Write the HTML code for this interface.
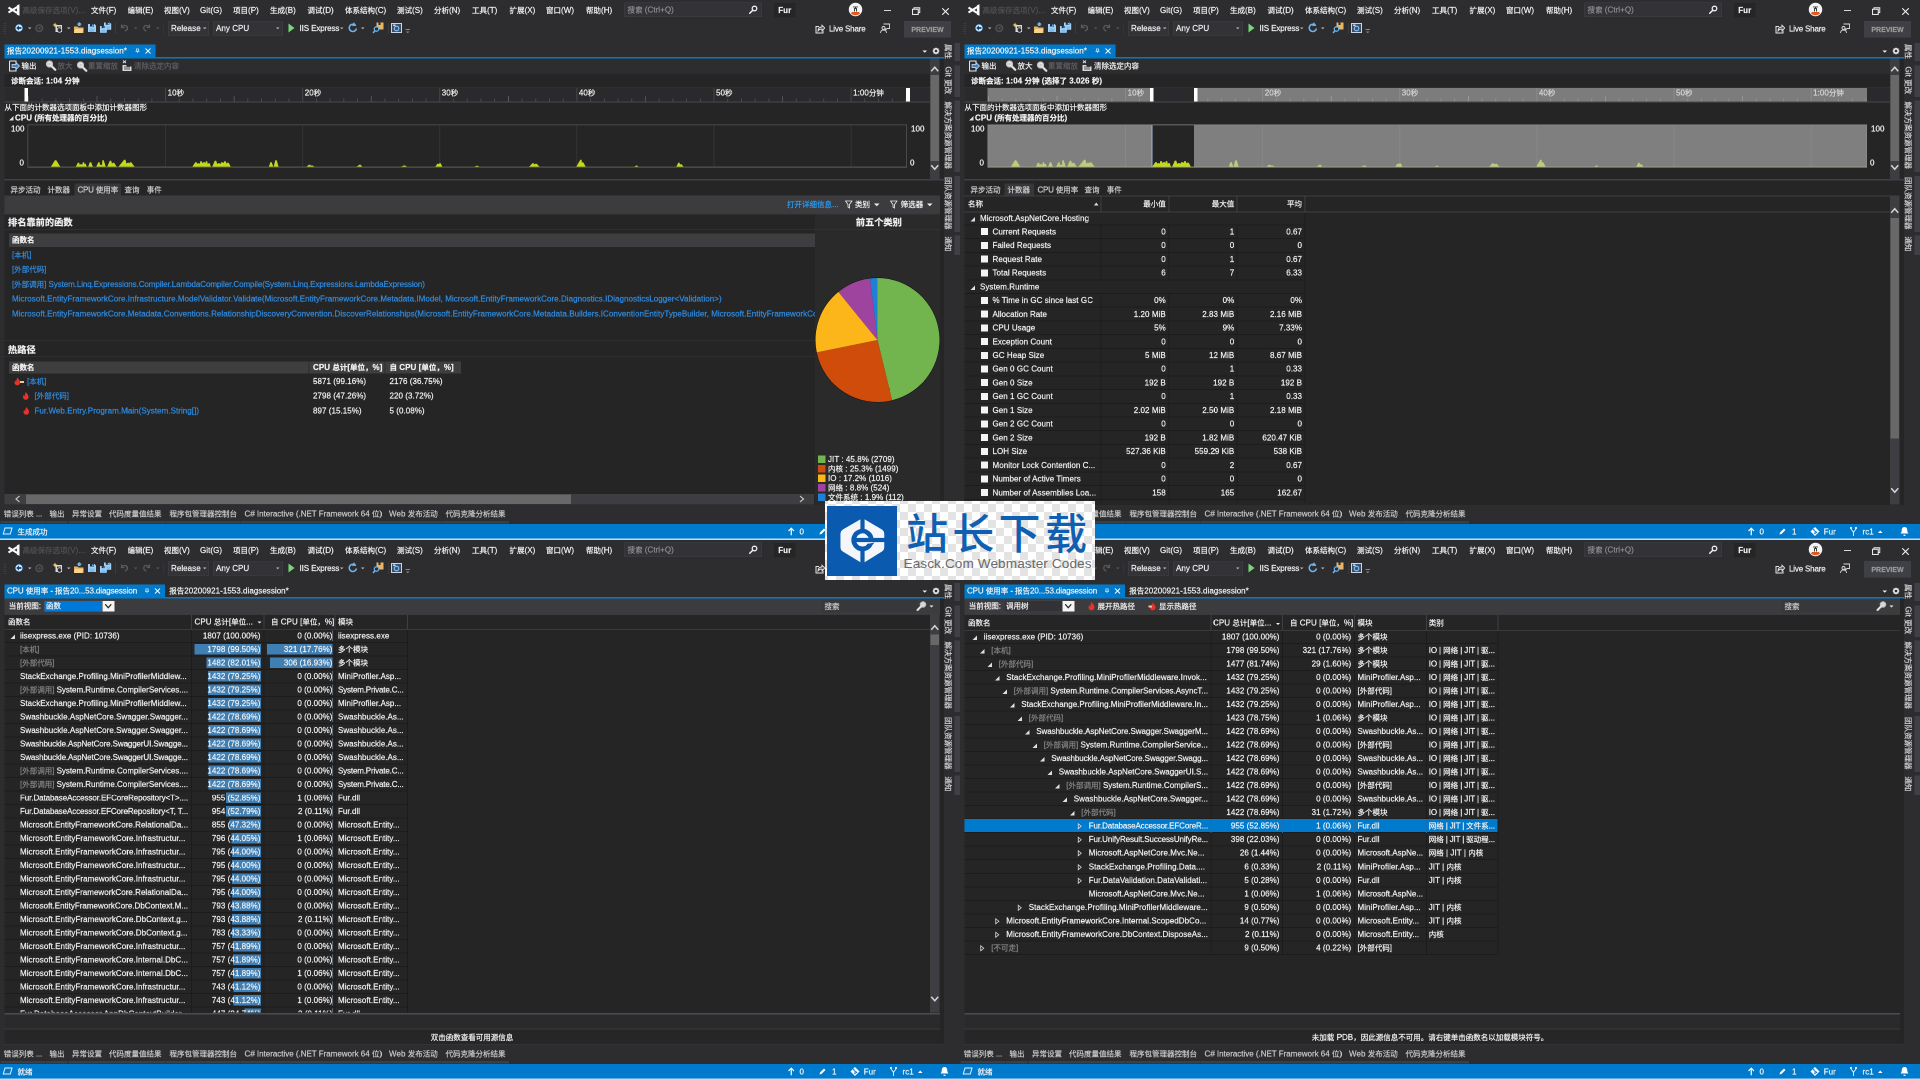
<!DOCTYPE html>
<html lang="zh-CN"><head><meta charset="utf-8"><title>Visual Studio</title>
<style>
html,body{margin:0;padding:0}
body{width:1920px;height:1080px;overflow:hidden;background:#2d2d30;position:relative}
.win{position:absolute;width:1920px;height:1080px;transform:scale(.5);transform-origin:0 0;overflow:hidden;background:#2d2d30;font:16px/22px "Liberation Sans","Noto Sans CJK SC",sans-serif;color:#f1f1f1;letter-spacing:.1px;will-change:transform}
.win span,.win b,.win svg,.win div{position:absolute;display:block}
.win span{white-space:pre;height:22px;-webkit-text-stroke:.4px}
.win i{font-style:normal;letter-spacing:0;font-size:.9375em}
.win u{text-decoration:none;color:#848484}
.dim{color:#505052}
.bd{font-weight:bold}
.h2{font-weight:bold;font-size:19.700px}
.lk{color:#2e8ce2}
.tt{color:#c8c8c8}
.vt{transform:rotate(90deg);transform-origin:0 0;color:#d2d2d2}
.wm{position:absolute;left:825px;top:501px;width:270px;height:79px;overflow:hidden;background-color:#fff;
background-image:linear-gradient(45deg,#e3e3e3 25%,transparent 25%,transparent 75%,#e3e3e3 75%),linear-gradient(45deg,#e3e3e3 25%,transparent 25%,transparent 75%,#e3e3e3 75%);
background-size:16px 16px;background-position:11px 3px,19px 11px}
</style></head>
<body>
<div class="win" style="left:0px;top:0px">
<svg style="left:14px;top:8px" width="26" height="24" viewBox="0 0 24 24"><path d="M18.8 2.5L24 0.5V23.5L18.8 21.5Z" fill="#fafafa"/><path d="M19.5 6L2 17M19.5 18L2 7" stroke="#fafafa" stroke-width="4.2" fill="none"/></svg>
<span class="dim" style="left:45px;top:10px;"><i>高级保存选项</i>(V)...</span>
<span class="mn" style="left:182px;top:10px;"><i>文件</i>(F)</span>
<span class="mn" style="left:255px;top:10px;"><i>编辑</i>(E)</span>
<span class="mn" style="left:328px;top:10px;"><i>视图</i>(V)</span>
<span class="mn" style="left:400px;top:10px;">Git(G)</span>
<span class="mn" style="left:466px;top:10px;"><i>项目</i>(P)</span>
<span class="mn" style="left:540px;top:10px;"><i>生成</i>(B)</span>
<span class="mn" style="left:615px;top:10px;"><i>调试</i>(D)</span>
<span class="mn" style="left:690px;top:10px;"><i>体系结构</i>(C)</span>
<span class="mn" style="left:794px;top:10px;"><i>测试</i>(S)</span>
<span class="mn" style="left:868px;top:10px;"><i>分析</i>(N)</span>
<span class="mn" style="left:944px;top:10px;"><i>工具</i>(T)</span>
<span class="mn" style="left:1019px;top:10px;"><i>扩展</i>(X)</span>
<span class="mn" style="left:1092px;top:10px;"><i>窗口</i>(W)</span>
<span class="mn" style="left:1172px;top:10px;"><i>帮助</i>(H)</span>
<b style="left:1248px;top:5px;width:276px;height:29px;background:#333337;border:1px solid #3f3f46;box-sizing:border-box"></b>
<span style="left:1255px;top:9px;color:#8c8c8c"><i>搜索</i> (Ctrl+Q)</span>
<svg style="left:1497px;top:10px" width="19" height="19" viewBox="0 0 19 19"><circle cx="12" cy="7" r="4.6" fill="none" stroke="#f1f1f1" stroke-width="2.6"/><path d="M8.5 10.5L2.5 16.5" stroke="#f1f1f1" stroke-width="3" stroke-linecap="round"/></svg>
<b style="left:1548px;top:6px;width:43px;height:29px;background:#252526;"></b>
<span class="bd" style="left:1569.5px;top:10px;transform:translateX(-50%);">Fur</span>
<svg style="left:1697px;top:5px" width="28" height="28" viewBox="0 0 28 28"><circle cx="14" cy="14" r="13.5" fill="#f4f4f4"/><path d="M5 22a13.5 13.5 0 0 0 18 0l-2-3h-14z" fill="#e2571e"/><path d="M9 8h10v3h-2v7h-2v-5h-2v5h-2v-7H9z" fill="#3a3a3a"/><circle cx="11" cy="10" r="1.3" fill="#fff"/><circle cx="17" cy="10" r="1.3" fill="#fff"/></svg>
<b style="left:1768px;top:20px;width:14px;height:2px;background:#d8d8d8;"></b>
<svg style="left:1824px;top:14px" width="17" height="16" viewBox="0 0 17 16"><path d="M4 4V1.5H15.5V11H13" fill="none" stroke="#e8e8e8" stroke-width="2"/><rect x="1" y="4.5" width="11.5" height="10.5" fill="none" stroke="#e8e8e8" stroke-width="2.2"/></svg>
<svg style="left:1883px;top:15px" width="16" height="16" viewBox="0 0 16 16"><path d="M1.5 1.5L14.5 14.5M14.5 1.5L1.5 14.5" stroke="#f1f1f1" stroke-width="2.2"/></svg>
<svg style="left:7px;top:45px" width="6" height="24" viewBox="0 0 6 24"><path d="M1 1v22M4 1v22" stroke="#46464a" stroke-width="1.6" stroke-dasharray="2 2"/></svg>
<svg style="left:29px;top:47px" width="18" height="18" viewBox="0 0 18 18"><circle cx="9" cy="9" r="8" fill="#cfe8ff" stroke="#0f3557" stroke-width="1.6"/><path d="M3.5 9l5.5-5v3.2h4.8v3.6H9V14z" fill="#0d3f70"/></svg>
<svg style="left:55.5px;top:55.25px" width="7" height="3.5" viewBox="0 0 7 3.5"><path d="M0 0H7L3.5 3.5Z" fill="#bdbdbd"/></svg>
<svg style="left:70px;top:48px" width="17" height="17" viewBox="0 0 17 17"><circle cx="8.5" cy="8.5" r="6.5" fill="none" stroke="#505053" stroke-width="3"/><path d="M12.5 8.5l-4-3.5v2.5H5v2h3.5V12z" fill="#505053"/></svg>
<svg style="left:105px;top:45px" width="22" height="22" viewBox="0 0 22 22"><rect x="6" y="5" width="13" height="14" fill="#d9d9d9"/><rect x="9" y="8" width="8" height="9" fill="#3a3a3d"/><path d="M5 0l1.6 3.4L10 5 6.6 6.6 5 10 3.4 6.6 0 5l3.4-1.6z" fill="#f3c667"/><circle cx="14" cy="15" r="4.5" fill="#2d2d30" stroke="#e8e8e8" stroke-width="1.6"/></svg>
<svg style="left:133.5px;top:55.25px" width="7" height="3.5" viewBox="0 0 7 3.5"><path d="M0 0H7L3.5 3.5Z" fill="#bdbdbd"/></svg>
<svg style="left:147px;top:44px" width="21" height="24" viewBox="0 0 21 24"><path d="M1 9h7l2 2h10v11H1z" fill="#e7b563"/><path d="M3 14h17l-3 8H1z" fill="#f5d48e"/><path d="M9 8V5H6l5.5-5 5.5 5H14v3z" fill="#6cb5f0"/></svg>
<svg style="left:176px;top:48px" width="16" height="16" viewBox="0 0 16 16"><path fill="#9fd0f7" d="M0 0H13L16 3V16H0Z"/><rect x="4" y="0" width="8" height="5" fill="#1f3347"/><rect x="8.5" y="1" width="2.5" height="3" fill="#9fd0f7"/><rect x="3" y="9" width="10" height="7" fill="#7fbdf0"/></svg>
<svg style="left:200px;top:45px" width="23" height="21" viewBox="0 0 23 21"><g transform="translate(8,0) scale(.9)"><path fill="#9fd0f7" d="M0 0H13L16 3V16H0Z"/><rect x="4" y="0" width="8" height="5" fill="#1f3347"/><rect x="8.5" y="1" width="2.5" height="3" fill="#9fd0f7"/><rect x="3" y="9" width="10" height="7" fill="#7fbdf0"/></g><g transform="translate(0,7) scale(.85)"><path fill="#9fd0f7" d="M0 0H13L16 3V16H0Z"/><rect x="4" y="0" width="8" height="5" fill="#1f3347"/><rect x="8.5" y="1" width="2.5" height="3" fill="#9fd0f7"/><rect x="3" y="9" width="10" height="7" fill="#7fbdf0"/></g></svg>
<b style="left:231px;top:45px;width:1px;height:23px;background:#46464a;"></b>
<svg style="left:240px;top:46px" width="18" height="18" viewBox="0 0 18 18"><path d="M3 3v6h6" fill="none" stroke="#5a5a5e" stroke-width="2.4"/><path d="M3.5 8.5C6 3.5 14 3.5 14.5 10c0 3-2 5-5 6" fill="none" stroke="#5a5a5e" stroke-width="2.4"/></svg>
<svg style="left:267.5px;top:55.25px" width="7" height="3.5" viewBox="0 0 7 3.5"><path d="M0 0H7L3.5 3.5Z" fill="#5a5a5e"/></svg>
<svg style="left:284px;top:46px" width="18" height="18" viewBox="0 0 18 18"><path d="M15 3v6H9" fill="none" stroke="#5a5a5e" stroke-width="2.4"/><path d="M14.5 8.5C12 3.5 4 3.5 3.5 10c0 3 2 5 5 6" fill="none" stroke="#5a5a5e" stroke-width="2.4"/></svg>
<svg style="left:311.5px;top:55.25px" width="7" height="3.5" viewBox="0 0 7 3.5"><path d="M0 0H7L3.5 3.5Z" fill="#5a5a5e"/></svg>
<b style="left:326px;top:45px;width:1px;height:23px;background:#3a3a3e;"></b>
<b style="left:336px;top:43px;width:82px;height:28px;background:#333337;border:1px solid #434346;box-sizing:border-box"></b>
<span style="left:342px;top:45.5px;">Release</span>
<svg style="left:405.5px;top:55.25px" width="7" height="3.5" viewBox="0 0 7 3.5"><path d="M0 0H7L3.5 3.5Z" fill="#bdbdbd"/></svg>
<b style="left:426px;top:43px;width:140px;height:28px;background:#333337;border:1px solid #434346;box-sizing:border-box"></b>
<span style="left:432px;top:45.5px;">Any CPU</span>
<svg style="left:551.5px;top:55.25px" width="7" height="3.5" viewBox="0 0 7 3.5"><path d="M0 0H7L3.5 3.5Z" fill="#bdbdbd"/></svg>
<svg style="left:576px;top:46px" width="14" height="20" viewBox="0 0 14 20"><path d="M1 1l12 9-12 9z" fill="#7ad67a"/></svg>
<span style="left:599px;top:45.5px;letter-spacing:-.2px">IIS Express</span>
<svg style="left:679.5px;top:55.25px" width="7" height="3.5" viewBox="0 0 7 3.5"><path d="M0 0H7L3.5 3.5Z" fill="#bdbdbd"/></svg>
<svg style="left:695px;top:45px" width="21" height="22" viewBox="0 0 21 22"><path d="M16.5 6.5A7.2 7.2 0 1 0 17.8 12" fill="none" stroke="#6cb5f0" stroke-width="3"/><path d="M11 0l7 4.5-7 4.5z" fill="#6cb5f0" transform="rotate(25 14 4)"/></svg>
<svg style="left:721.5px;top:55.25px" width="7" height="3.5" viewBox="0 0 7 3.5"><path d="M0 0H7L3.5 3.5Z" fill="#bdbdbd"/></svg>
<svg style="left:745px;top:44px" width="24" height="24" viewBox="0 0 24 24"><path d="M8 1h14v14H8z" fill="#e7b563"/><path d="M12 1v5h4V1" fill="#2d2d30"/><circle cx="8" cy="14" r="4.5" fill="#2d2d30" stroke="#6cb5f0" stroke-width="2.4"/><path d="M5 17.5L1 22" stroke="#6cb5f0" stroke-width="3"/></svg>
<b style="left:776px;top:45px;width:1px;height:23px;background:#46464a;"></b>
<svg style="left:782px;top:46px" width="22" height="20" viewBox="0 0 22 20"><rect x="1" y="1" width="20" height="18" fill="#3d4f66" stroke="#c8d6e8" stroke-width="2"/><circle cx="11" cy="11" r="4.5" fill="none" stroke="#7fbcf5" stroke-width="2.4"/><rect x="4" y="3" width="5" height="3" fill="#c8d6e8"/></svg>
<b style="left:811px;top:58px;width:9px;height:1.5px;background:#8a8a8a;"></b>
<svg style="left:812px;top:63.25px" width="7" height="3.5" viewBox="0 0 7 3.5"><path d="M0 0H7L3.5 3.5Z" fill="#8a8a8a"/></svg>
<svg style="left:1630px;top:48px" width="20" height="20" viewBox="0 0 20 20"><path d="M8 5H2v13h14v-5" fill="none" stroke="#e4e4e4" stroke-width="2"/><path d="M6 14c0-5 3-8 8-8V2.5l5.5 5.5-5.5 5.5V10c-4 0-6 1-8 4z" fill="none" stroke="#e4e4e4" stroke-width="1.8"/></svg>
<span style="left:1658px;top:47px;letter-spacing:-0.35px;">Live Share</span>
<svg style="left:1760px;top:46px" width="20" height="22" viewBox="0 0 20 22"><path d="M7 2h12v9h-5l-3 3v-3" fill="none" stroke="#d8d8d8" stroke-width="1.8"/><circle cx="7" cy="10" r="3" fill="none" stroke="#d8d8d8" stroke-width="1.8"/><path d="M1 20c0-4 3-6 6-6s6 2 6 6" fill="none" stroke="#d8d8d8" stroke-width="1.8"/></svg>
<b style="left:1808px;top:42px;width:94px;height:33px;background:#3f3f46;"></b>
<span style="left:1855px;top:47.5px;transform:translateX(-50%);color:#9b9b9b;font-weight:bold;font-size:14px;letter-spacing:0">PREVIEW</span>
<b style="left:9px;top:89px;width:302px;height:26px;background:#007acc;"></b>
<span style="left:14px;top:91px;"><i>报告</i>20200921-1553.diagsession*</span>
<svg style="left:270px;top:97px" width="10" height="10" viewBox="0 0 11 11"><path d="M3 1h5v5H3zM1 6h9M5.5 6v4" fill="none" stroke="#e6f2fb" stroke-width="1.5"/></svg>
<svg style="left:290px;top:96px" width="12" height="12" viewBox="0 0 12 12"><path d="M1 1l10 10M11 1L1 11" stroke="#fff" stroke-width="1.8"/></svg>
<b style="left:9px;top:114px;width:1879px;height:3px;background:#007acc;"></b>
<svg style="left:1844.5px;top:100.75px" width="9" height="4.5" viewBox="0 0 9 4.5"><path d="M0 0H9L4.5 4.5Z" fill="#f1f1f1"/></svg>
<svg style="left:1865px;top:95px" width="14" height="14" viewBox="0 0 14 14"><circle cx="7" cy="7" r="4.3" fill="none" stroke="#f1f1f1" stroke-width="3.2"/><path d="M7 0v14M0 7h14M2 2l10 10M12 2L2 12" stroke="#f1f1f1" stroke-width="1.6" stroke-dasharray="2.2 9.6"/></svg>
<b style="left:1888px;top:80px;width:32px;height:968px;background:#2d2d30;"></b>
<b style="left:1909px;top:86px;width:11px;height:36px;background:#3f3f46;"></b>
<span class="vt" style="left:1907px;top:88px"><i>属性</i></span>
<b style="left:1909px;top:131px;width:11px;height:63px;background:#3f3f46;"></b>
<span class="vt" style="left:1907px;top:133px">Git <i>更改</i></span>
<b style="left:1909px;top:201px;width:11px;height:143px;background:#3f3f46;"></b>
<span class="vt" style="left:1907px;top:203px"><i>解决方案资源管理器</i></span>
<b style="left:1909px;top:352px;width:11px;height:112px;background:#3f3f46;"></b>
<span class="vt" style="left:1907px;top:354px"><i>团队资源管理器</i></span>
<b style="left:1909px;top:471px;width:11px;height:38px;background:#3f3f46;"></b>
<span class="vt" style="left:1907px;top:473px"><i>通知</i></span>
<span class="tt" style="left:7.5px;top:1016.5px;letter-spacing:-0.32px;"><i>错误列表</i> ...</span>
<b style="left:0.5px;top:1042px;width:90.5px;height:5px;background:#3b3f46;"></b>
<span class="tt" style="left:99px;top:1016.5px;letter-spacing:-0.45px;"><i>输出</i></span>
<b style="left:92px;top:1042px;width:43px;height:5px;background:#3b3f46;"></b>
<span class="tt" style="left:144px;top:1016.5px;"><i>异常设置</i></span>
<b style="left:137px;top:1042px;width:74px;height:5px;background:#3b3f46;"></b>
<span class="tt" style="left:218px;top:1016.5px;"><i>代码度量值结果</i></span>
<b style="left:211px;top:1042px;width:120px;height:5px;background:#3b3f46;"></b>
<span class="tt" style="left:339px;top:1016.5px;"><i>程序包管理器控制台</i></span>
<b style="left:332px;top:1042px;width:149px;height:5px;background:#3b3f46;"></b>
<span class="tt" style="left:489px;top:1016.5px;letter-spacing:-0.03px;">C# Interactive (.NET Framework 64 <i>位</i>)</span>
<b style="left:482px;top:1042px;width:289px;height:5px;background:#3b3f46;"></b>
<span class="tt" style="left:778px;top:1016.5px;">Web <i>发布活动</i></span>
<b style="left:771px;top:1042px;width:112px;height:5px;background:#3b3f46;"></b>
<span class="tt" style="left:891px;top:1016.5px;letter-spacing:-0.45px;"><i>代码克隆分析结果</i></span>
<b style="left:884px;top:1042px;width:133px;height:5px;background:#3b3f46;"></b>
<b style="left:0px;top:1048px;width:1920px;height:29px;background:#007acc;"></b>
<b style="left:0px;top:1077px;width:1920px;height:3px;background:#b9def7;"></b>
<b style="left:9px;top:117px;width:1879px;height:893px;background:#252526;"></b>
<b style="left:9px;top:117px;width:1851px;height:31px;background:#2d2d30;"></b>
<svg style="left:18px;top:121px" width="22" height="22" viewBox="0 0 22 22"><path d="M1 1h13v6M14 15v6H1V1" fill="none" stroke="#e4e4e4" stroke-width="2.2"/><path d="M6 8h8V4l7 7-7 7v-4H6z" fill="#3b83c4" stroke="#d5e6f5" stroke-width="1.4"/></svg>
<span style="left:43px;top:120.5px;"><i>输出</i></span>
<svg style="left:91px;top:120px" width="22" height="22" viewBox="0 0 22 22"><circle cx="8" cy="8" r="6" fill="#e8e8e8" stroke="#bdbdbd" stroke-width="2.5"/><path d="M6 8h4" stroke="#8a8a8a" stroke-width="1.6"/><path d="M12.5 12.5l7 7" stroke="#e0e0e0" stroke-width="4.5" stroke-linecap="round"/></svg>
<span style="left:115px;top:120.5px;color:#5f5f62"><i>放大</i></span>
<svg style="left:153px;top:122px" width="22" height="22" viewBox="0 0 22 22"><circle cx="8" cy="8" r="6" fill="#e8e8e8" stroke="#bdbdbd" stroke-width="2.5"/><path d="M6 8h4" stroke="#8a8a8a" stroke-width="1.6"/><path d="M12.5 12.5l7 7" stroke="#e0e0e0" stroke-width="4.5" stroke-linecap="round"/></svg>
<span style="left:176px;top:120.5px;color:#5f5f62"><i>重置缩放</i></span>
<svg style="left:243px;top:120px" width="21" height="22" viewBox="0 0 21 22"><path d="M3 1l6 5M9 1L3 6" stroke="#e0e0e0" stroke-width="2"/><path d="M2 10h7l2 3h9v9H2z" fill="#d9d9d9"/><path d="M5 14h12M5 18h12" stroke="#252526" stroke-width="1.5"/></svg>
<span style="left:268px;top:120.5px;color:#5f5f62"><i>清除选定内容</i></span>
<span class="bd" style="left:22px;top:151px;"><i>诊断会话</i>: 1:04 <i>分钟</i></span>
<b style="left:9px;top:175px;width:1851px;height:29px;background:#2a2a2c;"></b>
<svg style="left:9px;top:175px" width="1851" height="29" viewBox="0 0 1851 29"><path d="M48 17v12" stroke="#5a5a5d" stroke-width="1.6"/><path d="M75.4 22v7" stroke="#505053" stroke-width="1.6"/><path d="M102.8 22v7" stroke="#505053" stroke-width="1.6"/><path d="M130.3 22v7" stroke="#505053" stroke-width="1.6"/><path d="M157.7 22v7" stroke="#505053" stroke-width="1.6"/><path d="M185.1 17v12" stroke="#5a5a5d" stroke-width="1.6"/><path d="M212.5 22v7" stroke="#505053" stroke-width="1.6"/><path d="M239.9 22v7" stroke="#505053" stroke-width="1.6"/><path d="M267.4 22v7" stroke="#505053" stroke-width="1.6"/><path d="M294.8 22v7" stroke="#505053" stroke-width="1.6"/><path d="M322.2 0v29" stroke="#4c4c4f" stroke-width="1.6"/><path d="M349.6 22v7" stroke="#505053" stroke-width="1.6"/><path d="M377 22v7" stroke="#505053" stroke-width="1.6"/><path d="M404.5 22v7" stroke="#505053" stroke-width="1.6"/><path d="M431.9 22v7" stroke="#505053" stroke-width="1.6"/><path d="M459.3 17v12" stroke="#5a5a5d" stroke-width="1.6"/><path d="M486.7 22v7" stroke="#505053" stroke-width="1.6"/><path d="M514.1 22v7" stroke="#505053" stroke-width="1.6"/><path d="M541.6 22v7" stroke="#505053" stroke-width="1.6"/><path d="M569 22v7" stroke="#505053" stroke-width="1.6"/><path d="M596.4 0v29" stroke="#4c4c4f" stroke-width="1.6"/><path d="M623.8 22v7" stroke="#505053" stroke-width="1.6"/><path d="M651.2 22v7" stroke="#505053" stroke-width="1.6"/><path d="M678.7 22v7" stroke="#505053" stroke-width="1.6"/><path d="M706.1 22v7" stroke="#505053" stroke-width="1.6"/><path d="M733.5 17v12" stroke="#5a5a5d" stroke-width="1.6"/><path d="M760.9 22v7" stroke="#505053" stroke-width="1.6"/><path d="M788.3 22v7" stroke="#505053" stroke-width="1.6"/><path d="M815.8 22v7" stroke="#505053" stroke-width="1.6"/><path d="M843.2 22v7" stroke="#505053" stroke-width="1.6"/><path d="M870.6 0v29" stroke="#4c4c4f" stroke-width="1.6"/><path d="M898 22v7" stroke="#505053" stroke-width="1.6"/><path d="M925.4 22v7" stroke="#505053" stroke-width="1.6"/><path d="M952.9 22v7" stroke="#505053" stroke-width="1.6"/><path d="M980.3 22v7" stroke="#505053" stroke-width="1.6"/><path d="M1007.7 17v12" stroke="#5a5a5d" stroke-width="1.6"/><path d="M1035.1 22v7" stroke="#505053" stroke-width="1.6"/><path d="M1062.5 22v7" stroke="#505053" stroke-width="1.6"/><path d="M1090 22v7" stroke="#505053" stroke-width="1.6"/><path d="M1117.4 22v7" stroke="#505053" stroke-width="1.6"/><path d="M1144.8 0v29" stroke="#4c4c4f" stroke-width="1.6"/><path d="M1172.2 22v7" stroke="#505053" stroke-width="1.6"/><path d="M1199.6 22v7" stroke="#505053" stroke-width="1.6"/><path d="M1227.1 22v7" stroke="#505053" stroke-width="1.6"/><path d="M1254.5 22v7" stroke="#505053" stroke-width="1.6"/><path d="M1281.9 17v12" stroke="#5a5a5d" stroke-width="1.6"/><path d="M1309.3 22v7" stroke="#505053" stroke-width="1.6"/><path d="M1336.7 22v7" stroke="#505053" stroke-width="1.6"/><path d="M1364.2 22v7" stroke="#505053" stroke-width="1.6"/><path d="M1391.6 22v7" stroke="#505053" stroke-width="1.6"/><path d="M1419 0v29" stroke="#4c4c4f" stroke-width="1.6"/><path d="M1446.4 22v7" stroke="#505053" stroke-width="1.6"/><path d="M1473.8 22v7" stroke="#505053" stroke-width="1.6"/><path d="M1501.3 22v7" stroke="#505053" stroke-width="1.6"/><path d="M1528.7 22v7" stroke="#505053" stroke-width="1.6"/><path d="M1556.1 17v12" stroke="#5a5a5d" stroke-width="1.6"/><path d="M1583.5 22v7" stroke="#505053" stroke-width="1.6"/><path d="M1610.9 22v7" stroke="#505053" stroke-width="1.6"/><path d="M1638.4 22v7" stroke="#505053" stroke-width="1.6"/><path d="M1665.8 22v7" stroke="#505053" stroke-width="1.6"/><path d="M1693.2 0v29" stroke="#4c4c4f" stroke-width="1.6"/><path d="M1720.6 22v7" stroke="#505053" stroke-width="1.6"/><path d="M1748 22v7" stroke="#505053" stroke-width="1.6"/><path d="M1775.5 22v7" stroke="#505053" stroke-width="1.6"/><path d="M1802.9 22v7" stroke="#505053" stroke-width="1.6"/></svg>
<b style="left:9px;top:203px;width:1851px;height:2px;background:#4a4a4d;"></b>
<b style="left:9px;top:175px;width:1851px;height:1px;background:#38383a;"></b>
<span style="left:335.2px;top:174.5px;">10<i>秒</i></span>
<span style="left:609.4px;top:174.5px;">20<i>秒</i></span>
<span style="left:883.6px;top:174.5px;">30<i>秒</i></span>
<span style="left:1157.8px;top:174.5px;">40<i>秒</i></span>
<span style="left:1432px;top:174.5px;">50<i>秒</i></span>
<span style="left:1706.2px;top:174.5px;">1:00<i>分钟</i></span>
<b style="left:49px;top:176px;width:7px;height:27px;background:#fff;"></b>
<b style="left:1812px;top:176px;width:8px;height:27px;background:#fff;"></b>
<span style="left:9px;top:204px;"><i>从下面的计数器选项面板中添加计数器图形</i></span>
<svg style="left:18px;top:232px" width="9" height="9" viewBox="0 0 9 9"><path d="M9 0v9H0z" fill="#e0e0e0"/></svg>
<span class="bd" style="left:30px;top:225px;">CPU (<i>所有处理器的百分比</i>)</span>
<svg style="left:55px;top:249px" width="1759" height="86" viewBox="0 0 1759 86"><path d="M276.2 0v86" stroke="#3a3a3c" stroke-width="1.5"/><path d="M550.4 0v86" stroke="#3a3a3c" stroke-width="1.5"/><path d="M824.6 0v86" stroke="#3a3a3c" stroke-width="1.5"/><path d="M1098.8 0v86" stroke="#3a3a3c" stroke-width="1.5"/><path d="M1373 0v86" stroke="#3a3a3c" stroke-width="1.5"/><path d="M1647.2 0v86" stroke="#3a3a3c" stroke-width="1.5"/><path d="M0 85.5L46.2 85.5L54.8 71.5L57.6 71.5L66.2 85.5L96.2 85.5L100.6 76.5L103.4 76.5L104.5 80.7L105.6 79.5L108.4 79.5L109.5 80.7L110.6 75.5L113.4 75.5L113.5 79.9L113.6 78.5L116.4 78.5L119 85.5L121 85.5L124.6 75.5L127.4 75.5L131 85.5L137 85.5L141.6 75.5L144.4 75.5L145 81.5L145.6 80.5L148.4 80.5L149 81.5L149.6 71.5L152.4 71.5L157 85.5L159 85.5L164.6 72.5L167.4 72.5L169 78.3L170.6 76.5L173.4 76.5L179 85.5L181 85.5L193.2 70.5L196 70.5L197.8 78.3L199.6 76.5L202.4 76.5L203.5 78.3L204.6 75.5L207.4 75.5L215 85.5L329 85.5L335.6 75.5L338.4 75.5L339.5 79.1L340.6 77.5L343.4 77.5L344.5 79.1L345.6 73.5L348.4 73.5L350 77.5L351.6 75.5L354.4 75.5L355.5 77.5L356.6 73.5L359.4 73.5L360.5 79.1L361.6 77.5L364.4 77.5L367 85.5L369 85.5L374.6 72.5L377.4 72.5L379.5 79.1L381.6 77.5L384.4 77.5L386 79.1L387.6 75.5L390.4 75.5L392 77.5L393.6 73.5L396.4 73.5L398 78.3L399.6 76.5L402.4 76.5L407 85.5L482.5 85.5L485.6 75.5L488.4 75.5L492 85.5L492 85.5L495.6 71.5L498.4 71.5L502.5 85.5L557 85.5L562.6 80.5L565.4 80.5L566.5 82.6L567.6 81.9L570.4 81.9L575 85.5L657 85.5L663.6 80.5L666.4 80.5L670 85.5L745 85.5L752.6 81.9L755.4 81.9L760 85.5L815 85.5L819.6 78.5L822.4 78.5L823 79.9L823.6 77.5L826.4 77.5L830 85.5L892.5 85.5L897.6 82.5L900.4 82.5L905 85.5L1002.5 85.5L1009.6 77.5L1012.4 77.5L1014 79.9L1015.6 78.5L1018.4 78.5L1025 85.5L1097 85.5L1105.6 70.5L1108.4 70.5L1108.5 77.5L1108.6 75.5L1111.4 75.5L1117 85.5L1212.5 85.5L1216.6 81.9L1219.4 81.9L1222.5 85.5L1297 85.5L1301.6 76.5L1304.4 76.5L1305 80.7L1305.6 79.5L1308.4 79.5L1312.5 85.5L1759 85.5Z" fill="#c3d91a"/><rect x=".75" y=".75" width="1757.5" height="84.5" fill="none" stroke="#555558" stroke-width="1.5"/><path d="M0 85.5h1759" stroke="#6c6f55" stroke-width="2"/></svg>
<span style="left:22px;top:247px;">100</span>
<span style="left:39px;top:315px;">0</span>
<span style="left:1822px;top:247px;">100</span>
<span style="left:1820px;top:315px;">0</span>
<b style="left:1860px;top:117px;width:19px;height:241px;background:#3e3e42;"></b>
<b style="left:1861px;top:150px;width:17px;height:172px;background:#686868;"></b>
<svg style="left:1861px;top:132px" width="17" height="12" viewBox="0 0 17 12"><path d="M1.5 10.5l7-8 7 8" fill="none" stroke="#d6d6d6" stroke-width="3"/></svg>
<svg style="left:1861px;top:329px" width="17" height="12" viewBox="0 0 17 12"><path d="M1.5 1.5l7 8 7-8" fill="none" stroke="#d6d6d6" stroke-width="3"/></svg>
<b style="left:9px;top:358px;width:1879px;height:3px;background:#3f3f46;"></b>
<span style="left:21px;top:369px;color:#cdcdcd;"><i>异步活动</i></span>
<span style="left:95px;top:369px;color:#cdcdcd;"><i>计数器</i></span>
<b style="left:149px;top:367px;width:92.5px;height:24.5px;background:#37373a;"></b>
<span style="left:155px;top:369px;color:#cdcdcd;letter-spacing:-0.45px;">CPU <i>使用率</i></span>
<span style="left:249px;top:369px;color:#cdcdcd;"><i>查询</i></span>
<span style="left:293.5px;top:369px;color:#cdcdcd;"><i>事件</i></span>
<b style="left:9px;top:391px;width:1871px;height:35.5px;background:#3c3c3e;"></b>
<span style="left:1574px;top:398px;color:#2a9df4"><i>打开详细信息</i>...</span>
<svg style="left:1690px;top:401px" width="15" height="17" viewBox="0 0 15 17"><path d="M1 1h13l-5 7v7l-3-2V8z" fill="none" stroke="#e8e8e8" stroke-width="1.7"/></svg>
<span style="left:1710px;top:398px;"><i>类别</i></span>
<svg style="left:1747.5px;top:407.25px" width="11" height="5.5" viewBox="0 0 11 5.5"><path d="M0 0H11L5.5 5.5Z" fill="#f1f1f1"/></svg>
<svg style="left:1780px;top:401px" width="15" height="17" viewBox="0 0 15 17"><path d="M1 1h13l-5 7v7l-3-2V8z" fill="none" stroke="#e8e8e8" stroke-width="1.7"/></svg>
<span style="left:1801.5px;top:398px;"><i>筛选器</i></span>
<svg style="left:1853.5px;top:407.25px" width="11" height="5.5" viewBox="0 0 11 5.5"><path d="M0 0H11L5.5 5.5Z" fill="#f1f1f1"/></svg>
<b style="left:1630px;top:427px;width:250px;height:583px;background:#2a2a2b;"></b>
<b style="left:9px;top:427px;width:1871px;height:1.5px;background:#38383a;"></b>
<b style="left:9px;top:458.5px;width:1871px;height:1.5px;background:#38383a;"></b>
<span class="h2" style="left:16px;top:433px;"><i>排名靠前的函数</i></span>
<span class="h2" style="left:1711.5px;top:433px;"><i>前五个类别</i></span>
<b style="left:18px;top:467px;width:1612px;height:27px;background:#3e3e41;"></b>
<span class="bd" style="left:24px;top:469px;"><i>函数名</i></span>
<div style="left:18px;top:495px;width:1612px;height:150px;overflow:hidden">
<span class="lk" style="left:6px;top:4px;">[<i>本机</i>]</span>
<span class="lk" style="left:6px;top:33px;">[<i>外部代码</i>]</span>
<span class="lk" style="left:6px;top:63px;letter-spacing:-0.15px;">[<i>外部调用</i>] System.Linq.Expressions.Compiler.LambdaCompiler.Compile(System.Linq.Expressions.LambdaExpression)</span>
<span class="lk" style="left:6px;top:92px;">Microsoft.EntityFrameworkCore.Infrastructure.ModelValidator.Validate(Microsoft.EntityFrameworkCore.Metadata.IModel, Microsoft.EntityFrameworkCore.Diagnostics.IDiagnosticsLogger&lt;Validation&gt;)</span>
<span class="lk" style="left:6px;top:122px;">Microsoft.EntityFrameworkCore.Metadata.Conventions.RelationshipDiscoveryConvention.DiscoverRelationships(Microsoft.EntityFrameworkCore.Metadata.Builders.IConventionEntityTypeBuilder, Microsoft.EntityFrameworkCore</span>
</div>
<b style="left:9px;top:679.5px;width:1621px;height:1.5px;background:#38383a;"></b>
<b style="left:9px;top:711.5px;width:1621px;height:1.5px;background:#38383a;"></b>
<span class="h2" style="left:16px;top:688px;"><i>热路径</i></span>
<b style="left:18px;top:722.5px;width:904px;height:24.5px;background:#3e3e41;"></b>
<b style="left:617px;top:722.5px;width:2px;height:24.5px;background:#2d2d30;"></b>
<b style="left:769px;top:722.5px;width:2px;height:24.5px;background:#2d2d30;"></b>
<span class="bd" style="left:24px;top:723.5px;"><i>函数名</i></span>
<span class="bd" style="left:626px;top:723.5px;">CPU <i>总计</i>[<i>单位，</i>%]</span>
<span class="bd" style="left:779px;top:723.5px;"><i>自</i> CPU [<i>单位，</i>%]</span>
<svg style="left:29px;top:755px" width="12" height="16" viewBox="0 0 12 16"><path d="M6 0c1 3 5 5 5 10a5.5 5.5 0 0 1-11 0c0-2 1-3.5 2-4.5 0 1.5 .5 2.5 1.5 3C3.5 5 4.5 2 6 0z" fill="#e8332a"/></svg>
<svg style="left:40px;top:762px" width="8" height="5" viewBox="0 0 8 5"><path d="M0 0h8v4H0z" fill="#e8c9a0"/></svg>
<span class="lk" style="left:54px;top:752px;">[<i>本机</i>]</span>
<span style="left:626px;top:752px;">5871 (99.16%)</span>
<span style="left:779px;top:752px;">2176 (36.75%)</span>
<svg style="left:46px;top:784px" width="12" height="16" viewBox="0 0 12 16"><path d="M6 0c1 3 5 5 5 10a5.5 5.5 0 0 1-11 0c0-2 1-3.5 2-4.5 0 1.5 .5 2.5 1.5 3C3.5 5 4.5 2 6 0z" fill="#e8332a"/></svg>
<span class="lk" style="left:69px;top:781px;">[<i>外部代码</i>]</span>
<span style="left:626px;top:781px;">2798 (47.26%)</span>
<span style="left:779px;top:781px;">220 (3.72%)</span>
<svg style="left:47px;top:814px" width="12" height="16" viewBox="0 0 12 16"><path d="M6 0c1 3 5 5 5 10a5.5 5.5 0 0 1-11 0c0-2 1-3.5 2-4.5 0 1.5 .5 2.5 1.5 3C3.5 5 4.5 2 6 0z" fill="#e8332a"/></svg>
<span class="lk" style="left:69px;top:811px;">Fur.Web.Entry.Program.Main(System.String[])</span>
<span style="left:626px;top:811px;">897 (15.15%)</span>
<span style="left:779px;top:811px;">5 (0.08%)</span>
<svg style="left:1630px;top:555px" width="250" height="250" viewBox="0 0 250 250"><circle cx="125" cy="125" r="125" fill="#141414"/><path d="M125 125L125 1A124 124 0 0 1 154.11 245.53Z" fill="#72b54f"/><path d="M125 125L154.11 245.53A124 124 0 0 1 3.48 149.7Z" fill="#cf4c0a"/><path d="M125 125L3.48 149.7A124 124 0 0 1 46.84 28.73Z" fill="#fdb61a"/><path d="M125 125L46.84 28.73A124 124 0 0 1 110.14 1.89Z" fill="#9f449e"/><path d="M125 125L110.14 1.89A124 124 0 0 1 125 1Z" fill="#1f80d8"/></svg>
<b style="left:1636px;top:910.5px;width:15px;height:15px;background:#72b54f;"></b>
<span style="left:1656px;top:907.5px;">JIT : 45.8% (2709)</span>
<b style="left:1636px;top:929.5px;width:15px;height:15px;background:#cf4c0a;"></b>
<span style="left:1656px;top:926.5px;"><i>内核</i> : 25.3% (1499)</span>
<b style="left:1636px;top:948.5px;width:15px;height:15px;background:#fdb61a;"></b>
<span style="left:1656px;top:945.5px;">IO : 17.2% (1016)</span>
<b style="left:1636px;top:967.5px;width:15px;height:15px;background:#9f449e;"></b>
<span style="left:1656px;top:964.5px;"><i>网络</i> : 8.8% (524)</span>
<b style="left:1636px;top:986.5px;width:15px;height:15px;background:#1f80d8;"></b>
<span style="left:1656px;top:983.5px;"><i>文件系统</i> : 1.9% (112)</span>
<b style="left:9px;top:987.5px;width:1619px;height:21.5px;background:#3e3e42;"></b>
<b style="left:52px;top:988.5px;width:1090px;height:19.5px;background:#686868;"></b>
<svg style="left:30px;top:991px" width="10" height="14" viewBox="0 0 10 14"><path d="M9 1L2 7l7 6" fill="none" stroke="#d0d0d0" stroke-width="2.2"/></svg>
<svg style="left:1599px;top:991px" width="10" height="14" viewBox="0 0 10 14"><path d="M1 1l7 6-7 6" fill="none" stroke="#d0d0d0" stroke-width="2.2"/></svg>
<svg style="left:5px;top:1054px" width="20" height="16" viewBox="0 0 20 16"><path d="M5 2h14l-3.5 12H1.5z" fill="none" stroke="#dff0fc" stroke-width="2"/></svg>
<span style="left:35px;top:1052.5px;"><i>生成成功</i></span>
<svg style="left:1576px;top:1055px" width="13" height="16" viewBox="0 0 13 16"><path d="M6.5 1.5v14M1 7l5.5-5.5L12 7" fill="none" stroke="#fff" stroke-width="2.4"/></svg>
<span style="left:1599px;top:1052.5px;">0</span>
<svg style="left:1637px;top:1055px" width="16" height="16" viewBox="0 0 16 16"><path d="M2 14l1-4 8-8 3 3-8 8z" fill="#fff"/></svg>
<span style="left:1664px;top:1052.5px;">1</span>
<svg style="left:1701px;top:1054px" width="18" height="18" viewBox="0 0 18 18"><path d="M9 0l9 9-9 9-9-9z" fill="#fff"/><path d="M6 5l6 6M9 8v5" stroke="#007acc" stroke-width="1.6"/><circle cx="6.5" cy="5.5" r="1.5" fill="#007acc"/><circle cx="9" cy="13" r="1.5" fill="#007acc"/><circle cx="12" cy="10.5" r="1.5" fill="#007acc"/></svg>
<span style="left:1727.5px;top:1052.5px;">Fur</span>
<svg style="left:1778px;top:1053px" width="18" height="20" viewBox="0 0 18 20"><path d="M4 3c0 6 5 5 5 10v6M14 3c0 6-5 5-5 10" fill="none" stroke="#e6f2fb" stroke-width="1.8"/><circle cx="4" cy="3" r="2.2" fill="#e6f2fb"/><circle cx="14" cy="3" r="2.2" fill="#e6f2fb"/></svg>
<span style="left:1805px;top:1052.5px;">rc1</span>
<svg style="left:1836px;top:1061px" width="9" height="5" viewBox="0 0 9 5"><path d="M0 5h9L4.5 0z" fill="#fff"/></svg>
<svg style="left:1880px;top:1053px" width="18" height="20" viewBox="0 0 18 20"><path d="M9 1c4 0 5.5 3 5.5 7 0 3 1.5 5 2.5 6H1c1-1 2.5-3 2.5-6C3.5 4 5 1 9 1z" fill="#fff"/><path d="M6.5 16.5a2.5 2.5 0 0 0 5 0" fill="#fff"/></svg>
</div>
<div class="win" style="left:960px;top:0px">
<svg style="left:14px;top:8px" width="26" height="24" viewBox="0 0 24 24"><path d="M18.8 2.5L24 0.5V23.5L18.8 21.5Z" fill="#fafafa"/><path d="M19.5 6L2 17M19.5 18L2 7" stroke="#fafafa" stroke-width="4.2" fill="none"/></svg>
<span class="dim" style="left:45px;top:10px;"><i>高级保存选项</i>(V)...</span>
<span class="mn" style="left:182px;top:10px;"><i>文件</i>(F)</span>
<span class="mn" style="left:255px;top:10px;"><i>编辑</i>(E)</span>
<span class="mn" style="left:328px;top:10px;"><i>视图</i>(V)</span>
<span class="mn" style="left:400px;top:10px;">Git(G)</span>
<span class="mn" style="left:466px;top:10px;"><i>项目</i>(P)</span>
<span class="mn" style="left:540px;top:10px;"><i>生成</i>(B)</span>
<span class="mn" style="left:615px;top:10px;"><i>调试</i>(D)</span>
<span class="mn" style="left:690px;top:10px;"><i>体系结构</i>(C)</span>
<span class="mn" style="left:794px;top:10px;"><i>测试</i>(S)</span>
<span class="mn" style="left:868px;top:10px;"><i>分析</i>(N)</span>
<span class="mn" style="left:944px;top:10px;"><i>工具</i>(T)</span>
<span class="mn" style="left:1019px;top:10px;"><i>扩展</i>(X)</span>
<span class="mn" style="left:1092px;top:10px;"><i>窗口</i>(W)</span>
<span class="mn" style="left:1172px;top:10px;"><i>帮助</i>(H)</span>
<b style="left:1248px;top:5px;width:276px;height:29px;background:#333337;border:1px solid #3f3f46;box-sizing:border-box"></b>
<span style="left:1255px;top:9px;color:#8c8c8c"><i>搜索</i> (Ctrl+Q)</span>
<svg style="left:1497px;top:10px" width="19" height="19" viewBox="0 0 19 19"><circle cx="12" cy="7" r="4.6" fill="none" stroke="#f1f1f1" stroke-width="2.6"/><path d="M8.5 10.5L2.5 16.5" stroke="#f1f1f1" stroke-width="3" stroke-linecap="round"/></svg>
<b style="left:1548px;top:6px;width:43px;height:29px;background:#252526;"></b>
<span class="bd" style="left:1569.5px;top:10px;transform:translateX(-50%);">Fur</span>
<svg style="left:1697px;top:5px" width="28" height="28" viewBox="0 0 28 28"><circle cx="14" cy="14" r="13.5" fill="#f4f4f4"/><path d="M5 22a13.5 13.5 0 0 0 18 0l-2-3h-14z" fill="#e2571e"/><path d="M9 8h10v3h-2v7h-2v-5h-2v5h-2v-7H9z" fill="#3a3a3a"/><circle cx="11" cy="10" r="1.3" fill="#fff"/><circle cx="17" cy="10" r="1.3" fill="#fff"/></svg>
<b style="left:1768px;top:20px;width:14px;height:2px;background:#d8d8d8;"></b>
<svg style="left:1824px;top:14px" width="17" height="16" viewBox="0 0 17 16"><path d="M4 4V1.5H15.5V11H13" fill="none" stroke="#e8e8e8" stroke-width="2"/><rect x="1" y="4.5" width="11.5" height="10.5" fill="none" stroke="#e8e8e8" stroke-width="2.2"/></svg>
<svg style="left:1883px;top:15px" width="16" height="16" viewBox="0 0 16 16"><path d="M1.5 1.5L14.5 14.5M14.5 1.5L1.5 14.5" stroke="#f1f1f1" stroke-width="2.2"/></svg>
<svg style="left:7px;top:45px" width="6" height="24" viewBox="0 0 6 24"><path d="M1 1v22M4 1v22" stroke="#46464a" stroke-width="1.6" stroke-dasharray="2 2"/></svg>
<svg style="left:29px;top:47px" width="18" height="18" viewBox="0 0 18 18"><circle cx="9" cy="9" r="8" fill="#cfe8ff" stroke="#0f3557" stroke-width="1.6"/><path d="M3.5 9l5.5-5v3.2h4.8v3.6H9V14z" fill="#0d3f70"/></svg>
<svg style="left:55.5px;top:55.25px" width="7" height="3.5" viewBox="0 0 7 3.5"><path d="M0 0H7L3.5 3.5Z" fill="#bdbdbd"/></svg>
<svg style="left:70px;top:48px" width="17" height="17" viewBox="0 0 17 17"><circle cx="8.5" cy="8.5" r="6.5" fill="none" stroke="#505053" stroke-width="3"/><path d="M12.5 8.5l-4-3.5v2.5H5v2h3.5V12z" fill="#505053"/></svg>
<svg style="left:105px;top:45px" width="22" height="22" viewBox="0 0 22 22"><rect x="6" y="5" width="13" height="14" fill="#d9d9d9"/><rect x="9" y="8" width="8" height="9" fill="#3a3a3d"/><path d="M5 0l1.6 3.4L10 5 6.6 6.6 5 10 3.4 6.6 0 5l3.4-1.6z" fill="#f3c667"/><circle cx="14" cy="15" r="4.5" fill="#2d2d30" stroke="#e8e8e8" stroke-width="1.6"/></svg>
<svg style="left:133.5px;top:55.25px" width="7" height="3.5" viewBox="0 0 7 3.5"><path d="M0 0H7L3.5 3.5Z" fill="#bdbdbd"/></svg>
<svg style="left:147px;top:44px" width="21" height="24" viewBox="0 0 21 24"><path d="M1 9h7l2 2h10v11H1z" fill="#e7b563"/><path d="M3 14h17l-3 8H1z" fill="#f5d48e"/><path d="M9 8V5H6l5.5-5 5.5 5H14v3z" fill="#6cb5f0"/></svg>
<svg style="left:176px;top:48px" width="16" height="16" viewBox="0 0 16 16"><path fill="#9fd0f7" d="M0 0H13L16 3V16H0Z"/><rect x="4" y="0" width="8" height="5" fill="#1f3347"/><rect x="8.5" y="1" width="2.5" height="3" fill="#9fd0f7"/><rect x="3" y="9" width="10" height="7" fill="#7fbdf0"/></svg>
<svg style="left:200px;top:45px" width="23" height="21" viewBox="0 0 23 21"><g transform="translate(8,0) scale(.9)"><path fill="#9fd0f7" d="M0 0H13L16 3V16H0Z"/><rect x="4" y="0" width="8" height="5" fill="#1f3347"/><rect x="8.5" y="1" width="2.5" height="3" fill="#9fd0f7"/><rect x="3" y="9" width="10" height="7" fill="#7fbdf0"/></g><g transform="translate(0,7) scale(.85)"><path fill="#9fd0f7" d="M0 0H13L16 3V16H0Z"/><rect x="4" y="0" width="8" height="5" fill="#1f3347"/><rect x="8.5" y="1" width="2.5" height="3" fill="#9fd0f7"/><rect x="3" y="9" width="10" height="7" fill="#7fbdf0"/></g></svg>
<b style="left:231px;top:45px;width:1px;height:23px;background:#46464a;"></b>
<svg style="left:240px;top:46px" width="18" height="18" viewBox="0 0 18 18"><path d="M3 3v6h6" fill="none" stroke="#5a5a5e" stroke-width="2.4"/><path d="M3.5 8.5C6 3.5 14 3.5 14.5 10c0 3-2 5-5 6" fill="none" stroke="#5a5a5e" stroke-width="2.4"/></svg>
<svg style="left:267.5px;top:55.25px" width="7" height="3.5" viewBox="0 0 7 3.5"><path d="M0 0H7L3.5 3.5Z" fill="#5a5a5e"/></svg>
<svg style="left:284px;top:46px" width="18" height="18" viewBox="0 0 18 18"><path d="M15 3v6H9" fill="none" stroke="#5a5a5e" stroke-width="2.4"/><path d="M14.5 8.5C12 3.5 4 3.5 3.5 10c0 3 2 5 5 6" fill="none" stroke="#5a5a5e" stroke-width="2.4"/></svg>
<svg style="left:311.5px;top:55.25px" width="7" height="3.5" viewBox="0 0 7 3.5"><path d="M0 0H7L3.5 3.5Z" fill="#5a5a5e"/></svg>
<b style="left:326px;top:45px;width:1px;height:23px;background:#3a3a3e;"></b>
<b style="left:336px;top:43px;width:82px;height:28px;background:#333337;border:1px solid #434346;box-sizing:border-box"></b>
<span style="left:342px;top:45.5px;">Release</span>
<svg style="left:405.5px;top:55.25px" width="7" height="3.5" viewBox="0 0 7 3.5"><path d="M0 0H7L3.5 3.5Z" fill="#bdbdbd"/></svg>
<b style="left:426px;top:43px;width:140px;height:28px;background:#333337;border:1px solid #434346;box-sizing:border-box"></b>
<span style="left:432px;top:45.5px;">Any CPU</span>
<svg style="left:551.5px;top:55.25px" width="7" height="3.5" viewBox="0 0 7 3.5"><path d="M0 0H7L3.5 3.5Z" fill="#bdbdbd"/></svg>
<svg style="left:576px;top:46px" width="14" height="20" viewBox="0 0 14 20"><path d="M1 1l12 9-12 9z" fill="#7ad67a"/></svg>
<span style="left:599px;top:45.5px;letter-spacing:-.2px">IIS Express</span>
<svg style="left:679.5px;top:55.25px" width="7" height="3.5" viewBox="0 0 7 3.5"><path d="M0 0H7L3.5 3.5Z" fill="#bdbdbd"/></svg>
<svg style="left:695px;top:45px" width="21" height="22" viewBox="0 0 21 22"><path d="M16.5 6.5A7.2 7.2 0 1 0 17.8 12" fill="none" stroke="#6cb5f0" stroke-width="3"/><path d="M11 0l7 4.5-7 4.5z" fill="#6cb5f0" transform="rotate(25 14 4)"/></svg>
<svg style="left:721.5px;top:55.25px" width="7" height="3.5" viewBox="0 0 7 3.5"><path d="M0 0H7L3.5 3.5Z" fill="#bdbdbd"/></svg>
<svg style="left:745px;top:44px" width="24" height="24" viewBox="0 0 24 24"><path d="M8 1h14v14H8z" fill="#e7b563"/><path d="M12 1v5h4V1" fill="#2d2d30"/><circle cx="8" cy="14" r="4.5" fill="#2d2d30" stroke="#6cb5f0" stroke-width="2.4"/><path d="M5 17.5L1 22" stroke="#6cb5f0" stroke-width="3"/></svg>
<b style="left:776px;top:45px;width:1px;height:23px;background:#46464a;"></b>
<svg style="left:782px;top:46px" width="22" height="20" viewBox="0 0 22 20"><rect x="1" y="1" width="20" height="18" fill="#3d4f66" stroke="#c8d6e8" stroke-width="2"/><circle cx="11" cy="11" r="4.5" fill="none" stroke="#7fbcf5" stroke-width="2.4"/><rect x="4" y="3" width="5" height="3" fill="#c8d6e8"/></svg>
<b style="left:811px;top:58px;width:9px;height:1.5px;background:#8a8a8a;"></b>
<svg style="left:812px;top:63.25px" width="7" height="3.5" viewBox="0 0 7 3.5"><path d="M0 0H7L3.5 3.5Z" fill="#8a8a8a"/></svg>
<svg style="left:1630px;top:48px" width="20" height="20" viewBox="0 0 20 20"><path d="M8 5H2v13h14v-5" fill="none" stroke="#e4e4e4" stroke-width="2"/><path d="M6 14c0-5 3-8 8-8V2.5l5.5 5.5-5.5 5.5V10c-4 0-6 1-8 4z" fill="none" stroke="#e4e4e4" stroke-width="1.8"/></svg>
<span style="left:1658px;top:47px;letter-spacing:-0.35px;">Live Share</span>
<svg style="left:1760px;top:46px" width="20" height="22" viewBox="0 0 20 22"><path d="M7 2h12v9h-5l-3 3v-3" fill="none" stroke="#d8d8d8" stroke-width="1.8"/><circle cx="7" cy="10" r="3" fill="none" stroke="#d8d8d8" stroke-width="1.8"/><path d="M1 20c0-4 3-6 6-6s6 2 6 6" fill="none" stroke="#d8d8d8" stroke-width="1.8"/></svg>
<b style="left:1808px;top:42px;width:94px;height:33px;background:#3f3f46;"></b>
<span style="left:1855px;top:47.5px;transform:translateX(-50%);color:#9b9b9b;font-weight:bold;font-size:14px;letter-spacing:0">PREVIEW</span>
<b style="left:9px;top:89px;width:302px;height:26px;background:#007acc;"></b>
<span style="left:14px;top:91px;"><i>报告</i>20200921-1553.diagsession*</span>
<svg style="left:270px;top:97px" width="10" height="10" viewBox="0 0 11 11"><path d="M3 1h5v5H3zM1 6h9M5.5 6v4" fill="none" stroke="#e6f2fb" stroke-width="1.5"/></svg>
<svg style="left:290px;top:96px" width="12" height="12" viewBox="0 0 12 12"><path d="M1 1l10 10M11 1L1 11" stroke="#fff" stroke-width="1.8"/></svg>
<b style="left:9px;top:114px;width:1879px;height:3px;background:#007acc;"></b>
<svg style="left:1844.5px;top:100.75px" width="9" height="4.5" viewBox="0 0 9 4.5"><path d="M0 0H9L4.5 4.5Z" fill="#f1f1f1"/></svg>
<svg style="left:1865px;top:95px" width="14" height="14" viewBox="0 0 14 14"><circle cx="7" cy="7" r="4.3" fill="none" stroke="#f1f1f1" stroke-width="3.2"/><path d="M7 0v14M0 7h14M2 2l10 10M12 2L2 12" stroke="#f1f1f1" stroke-width="1.6" stroke-dasharray="2.2 9.6"/></svg>
<b style="left:1888px;top:80px;width:32px;height:968px;background:#2d2d30;"></b>
<b style="left:1909px;top:86px;width:11px;height:36px;background:#3f3f46;"></b>
<span class="vt" style="left:1907px;top:88px"><i>属性</i></span>
<b style="left:1909px;top:131px;width:11px;height:63px;background:#3f3f46;"></b>
<span class="vt" style="left:1907px;top:133px">Git <i>更改</i></span>
<b style="left:1909px;top:201px;width:11px;height:143px;background:#3f3f46;"></b>
<span class="vt" style="left:1907px;top:203px"><i>解决方案资源管理器</i></span>
<b style="left:1909px;top:352px;width:11px;height:112px;background:#3f3f46;"></b>
<span class="vt" style="left:1907px;top:354px"><i>团队资源管理器</i></span>
<b style="left:1909px;top:471px;width:11px;height:38px;background:#3f3f46;"></b>
<span class="vt" style="left:1907px;top:473px"><i>通知</i></span>
<span class="tt" style="left:7.5px;top:1016.5px;letter-spacing:-0.32px;"><i>错误列表</i> ...</span>
<b style="left:0.5px;top:1042px;width:90.5px;height:5px;background:#3b3f46;"></b>
<span class="tt" style="left:99px;top:1016.5px;letter-spacing:-0.45px;"><i>输出</i></span>
<b style="left:92px;top:1042px;width:43px;height:5px;background:#3b3f46;"></b>
<span class="tt" style="left:144px;top:1016.5px;"><i>异常设置</i></span>
<b style="left:137px;top:1042px;width:74px;height:5px;background:#3b3f46;"></b>
<span class="tt" style="left:218px;top:1016.5px;"><i>代码度量值结果</i></span>
<b style="left:211px;top:1042px;width:120px;height:5px;background:#3b3f46;"></b>
<span class="tt" style="left:339px;top:1016.5px;"><i>程序包管理器控制台</i></span>
<b style="left:332px;top:1042px;width:149px;height:5px;background:#3b3f46;"></b>
<span class="tt" style="left:489px;top:1016.5px;letter-spacing:-0.03px;">C# Interactive (.NET Framework 64 <i>位</i>)</span>
<b style="left:482px;top:1042px;width:289px;height:5px;background:#3b3f46;"></b>
<span class="tt" style="left:778px;top:1016.5px;">Web <i>发布活动</i></span>
<b style="left:771px;top:1042px;width:112px;height:5px;background:#3b3f46;"></b>
<span class="tt" style="left:891px;top:1016.5px;letter-spacing:-0.45px;"><i>代码克隆分析结果</i></span>
<b style="left:884px;top:1042px;width:133px;height:5px;background:#3b3f46;"></b>
<b style="left:0px;top:1048px;width:1920px;height:29px;background:#007acc;"></b>
<b style="left:0px;top:1077px;width:1920px;height:3px;background:#b9def7;"></b>
<b style="left:9px;top:117px;width:1879px;height:893px;background:#252526;"></b>
<b style="left:9px;top:117px;width:1851px;height:31px;background:#2d2d30;"></b>
<svg style="left:18px;top:121px" width="22" height="22" viewBox="0 0 22 22"><path d="M1 1h13v6M14 15v6H1V1" fill="none" stroke="#e4e4e4" stroke-width="2.2"/><path d="M6 8h8V4l7 7-7 7v-4H6z" fill="#3b83c4" stroke="#d5e6f5" stroke-width="1.4"/></svg>
<span style="left:43px;top:120.5px;"><i>输出</i></span>
<svg style="left:91px;top:120px" width="22" height="22" viewBox="0 0 22 22"><circle cx="8" cy="8" r="6" fill="#e8e8e8" stroke="#bdbdbd" stroke-width="2.5"/><path d="M6 8h4" stroke="#8a8a8a" stroke-width="1.6"/><path d="M12.5 12.5l7 7" stroke="#e0e0e0" stroke-width="4.5" stroke-linecap="round"/></svg>
<span style="left:115px;top:120.5px;"><i>放大</i></span>
<svg style="left:153px;top:122px" width="22" height="22" viewBox="0 0 22 22"><circle cx="8" cy="8" r="6" fill="#e8e8e8" stroke="#bdbdbd" stroke-width="2.5"/><path d="M6 8h4" stroke="#8a8a8a" stroke-width="1.6"/><path d="M12.5 12.5l7 7" stroke="#e0e0e0" stroke-width="4.5" stroke-linecap="round"/></svg>
<span style="left:176px;top:120.5px;color:#5f5f62"><i>重置缩放</i></span>
<svg style="left:243px;top:120px" width="21" height="22" viewBox="0 0 21 22"><path d="M3 1l6 5M9 1L3 6" stroke="#e0e0e0" stroke-width="2"/><path d="M2 10h7l2 3h9v9H2z" fill="#d9d9d9"/><path d="M5 14h12M5 18h12" stroke="#252526" stroke-width="1.5"/></svg>
<span style="left:268px;top:120.5px;"><i>清除选定内容</i></span>
<span class="bd" style="left:22px;top:151px;"><i>诊断会话</i>: 1:04 <i>分钟</i> (<i>选择了</i> 3.026 <i>秒</i>)</span>
<b style="left:9px;top:175px;width:1851px;height:29px;background:#2a2a2c;"></b>
<b style="left:55px;top:176px;width:328px;height:27px;background:#7c7c7c;"></b>
<b style="left:474px;top:176px;width:1340px;height:27px;background:#7c7c7c;"></b>
<svg style="left:9px;top:175px" width="1851" height="29" viewBox="0 0 1851 29"><path d="M48 17v12" stroke="#9a9a9a" stroke-width="1.6"/><path d="M75.4 22v7" stroke="#949494" stroke-width="1.6"/><path d="M102.8 22v7" stroke="#949494" stroke-width="1.6"/><path d="M130.3 22v7" stroke="#949494" stroke-width="1.6"/><path d="M157.7 22v7" stroke="#949494" stroke-width="1.6"/><path d="M185.1 17v12" stroke="#9a9a9a" stroke-width="1.6"/><path d="M212.5 22v7" stroke="#949494" stroke-width="1.6"/><path d="M239.9 22v7" stroke="#949494" stroke-width="1.6"/><path d="M267.4 22v7" stroke="#949494" stroke-width="1.6"/><path d="M294.8 22v7" stroke="#949494" stroke-width="1.6"/><path d="M322.2 0v29" stroke="#8e8e8e" stroke-width="1.6"/><path d="M349.6 22v7" stroke="#949494" stroke-width="1.6"/><path d="M377 22v7" stroke="#949494" stroke-width="1.6"/><path d="M404.5 22v7" stroke="#949494" stroke-width="1.6"/><path d="M431.9 22v7" stroke="#949494" stroke-width="1.6"/><path d="M459.3 17v12" stroke="#9a9a9a" stroke-width="1.6"/><path d="M486.7 22v7" stroke="#949494" stroke-width="1.6"/><path d="M514.1 22v7" stroke="#949494" stroke-width="1.6"/><path d="M541.6 22v7" stroke="#949494" stroke-width="1.6"/><path d="M569 22v7" stroke="#949494" stroke-width="1.6"/><path d="M596.4 0v29" stroke="#8e8e8e" stroke-width="1.6"/><path d="M623.8 22v7" stroke="#949494" stroke-width="1.6"/><path d="M651.2 22v7" stroke="#949494" stroke-width="1.6"/><path d="M678.7 22v7" stroke="#949494" stroke-width="1.6"/><path d="M706.1 22v7" stroke="#949494" stroke-width="1.6"/><path d="M733.5 17v12" stroke="#9a9a9a" stroke-width="1.6"/><path d="M760.9 22v7" stroke="#949494" stroke-width="1.6"/><path d="M788.3 22v7" stroke="#949494" stroke-width="1.6"/><path d="M815.8 22v7" stroke="#949494" stroke-width="1.6"/><path d="M843.2 22v7" stroke="#949494" stroke-width="1.6"/><path d="M870.6 0v29" stroke="#8e8e8e" stroke-width="1.6"/><path d="M898 22v7" stroke="#949494" stroke-width="1.6"/><path d="M925.4 22v7" stroke="#949494" stroke-width="1.6"/><path d="M952.9 22v7" stroke="#949494" stroke-width="1.6"/><path d="M980.3 22v7" stroke="#949494" stroke-width="1.6"/><path d="M1007.7 17v12" stroke="#9a9a9a" stroke-width="1.6"/><path d="M1035.1 22v7" stroke="#949494" stroke-width="1.6"/><path d="M1062.5 22v7" stroke="#949494" stroke-width="1.6"/><path d="M1090 22v7" stroke="#949494" stroke-width="1.6"/><path d="M1117.4 22v7" stroke="#949494" stroke-width="1.6"/><path d="M1144.8 0v29" stroke="#8e8e8e" stroke-width="1.6"/><path d="M1172.2 22v7" stroke="#949494" stroke-width="1.6"/><path d="M1199.6 22v7" stroke="#949494" stroke-width="1.6"/><path d="M1227.1 22v7" stroke="#949494" stroke-width="1.6"/><path d="M1254.5 22v7" stroke="#949494" stroke-width="1.6"/><path d="M1281.9 17v12" stroke="#9a9a9a" stroke-width="1.6"/><path d="M1309.3 22v7" stroke="#949494" stroke-width="1.6"/><path d="M1336.7 22v7" stroke="#949494" stroke-width="1.6"/><path d="M1364.2 22v7" stroke="#949494" stroke-width="1.6"/><path d="M1391.6 22v7" stroke="#949494" stroke-width="1.6"/><path d="M1419 0v29" stroke="#8e8e8e" stroke-width="1.6"/><path d="M1446.4 22v7" stroke="#949494" stroke-width="1.6"/><path d="M1473.8 22v7" stroke="#949494" stroke-width="1.6"/><path d="M1501.3 22v7" stroke="#949494" stroke-width="1.6"/><path d="M1528.7 22v7" stroke="#949494" stroke-width="1.6"/><path d="M1556.1 17v12" stroke="#9a9a9a" stroke-width="1.6"/><path d="M1583.5 22v7" stroke="#949494" stroke-width="1.6"/><path d="M1610.9 22v7" stroke="#949494" stroke-width="1.6"/><path d="M1638.4 22v7" stroke="#949494" stroke-width="1.6"/><path d="M1665.8 22v7" stroke="#949494" stroke-width="1.6"/><path d="M1693.2 0v29" stroke="#8e8e8e" stroke-width="1.6"/><path d="M1720.6 22v7" stroke="#949494" stroke-width="1.6"/><path d="M1748 22v7" stroke="#949494" stroke-width="1.6"/><path d="M1775.5 22v7" stroke="#949494" stroke-width="1.6"/><path d="M1802.9 22v7" stroke="#949494" stroke-width="1.6"/></svg>
<b style="left:9px;top:203px;width:1851px;height:2px;background:#4a4a4d;"></b>
<b style="left:9px;top:175px;width:1851px;height:1px;background:#38383a;"></b>
<span style="left:335.2px;top:174.5px;color:#d6d6d6">10<i>秒</i></span>
<span style="left:609.4px;top:174.5px;color:#d6d6d6">20<i>秒</i></span>
<span style="left:883.6px;top:174.5px;color:#d6d6d6">30<i>秒</i></span>
<span style="left:1157.8px;top:174.5px;color:#d6d6d6">40<i>秒</i></span>
<span style="left:1432px;top:174.5px;color:#d6d6d6">50<i>秒</i></span>
<span style="left:1706.2px;top:174.5px;color:#d6d6d6">1:00<i>分钟</i></span>
<b style="left:380px;top:176px;width:7px;height:27px;background:#fff;"></b>
<b style="left:468px;top:176px;width:7px;height:27px;background:#fff;"></b>
<b style="left:387px;top:176px;width:81px;height:27px;background:#2a2a2c;"></b>
<span style="left:9px;top:204px;"><i>从下面的计数器选项面板中添加计数器图形</i></span>
<svg style="left:18px;top:232px" width="9" height="9" viewBox="0 0 9 9"><path d="M9 0v9H0z" fill="#e0e0e0"/></svg>
<span class="bd" style="left:30px;top:225px;">CPU (<i>所有处理器的百分比</i>)</span>
<svg style="left:55px;top:249px" width="1759" height="86" viewBox="0 0 1759 86"><rect x="0" y="0" width="1759" height="86" fill="#7f7f7f"/><rect x="329" y="0" width="84" height="86" fill="#252526"/><path d="M276.2 0v86" stroke="#8a8a8a" stroke-width="1.5"/><path d="M550.4 0v86" stroke="#8a8a8a" stroke-width="1.5"/><path d="M824.6 0v86" stroke="#8a8a8a" stroke-width="1.5"/><path d="M1098.8 0v86" stroke="#8a8a8a" stroke-width="1.5"/><path d="M1373 0v86" stroke="#8a8a8a" stroke-width="1.5"/><path d="M1647.2 0v86" stroke="#8a8a8a" stroke-width="1.5"/><path d="M0 85.5L46.2 85.5L54.8 71.5L57.6 71.5L66.2 85.5L96.2 85.5L100.6 76.5L103.4 76.5L104.5 80.7L105.6 79.5L108.4 79.5L109.5 80.7L110.6 75.5L113.4 75.5L113.5 79.9L113.6 78.5L116.4 78.5L119 85.5L121 85.5L124.6 75.5L127.4 75.5L131 85.5L137 85.5L141.6 75.5L144.4 75.5L145 81.5L145.6 80.5L148.4 80.5L149 81.5L149.6 71.5L152.4 71.5L157 85.5L159 85.5L164.6 72.5L167.4 72.5L169 78.3L170.6 76.5L173.4 76.5L179 85.5L181 85.5L193.2 70.5L196 70.5L197.8 78.3L199.6 76.5L202.4 76.5L203.5 78.3L204.6 75.5L207.4 75.5L215 85.5L329 85.5L335.6 75.5L338.4 75.5L339.5 79.1L340.6 77.5L343.4 77.5L344.5 79.1L345.6 73.5L348.4 73.5L350 77.5L351.6 75.5L354.4 75.5L355.5 77.5L356.6 73.5L359.4 73.5L360.5 79.1L361.6 77.5L364.4 77.5L367 85.5L369 85.5L374.6 72.5L377.4 72.5L379.5 79.1L381.6 77.5L384.4 77.5L386 79.1L387.6 75.5L390.4 75.5L392 77.5L393.6 73.5L396.4 73.5L398 78.3L399.6 76.5L402.4 76.5L407 85.5L482.5 85.5L485.6 75.5L488.4 75.5L492 85.5L492 85.5L495.6 71.5L498.4 71.5L502.5 85.5L557 85.5L562.6 80.5L565.4 80.5L566.5 82.6L567.6 81.9L570.4 81.9L575 85.5L657 85.5L663.6 80.5L666.4 80.5L670 85.5L745 85.5L752.6 81.9L755.4 81.9L760 85.5L815 85.5L819.6 78.5L822.4 78.5L823 79.9L823.6 77.5L826.4 77.5L830 85.5L892.5 85.5L897.6 82.5L900.4 82.5L905 85.5L1002.5 85.5L1009.6 77.5L1012.4 77.5L1014 79.9L1015.6 78.5L1018.4 78.5L1025 85.5L1097 85.5L1105.6 70.5L1108.4 70.5L1108.5 77.5L1108.6 75.5L1111.4 75.5L1117 85.5L1212.5 85.5L1216.6 81.9L1219.4 81.9L1222.5 85.5L1297 85.5L1301.6 76.5L1304.4 76.5L1305 80.7L1305.6 79.5L1308.4 79.5L1312.5 85.5L1759 85.5Z" fill="#bfcb78"/><clipPath id="selc"><rect x="329" y="0" width="84" height="86"/></clipPath><path d="M0 85.5L46.2 85.5L54.8 71.5L57.6 71.5L66.2 85.5L96.2 85.5L100.6 76.5L103.4 76.5L104.5 80.7L105.6 79.5L108.4 79.5L109.5 80.7L110.6 75.5L113.4 75.5L113.5 79.9L113.6 78.5L116.4 78.5L119 85.5L121 85.5L124.6 75.5L127.4 75.5L131 85.5L137 85.5L141.6 75.5L144.4 75.5L145 81.5L145.6 80.5L148.4 80.5L149 81.5L149.6 71.5L152.4 71.5L157 85.5L159 85.5L164.6 72.5L167.4 72.5L169 78.3L170.6 76.5L173.4 76.5L179 85.5L181 85.5L193.2 70.5L196 70.5L197.8 78.3L199.6 76.5L202.4 76.5L203.5 78.3L204.6 75.5L207.4 75.5L215 85.5L329 85.5L335.6 75.5L338.4 75.5L339.5 79.1L340.6 77.5L343.4 77.5L344.5 79.1L345.6 73.5L348.4 73.5L350 77.5L351.6 75.5L354.4 75.5L355.5 77.5L356.6 73.5L359.4 73.5L360.5 79.1L361.6 77.5L364.4 77.5L367 85.5L369 85.5L374.6 72.5L377.4 72.5L379.5 79.1L381.6 77.5L384.4 77.5L386 79.1L387.6 75.5L390.4 75.5L392 77.5L393.6 73.5L396.4 73.5L398 78.3L399.6 76.5L402.4 76.5L407 85.5L482.5 85.5L485.6 75.5L488.4 75.5L492 85.5L492 85.5L495.6 71.5L498.4 71.5L502.5 85.5L557 85.5L562.6 80.5L565.4 80.5L566.5 82.6L567.6 81.9L570.4 81.9L575 85.5L657 85.5L663.6 80.5L666.4 80.5L670 85.5L745 85.5L752.6 81.9L755.4 81.9L760 85.5L815 85.5L819.6 78.5L822.4 78.5L823 79.9L823.6 77.5L826.4 77.5L830 85.5L892.5 85.5L897.6 82.5L900.4 82.5L905 85.5L1002.5 85.5L1009.6 77.5L1012.4 77.5L1014 79.9L1015.6 78.5L1018.4 78.5L1025 85.5L1097 85.5L1105.6 70.5L1108.4 70.5L1108.5 77.5L1108.6 75.5L1111.4 75.5L1117 85.5L1212.5 85.5L1216.6 81.9L1219.4 81.9L1222.5 85.5L1297 85.5L1301.6 76.5L1304.4 76.5L1305 80.7L1305.6 79.5L1308.4 79.5L1312.5 85.5L1759 85.5Z" fill="#c3d91a" clip-path="url(#selc)"/><path d="M329 0v86" stroke="#9fb6cf" stroke-width="2"/><rect x=".75" y=".75" width="1757.5" height="84.5" fill="none" stroke="#8a8a8a" stroke-width="1.5"/><path d="M0 85.5h1759" stroke="#a9ad86" stroke-width="2"/></svg>
<span style="left:22px;top:247px;">100</span>
<span style="left:39px;top:315px;">0</span>
<span style="left:1822px;top:247px;">100</span>
<span style="left:1820px;top:315px;">0</span>
<b style="left:1860px;top:117px;width:19px;height:241px;background:#3e3e42;"></b>
<b style="left:1861px;top:150px;width:17px;height:172px;background:#686868;"></b>
<svg style="left:1861px;top:132px" width="17" height="12" viewBox="0 0 17 12"><path d="M1.5 10.5l7-8 7 8" fill="none" stroke="#d6d6d6" stroke-width="3"/></svg>
<svg style="left:1861px;top:329px" width="17" height="12" viewBox="0 0 17 12"><path d="M1.5 1.5l7 8 7-8" fill="none" stroke="#d6d6d6" stroke-width="3"/></svg>
<b style="left:9px;top:358px;width:1879px;height:3px;background:#3f3f46;"></b>
<span style="left:21px;top:369px;color:#cdcdcd;"><i>异步活动</i></span>
<b style="left:89px;top:367px;width:58.5px;height:24.5px;background:#37373a;"></b>
<span style="left:95px;top:369px;color:#cdcdcd;"><i>计数器</i></span>
<span style="left:155px;top:369px;color:#cdcdcd;letter-spacing:-0.45px;">CPU <i>使用率</i></span>
<span style="left:249px;top:369px;color:#cdcdcd;"><i>查询</i></span>
<span style="left:293.5px;top:369px;color:#cdcdcd;"><i>事件</i></span>
<b style="left:9px;top:391px;width:1851px;height:2px;background:#3f3f46;"></b>
<b style="left:9px;top:422.5px;width:1851px;height:2px;background:#3f3f46;"></b>
<b style="left:280.5px;top:393px;width:2px;height:29.5px;background:#3f3f46;"></b>
<b style="left:416.5px;top:393px;width:2px;height:29.5px;background:#3f3f46;"></b>
<b style="left:552.5px;top:393px;width:2px;height:29.5px;background:#3f3f46;"></b>
<b style="left:689px;top:393px;width:2px;height:29.5px;background:#3f3f46;"></b>
<span style="left:16px;top:397px;"><i>名称</i></span>
<svg style="left:268px;top:405px" width="9" height="6" viewBox="0 0 9 6"><path d="M0 6h9L4.5 0z" fill="#e0e0e0"/></svg>
<span style="right:1508.5px;top:397px;"><i>最小值</i></span>
<span style="right:1371.5px;top:397px;"><i>最大值</i></span>
<span style="right:1236px;top:397px;"><i>平均</i></span>
<div style="left:9px;top:424.5px;width:1851px;height:580.5px;overflow:hidden">
<b style="left:0px;top:24.225px;width:681px;height:2px;background:#1c1c1d;"></b>
<svg style="left:12px;top:9px" width="9" height="9" viewBox="0 0 9 9"><path d="M9 0v9H0z" fill="#e0e0e0"/></svg>
<span style="left:31px;top:1px;">Microsoft.AspNetCore.Hosting</span>
<b style="left:0px;top:51.675px;width:681px;height:2px;background:#1c1c1d;"></b>
<b style="left:32.5px;top:31.95px;width:14px;height:14px;background:#f4f4f4;"></b>
<span style="left:56px;top:28.45px;">Current Requests</span>
<span style="right:1508.5px;top:28.45px;right:1448.5px">0</span>
<span style="right:1920px;top:28.45px;right:1311.5px">1</span>
<span style="right:1920px;top:28.45px;right:1176px">0.67</span>
<b style="left:271.5px;top:25.725px;width:2px;height:27.45px;background:#1c1c1d;"></b>
<b style="left:407.5px;top:25.725px;width:2px;height:27.45px;background:#1c1c1d;"></b>
<b style="left:543.5px;top:25.725px;width:2px;height:27.45px;background:#1c1c1d;"></b>
<b style="left:0px;top:79.125px;width:681px;height:2px;background:#1c1c1d;"></b>
<b style="left:32.5px;top:59.4px;width:14px;height:14px;background:#f4f4f4;"></b>
<span style="left:56px;top:55.9px;">Failed Requests</span>
<span style="right:1508.5px;top:55.9px;right:1448.5px">0</span>
<span style="right:1920px;top:55.9px;right:1311.5px">0</span>
<span style="right:1920px;top:55.9px;right:1176px">0</span>
<b style="left:271.5px;top:53.175px;width:2px;height:27.45px;background:#1c1c1d;"></b>
<b style="left:407.5px;top:53.175px;width:2px;height:27.45px;background:#1c1c1d;"></b>
<b style="left:543.5px;top:53.175px;width:2px;height:27.45px;background:#1c1c1d;"></b>
<b style="left:0px;top:106.575px;width:681px;height:2px;background:#1c1c1d;"></b>
<b style="left:32.5px;top:86.85px;width:14px;height:14px;background:#f4f4f4;"></b>
<span style="left:56px;top:83.35px;">Request Rate</span>
<span style="right:1508.5px;top:83.35px;right:1448.5px">0</span>
<span style="right:1920px;top:83.35px;right:1311.5px">1</span>
<span style="right:1920px;top:83.35px;right:1176px">0.67</span>
<b style="left:271.5px;top:80.625px;width:2px;height:27.45px;background:#1c1c1d;"></b>
<b style="left:407.5px;top:80.625px;width:2px;height:27.45px;background:#1c1c1d;"></b>
<b style="left:543.5px;top:80.625px;width:2px;height:27.45px;background:#1c1c1d;"></b>
<b style="left:0px;top:134.025px;width:681px;height:2px;background:#1c1c1d;"></b>
<b style="left:32.5px;top:114.3px;width:14px;height:14px;background:#f4f4f4;"></b>
<span style="left:56px;top:110.8px;">Total Requests</span>
<span style="right:1508.5px;top:110.8px;right:1448.5px">6</span>
<span style="right:1920px;top:110.8px;right:1311.5px">7</span>
<span style="right:1920px;top:110.8px;right:1176px">6.33</span>
<b style="left:271.5px;top:108.075px;width:2px;height:27.45px;background:#1c1c1d;"></b>
<b style="left:407.5px;top:108.075px;width:2px;height:27.45px;background:#1c1c1d;"></b>
<b style="left:543.5px;top:108.075px;width:2px;height:27.45px;background:#1c1c1d;"></b>
<b style="left:0px;top:161.475px;width:681px;height:2px;background:#1c1c1d;"></b>
<svg style="left:12px;top:146.25px" width="9" height="9" viewBox="0 0 9 9"><path d="M9 0v9H0z" fill="#e0e0e0"/></svg>
<span style="left:31px;top:138.25px;">System.Runtime</span>
<b style="left:0px;top:188.925px;width:681px;height:2px;background:#1c1c1d;"></b>
<b style="left:32.5px;top:169.2px;width:14px;height:14px;background:#f4f4f4;"></b>
<span style="left:56px;top:165.7px;">% Time in GC since last GC</span>
<span style="right:1508.5px;top:165.7px;right:1448.5px">0%</span>
<span style="right:1920px;top:165.7px;right:1311.5px">0%</span>
<span style="right:1920px;top:165.7px;right:1176px">0%</span>
<b style="left:271.5px;top:162.975px;width:2px;height:27.45px;background:#1c1c1d;"></b>
<b style="left:407.5px;top:162.975px;width:2px;height:27.45px;background:#1c1c1d;"></b>
<b style="left:543.5px;top:162.975px;width:2px;height:27.45px;background:#1c1c1d;"></b>
<b style="left:0px;top:216.375px;width:681px;height:2px;background:#1c1c1d;"></b>
<b style="left:32.5px;top:196.65px;width:14px;height:14px;background:#f4f4f4;"></b>
<span style="left:56px;top:193.15px;">Allocation Rate</span>
<span style="right:1508.5px;top:193.15px;right:1448.5px">1.20 MiB</span>
<span style="right:1920px;top:193.15px;right:1311.5px">2.83 MiB</span>
<span style="right:1920px;top:193.15px;right:1176px">2.16 MiB</span>
<b style="left:271.5px;top:190.425px;width:2px;height:27.45px;background:#1c1c1d;"></b>
<b style="left:407.5px;top:190.425px;width:2px;height:27.45px;background:#1c1c1d;"></b>
<b style="left:543.5px;top:190.425px;width:2px;height:27.45px;background:#1c1c1d;"></b>
<b style="left:0px;top:243.825px;width:681px;height:2px;background:#1c1c1d;"></b>
<b style="left:32.5px;top:224.1px;width:14px;height:14px;background:#f4f4f4;"></b>
<span style="left:56px;top:220.6px;">CPU Usage</span>
<span style="right:1508.5px;top:220.6px;right:1448.5px">5%</span>
<span style="right:1920px;top:220.6px;right:1311.5px">9%</span>
<span style="right:1920px;top:220.6px;right:1176px">7.33%</span>
<b style="left:271.5px;top:217.875px;width:2px;height:27.45px;background:#1c1c1d;"></b>
<b style="left:407.5px;top:217.875px;width:2px;height:27.45px;background:#1c1c1d;"></b>
<b style="left:543.5px;top:217.875px;width:2px;height:27.45px;background:#1c1c1d;"></b>
<b style="left:0px;top:271.275px;width:681px;height:2px;background:#1c1c1d;"></b>
<b style="left:32.5px;top:251.55px;width:14px;height:14px;background:#f4f4f4;"></b>
<span style="left:56px;top:248.05px;">Exception Count</span>
<span style="right:1508.5px;top:248.05px;right:1448.5px">0</span>
<span style="right:1920px;top:248.05px;right:1311.5px">0</span>
<span style="right:1920px;top:248.05px;right:1176px">0</span>
<b style="left:271.5px;top:245.325px;width:2px;height:27.45px;background:#1c1c1d;"></b>
<b style="left:407.5px;top:245.325px;width:2px;height:27.45px;background:#1c1c1d;"></b>
<b style="left:543.5px;top:245.325px;width:2px;height:27.45px;background:#1c1c1d;"></b>
<b style="left:0px;top:298.725px;width:681px;height:2px;background:#1c1c1d;"></b>
<b style="left:32.5px;top:279px;width:14px;height:14px;background:#f4f4f4;"></b>
<span style="left:56px;top:275.5px;">GC Heap Size</span>
<span style="right:1508.5px;top:275.5px;right:1448.5px">5 MiB</span>
<span style="right:1920px;top:275.5px;right:1311.5px">12 MiB</span>
<span style="right:1920px;top:275.5px;right:1176px">8.67 MiB</span>
<b style="left:271.5px;top:272.775px;width:2px;height:27.45px;background:#1c1c1d;"></b>
<b style="left:407.5px;top:272.775px;width:2px;height:27.45px;background:#1c1c1d;"></b>
<b style="left:543.5px;top:272.775px;width:2px;height:27.45px;background:#1c1c1d;"></b>
<b style="left:0px;top:326.175px;width:681px;height:2px;background:#1c1c1d;"></b>
<b style="left:32.5px;top:306.45px;width:14px;height:14px;background:#f4f4f4;"></b>
<span style="left:56px;top:302.95px;">Gen 0 GC Count</span>
<span style="right:1508.5px;top:302.95px;right:1448.5px">0</span>
<span style="right:1920px;top:302.95px;right:1311.5px">1</span>
<span style="right:1920px;top:302.95px;right:1176px">0.33</span>
<b style="left:271.5px;top:300.225px;width:2px;height:27.45px;background:#1c1c1d;"></b>
<b style="left:407.5px;top:300.225px;width:2px;height:27.45px;background:#1c1c1d;"></b>
<b style="left:543.5px;top:300.225px;width:2px;height:27.45px;background:#1c1c1d;"></b>
<b style="left:0px;top:353.625px;width:681px;height:2px;background:#1c1c1d;"></b>
<b style="left:32.5px;top:333.9px;width:14px;height:14px;background:#f4f4f4;"></b>
<span style="left:56px;top:330.4px;">Gen 0 Size</span>
<span style="right:1508.5px;top:330.4px;right:1448.5px">192 B</span>
<span style="right:1920px;top:330.4px;right:1311.5px">192 B</span>
<span style="right:1920px;top:330.4px;right:1176px">192 B</span>
<b style="left:271.5px;top:327.675px;width:2px;height:27.45px;background:#1c1c1d;"></b>
<b style="left:407.5px;top:327.675px;width:2px;height:27.45px;background:#1c1c1d;"></b>
<b style="left:543.5px;top:327.675px;width:2px;height:27.45px;background:#1c1c1d;"></b>
<b style="left:0px;top:381.075px;width:681px;height:2px;background:#1c1c1d;"></b>
<b style="left:32.5px;top:361.35px;width:14px;height:14px;background:#f4f4f4;"></b>
<span style="left:56px;top:357.85px;">Gen 1 GC Count</span>
<span style="right:1508.5px;top:357.85px;right:1448.5px">0</span>
<span style="right:1920px;top:357.85px;right:1311.5px">1</span>
<span style="right:1920px;top:357.85px;right:1176px">0.33</span>
<b style="left:271.5px;top:355.125px;width:2px;height:27.45px;background:#1c1c1d;"></b>
<b style="left:407.5px;top:355.125px;width:2px;height:27.45px;background:#1c1c1d;"></b>
<b style="left:543.5px;top:355.125px;width:2px;height:27.45px;background:#1c1c1d;"></b>
<b style="left:0px;top:408.525px;width:681px;height:2px;background:#1c1c1d;"></b>
<b style="left:32.5px;top:388.8px;width:14px;height:14px;background:#f4f4f4;"></b>
<span style="left:56px;top:385.3px;">Gen 1 Size</span>
<span style="right:1508.5px;top:385.3px;right:1448.5px">2.02 MiB</span>
<span style="right:1920px;top:385.3px;right:1311.5px">2.50 MiB</span>
<span style="right:1920px;top:385.3px;right:1176px">2.18 MiB</span>
<b style="left:271.5px;top:382.575px;width:2px;height:27.45px;background:#1c1c1d;"></b>
<b style="left:407.5px;top:382.575px;width:2px;height:27.45px;background:#1c1c1d;"></b>
<b style="left:543.5px;top:382.575px;width:2px;height:27.45px;background:#1c1c1d;"></b>
<b style="left:0px;top:435.975px;width:681px;height:2px;background:#1c1c1d;"></b>
<b style="left:32.5px;top:416.25px;width:14px;height:14px;background:#f4f4f4;"></b>
<span style="left:56px;top:412.75px;">Gen 2 GC Count</span>
<span style="right:1508.5px;top:412.75px;right:1448.5px">0</span>
<span style="right:1920px;top:412.75px;right:1311.5px">0</span>
<span style="right:1920px;top:412.75px;right:1176px">0</span>
<b style="left:271.5px;top:410.025px;width:2px;height:27.45px;background:#1c1c1d;"></b>
<b style="left:407.5px;top:410.025px;width:2px;height:27.45px;background:#1c1c1d;"></b>
<b style="left:543.5px;top:410.025px;width:2px;height:27.45px;background:#1c1c1d;"></b>
<b style="left:0px;top:463.425px;width:681px;height:2px;background:#1c1c1d;"></b>
<b style="left:32.5px;top:443.7px;width:14px;height:14px;background:#f4f4f4;"></b>
<span style="left:56px;top:440.2px;">Gen 2 Size</span>
<span style="right:1508.5px;top:440.2px;right:1448.5px">192 B</span>
<span style="right:1920px;top:440.2px;right:1311.5px">1.82 MiB</span>
<span style="right:1920px;top:440.2px;right:1176px">620.47 KiB</span>
<b style="left:271.5px;top:437.475px;width:2px;height:27.45px;background:#1c1c1d;"></b>
<b style="left:407.5px;top:437.475px;width:2px;height:27.45px;background:#1c1c1d;"></b>
<b style="left:543.5px;top:437.475px;width:2px;height:27.45px;background:#1c1c1d;"></b>
<b style="left:0px;top:490.875px;width:681px;height:2px;background:#1c1c1d;"></b>
<b style="left:32.5px;top:471.15px;width:14px;height:14px;background:#f4f4f4;"></b>
<span style="left:56px;top:467.65px;">LOH Size</span>
<span style="right:1508.5px;top:467.65px;right:1448.5px">527.36 KiB</span>
<span style="right:1920px;top:467.65px;right:1311.5px">559.29 KiB</span>
<span style="right:1920px;top:467.65px;right:1176px">538 KiB</span>
<b style="left:271.5px;top:464.925px;width:2px;height:27.45px;background:#1c1c1d;"></b>
<b style="left:407.5px;top:464.925px;width:2px;height:27.45px;background:#1c1c1d;"></b>
<b style="left:543.5px;top:464.925px;width:2px;height:27.45px;background:#1c1c1d;"></b>
<b style="left:0px;top:518.325px;width:681px;height:2px;background:#1c1c1d;"></b>
<b style="left:32.5px;top:498.6px;width:14px;height:14px;background:#f4f4f4;"></b>
<span style="left:56px;top:495.1px;">Monitor Lock Contention C...</span>
<span style="right:1508.5px;top:495.1px;right:1448.5px">0</span>
<span style="right:1920px;top:495.1px;right:1311.5px">2</span>
<span style="right:1920px;top:495.1px;right:1176px">0.67</span>
<b style="left:271.5px;top:492.375px;width:2px;height:27.45px;background:#1c1c1d;"></b>
<b style="left:407.5px;top:492.375px;width:2px;height:27.45px;background:#1c1c1d;"></b>
<b style="left:543.5px;top:492.375px;width:2px;height:27.45px;background:#1c1c1d;"></b>
<b style="left:0px;top:545.775px;width:681px;height:2px;background:#1c1c1d;"></b>
<b style="left:32.5px;top:526.05px;width:14px;height:14px;background:#f4f4f4;"></b>
<span style="left:56px;top:522.55px;">Number of Active Timers</span>
<span style="right:1508.5px;top:522.55px;right:1448.5px">0</span>
<span style="right:1920px;top:522.55px;right:1311.5px">0</span>
<span style="right:1920px;top:522.55px;right:1176px">0</span>
<b style="left:271.5px;top:519.825px;width:2px;height:27.45px;background:#1c1c1d;"></b>
<b style="left:407.5px;top:519.825px;width:2px;height:27.45px;background:#1c1c1d;"></b>
<b style="left:543.5px;top:519.825px;width:2px;height:27.45px;background:#1c1c1d;"></b>
<b style="left:0px;top:573.225px;width:681px;height:2px;background:#1c1c1d;"></b>
<b style="left:32.5px;top:553.5px;width:14px;height:14px;background:#f4f4f4;"></b>
<span style="left:56px;top:550px;">Number of Assemblies Loa...</span>
<span style="right:1508.5px;top:550px;right:1448.5px">158</span>
<span style="right:1920px;top:550px;right:1311.5px">165</span>
<span style="right:1920px;top:550px;right:1176px">162.67</span>
<b style="left:271.5px;top:547.275px;width:2px;height:27.45px;background:#1c1c1d;"></b>
<b style="left:407.5px;top:547.275px;width:2px;height:27.45px;background:#1c1c1d;"></b>
<b style="left:543.5px;top:547.275px;width:2px;height:27.45px;background:#1c1c1d;"></b>
<b style="left:271.5px;top:574.725px;width:2px;height:27.45px;background:#1c1c1d;"></b>
<b style="left:407.5px;top:574.725px;width:2px;height:27.45px;background:#1c1c1d;"></b>
<b style="left:543.5px;top:574.725px;width:2px;height:27.45px;background:#1c1c1d;"></b>
<b style="left:680px;top:0px;width:2px;height:600px;background:#1c1c1d;"></b>
</div>
<b style="left:1860px;top:391px;width:19px;height:618px;background:#3e3e42;"></b>
<b style="left:1861px;top:436px;width:17px;height:441px;background:#686868;"></b>
<svg style="left:1861px;top:415px" width="17" height="12" viewBox="0 0 17 12"><path d="M1.5 10.5l7-8 7 8" fill="none" stroke="#d6d6d6" stroke-width="3"/></svg>
<svg style="left:1861px;top:975px" width="17" height="12" viewBox="0 0 17 12"><path d="M1.5 1.5l7 8 7-8" fill="none" stroke="#d6d6d6" stroke-width="3"/></svg>
<svg style="left:5px;top:1054px" width="20" height="16" viewBox="0 0 20 16"><path d="M5 2h14l-3.5 12H1.5z" fill="none" stroke="#dff0fc" stroke-width="2"/></svg>
<span style="left:35px;top:1052.5px;"></span>
<svg style="left:1576px;top:1055px" width="13" height="16" viewBox="0 0 13 16"><path d="M6.5 1.5v14M1 7l5.5-5.5L12 7" fill="none" stroke="#fff" stroke-width="2.4"/></svg>
<span style="left:1599px;top:1052.5px;">0</span>
<svg style="left:1637px;top:1055px" width="16" height="16" viewBox="0 0 16 16"><path d="M2 14l1-4 8-8 3 3-8 8z" fill="#fff"/></svg>
<span style="left:1664px;top:1052.5px;">1</span>
<svg style="left:1701px;top:1054px" width="18" height="18" viewBox="0 0 18 18"><path d="M9 0l9 9-9 9-9-9z" fill="#fff"/><path d="M6 5l6 6M9 8v5" stroke="#007acc" stroke-width="1.6"/><circle cx="6.5" cy="5.5" r="1.5" fill="#007acc"/><circle cx="9" cy="13" r="1.5" fill="#007acc"/><circle cx="12" cy="10.5" r="1.5" fill="#007acc"/></svg>
<span style="left:1727.5px;top:1052.5px;">Fur</span>
<svg style="left:1778px;top:1053px" width="18" height="20" viewBox="0 0 18 20"><path d="M4 3c0 6 5 5 5 10v6M14 3c0 6-5 5-5 10" fill="none" stroke="#e6f2fb" stroke-width="1.8"/><circle cx="4" cy="3" r="2.2" fill="#e6f2fb"/><circle cx="14" cy="3" r="2.2" fill="#e6f2fb"/></svg>
<span style="left:1805px;top:1052.5px;">rc1</span>
<svg style="left:1836px;top:1061px" width="9" height="5" viewBox="0 0 9 5"><path d="M0 5h9L4.5 0z" fill="#fff"/></svg>
<svg style="left:1880px;top:1053px" width="18" height="20" viewBox="0 0 18 20"><path d="M9 1c4 0 5.5 3 5.5 7 0 3 1.5 5 2.5 6H1c1-1 2.5-3 2.5-6C3.5 4 5 1 9 1z" fill="#fff"/><path d="M6.5 16.5a2.5 2.5 0 0 0 5 0" fill="#fff"/></svg>
</div>
<div class="win" style="left:0px;top:540px">
<svg style="left:14px;top:8px" width="26" height="24" viewBox="0 0 24 24"><path d="M18.8 2.5L24 0.5V23.5L18.8 21.5Z" fill="#fafafa"/><path d="M19.5 6L2 17M19.5 18L2 7" stroke="#fafafa" stroke-width="4.2" fill="none"/></svg>
<span class="dim" style="left:45px;top:10px;"><i>高级保存选项</i>(V)...</span>
<span class="mn" style="left:182px;top:10px;"><i>文件</i>(F)</span>
<span class="mn" style="left:255px;top:10px;"><i>编辑</i>(E)</span>
<span class="mn" style="left:328px;top:10px;"><i>视图</i>(V)</span>
<span class="mn" style="left:400px;top:10px;">Git(G)</span>
<span class="mn" style="left:466px;top:10px;"><i>项目</i>(P)</span>
<span class="mn" style="left:540px;top:10px;"><i>生成</i>(B)</span>
<span class="mn" style="left:615px;top:10px;"><i>调试</i>(D)</span>
<span class="mn" style="left:690px;top:10px;"><i>体系结构</i>(C)</span>
<span class="mn" style="left:794px;top:10px;"><i>测试</i>(S)</span>
<span class="mn" style="left:868px;top:10px;"><i>分析</i>(N)</span>
<span class="mn" style="left:944px;top:10px;"><i>工具</i>(T)</span>
<span class="mn" style="left:1019px;top:10px;"><i>扩展</i>(X)</span>
<span class="mn" style="left:1092px;top:10px;"><i>窗口</i>(W)</span>
<span class="mn" style="left:1172px;top:10px;"><i>帮助</i>(H)</span>
<b style="left:1248px;top:5px;width:276px;height:29px;background:#333337;border:1px solid #3f3f46;box-sizing:border-box"></b>
<span style="left:1255px;top:9px;color:#8c8c8c"><i>搜索</i> (Ctrl+Q)</span>
<svg style="left:1497px;top:10px" width="19" height="19" viewBox="0 0 19 19"><circle cx="12" cy="7" r="4.6" fill="none" stroke="#f1f1f1" stroke-width="2.6"/><path d="M8.5 10.5L2.5 16.5" stroke="#f1f1f1" stroke-width="3" stroke-linecap="round"/></svg>
<b style="left:1548px;top:6px;width:43px;height:29px;background:#252526;"></b>
<span class="bd" style="left:1569.5px;top:10px;transform:translateX(-50%);">Fur</span>
<svg style="left:1697px;top:5px" width="28" height="28" viewBox="0 0 28 28"><circle cx="14" cy="14" r="13.5" fill="#f4f4f4"/><path d="M5 22a13.5 13.5 0 0 0 18 0l-2-3h-14z" fill="#e2571e"/><path d="M9 8h10v3h-2v7h-2v-5h-2v5h-2v-7H9z" fill="#3a3a3a"/><circle cx="11" cy="10" r="1.3" fill="#fff"/><circle cx="17" cy="10" r="1.3" fill="#fff"/></svg>
<b style="left:1768px;top:20px;width:14px;height:2px;background:#d8d8d8;"></b>
<svg style="left:1824px;top:14px" width="17" height="16" viewBox="0 0 17 16"><path d="M4 4V1.5H15.5V11H13" fill="none" stroke="#e8e8e8" stroke-width="2"/><rect x="1" y="4.5" width="11.5" height="10.5" fill="none" stroke="#e8e8e8" stroke-width="2.2"/></svg>
<svg style="left:1883px;top:15px" width="16" height="16" viewBox="0 0 16 16"><path d="M1.5 1.5L14.5 14.5M14.5 1.5L1.5 14.5" stroke="#f1f1f1" stroke-width="2.2"/></svg>
<svg style="left:7px;top:45px" width="6" height="24" viewBox="0 0 6 24"><path d="M1 1v22M4 1v22" stroke="#46464a" stroke-width="1.6" stroke-dasharray="2 2"/></svg>
<svg style="left:29px;top:47px" width="18" height="18" viewBox="0 0 18 18"><circle cx="9" cy="9" r="8" fill="#cfe8ff" stroke="#0f3557" stroke-width="1.6"/><path d="M3.5 9l5.5-5v3.2h4.8v3.6H9V14z" fill="#0d3f70"/></svg>
<svg style="left:55.5px;top:55.25px" width="7" height="3.5" viewBox="0 0 7 3.5"><path d="M0 0H7L3.5 3.5Z" fill="#bdbdbd"/></svg>
<svg style="left:70px;top:48px" width="17" height="17" viewBox="0 0 17 17"><circle cx="8.5" cy="8.5" r="6.5" fill="none" stroke="#505053" stroke-width="3"/><path d="M12.5 8.5l-4-3.5v2.5H5v2h3.5V12z" fill="#505053"/></svg>
<svg style="left:105px;top:45px" width="22" height="22" viewBox="0 0 22 22"><rect x="6" y="5" width="13" height="14" fill="#d9d9d9"/><rect x="9" y="8" width="8" height="9" fill="#3a3a3d"/><path d="M5 0l1.6 3.4L10 5 6.6 6.6 5 10 3.4 6.6 0 5l3.4-1.6z" fill="#f3c667"/><circle cx="14" cy="15" r="4.5" fill="#2d2d30" stroke="#e8e8e8" stroke-width="1.6"/></svg>
<svg style="left:133.5px;top:55.25px" width="7" height="3.5" viewBox="0 0 7 3.5"><path d="M0 0H7L3.5 3.5Z" fill="#bdbdbd"/></svg>
<svg style="left:147px;top:44px" width="21" height="24" viewBox="0 0 21 24"><path d="M1 9h7l2 2h10v11H1z" fill="#e7b563"/><path d="M3 14h17l-3 8H1z" fill="#f5d48e"/><path d="M9 8V5H6l5.5-5 5.5 5H14v3z" fill="#6cb5f0"/></svg>
<svg style="left:176px;top:48px" width="16" height="16" viewBox="0 0 16 16"><path fill="#9fd0f7" d="M0 0H13L16 3V16H0Z"/><rect x="4" y="0" width="8" height="5" fill="#1f3347"/><rect x="8.5" y="1" width="2.5" height="3" fill="#9fd0f7"/><rect x="3" y="9" width="10" height="7" fill="#7fbdf0"/></svg>
<svg style="left:200px;top:45px" width="23" height="21" viewBox="0 0 23 21"><g transform="translate(8,0) scale(.9)"><path fill="#9fd0f7" d="M0 0H13L16 3V16H0Z"/><rect x="4" y="0" width="8" height="5" fill="#1f3347"/><rect x="8.5" y="1" width="2.5" height="3" fill="#9fd0f7"/><rect x="3" y="9" width="10" height="7" fill="#7fbdf0"/></g><g transform="translate(0,7) scale(.85)"><path fill="#9fd0f7" d="M0 0H13L16 3V16H0Z"/><rect x="4" y="0" width="8" height="5" fill="#1f3347"/><rect x="8.5" y="1" width="2.5" height="3" fill="#9fd0f7"/><rect x="3" y="9" width="10" height="7" fill="#7fbdf0"/></g></svg>
<b style="left:231px;top:45px;width:1px;height:23px;background:#46464a;"></b>
<svg style="left:240px;top:46px" width="18" height="18" viewBox="0 0 18 18"><path d="M3 3v6h6" fill="none" stroke="#5a5a5e" stroke-width="2.4"/><path d="M3.5 8.5C6 3.5 14 3.5 14.5 10c0 3-2 5-5 6" fill="none" stroke="#5a5a5e" stroke-width="2.4"/></svg>
<svg style="left:267.5px;top:55.25px" width="7" height="3.5" viewBox="0 0 7 3.5"><path d="M0 0H7L3.5 3.5Z" fill="#5a5a5e"/></svg>
<svg style="left:284px;top:46px" width="18" height="18" viewBox="0 0 18 18"><path d="M15 3v6H9" fill="none" stroke="#5a5a5e" stroke-width="2.4"/><path d="M14.5 8.5C12 3.5 4 3.5 3.5 10c0 3 2 5 5 6" fill="none" stroke="#5a5a5e" stroke-width="2.4"/></svg>
<svg style="left:311.5px;top:55.25px" width="7" height="3.5" viewBox="0 0 7 3.5"><path d="M0 0H7L3.5 3.5Z" fill="#5a5a5e"/></svg>
<b style="left:326px;top:45px;width:1px;height:23px;background:#3a3a3e;"></b>
<b style="left:336px;top:43px;width:82px;height:28px;background:#333337;border:1px solid #434346;box-sizing:border-box"></b>
<span style="left:342px;top:45.5px;">Release</span>
<svg style="left:405.5px;top:55.25px" width="7" height="3.5" viewBox="0 0 7 3.5"><path d="M0 0H7L3.5 3.5Z" fill="#bdbdbd"/></svg>
<b style="left:426px;top:43px;width:140px;height:28px;background:#333337;border:1px solid #434346;box-sizing:border-box"></b>
<span style="left:432px;top:45.5px;">Any CPU</span>
<svg style="left:551.5px;top:55.25px" width="7" height="3.5" viewBox="0 0 7 3.5"><path d="M0 0H7L3.5 3.5Z" fill="#bdbdbd"/></svg>
<svg style="left:576px;top:46px" width="14" height="20" viewBox="0 0 14 20"><path d="M1 1l12 9-12 9z" fill="#7ad67a"/></svg>
<span style="left:599px;top:45.5px;letter-spacing:-.2px">IIS Express</span>
<svg style="left:679.5px;top:55.25px" width="7" height="3.5" viewBox="0 0 7 3.5"><path d="M0 0H7L3.5 3.5Z" fill="#bdbdbd"/></svg>
<svg style="left:695px;top:45px" width="21" height="22" viewBox="0 0 21 22"><path d="M16.5 6.5A7.2 7.2 0 1 0 17.8 12" fill="none" stroke="#6cb5f0" stroke-width="3"/><path d="M11 0l7 4.5-7 4.5z" fill="#6cb5f0" transform="rotate(25 14 4)"/></svg>
<svg style="left:721.5px;top:55.25px" width="7" height="3.5" viewBox="0 0 7 3.5"><path d="M0 0H7L3.5 3.5Z" fill="#bdbdbd"/></svg>
<svg style="left:745px;top:44px" width="24" height="24" viewBox="0 0 24 24"><path d="M8 1h14v14H8z" fill="#e7b563"/><path d="M12 1v5h4V1" fill="#2d2d30"/><circle cx="8" cy="14" r="4.5" fill="#2d2d30" stroke="#6cb5f0" stroke-width="2.4"/><path d="M5 17.5L1 22" stroke="#6cb5f0" stroke-width="3"/></svg>
<b style="left:776px;top:45px;width:1px;height:23px;background:#46464a;"></b>
<svg style="left:782px;top:46px" width="22" height="20" viewBox="0 0 22 20"><rect x="1" y="1" width="20" height="18" fill="#3d4f66" stroke="#c8d6e8" stroke-width="2"/><circle cx="11" cy="11" r="4.5" fill="none" stroke="#7fbcf5" stroke-width="2.4"/><rect x="4" y="3" width="5" height="3" fill="#c8d6e8"/></svg>
<b style="left:811px;top:58px;width:9px;height:1.5px;background:#8a8a8a;"></b>
<svg style="left:812px;top:63.25px" width="7" height="3.5" viewBox="0 0 7 3.5"><path d="M0 0H7L3.5 3.5Z" fill="#8a8a8a"/></svg>
<svg style="left:1630px;top:48px" width="20" height="20" viewBox="0 0 20 20"><path d="M8 5H2v13h14v-5" fill="none" stroke="#e4e4e4" stroke-width="2"/><path d="M6 14c0-5 3-8 8-8V2.5l5.5 5.5-5.5 5.5V10c-4 0-6 1-8 4z" fill="none" stroke="#e4e4e4" stroke-width="1.8"/></svg>
<span style="left:1658px;top:47px;letter-spacing:-0.35px;">Live Share</span>
<svg style="left:1760px;top:46px" width="20" height="22" viewBox="0 0 20 22"><path d="M7 2h12v9h-5l-3 3v-3" fill="none" stroke="#d8d8d8" stroke-width="1.8"/><circle cx="7" cy="10" r="3" fill="none" stroke="#d8d8d8" stroke-width="1.8"/><path d="M1 20c0-4 3-6 6-6s6 2 6 6" fill="none" stroke="#d8d8d8" stroke-width="1.8"/></svg>
<b style="left:1808px;top:42px;width:94px;height:33px;background:#3f3f46;"></b>
<span style="left:1855px;top:47.5px;transform:translateX(-50%);color:#9b9b9b;font-weight:bold;font-size:14px;letter-spacing:0">PREVIEW</span>
<b style="left:9px;top:89px;width:321px;height:26px;background:#007acc;"></b>
<span style="left:14px;top:91px;letter-spacing:-0.2px;">CPU <i>使用率</i> - <i>报告</i>20...53.diagsession</span>
<svg style="left:289px;top:97px" width="10" height="10" viewBox="0 0 11 11"><path d="M3 1h5v5H3zM1 6h9M5.5 6v4" fill="none" stroke="#e6f2fb" stroke-width="1.5"/></svg>
<svg style="left:309px;top:96px" width="12" height="12" viewBox="0 0 12 12"><path d="M1 1l10 10M11 1L1 11" stroke="#fff" stroke-width="1.8"/></svg>
<span style="left:338.5px;top:90.5px;letter-spacing:0.07px;"><i>报告</i>20200921-1553.diagsession*</span>
<b style="left:9px;top:114px;width:1879px;height:3px;background:#007acc;"></b>
<svg style="left:1844.5px;top:100.75px" width="9" height="4.5" viewBox="0 0 9 4.5"><path d="M0 0H9L4.5 4.5Z" fill="#f1f1f1"/></svg>
<svg style="left:1865px;top:95px" width="14" height="14" viewBox="0 0 14 14"><circle cx="7" cy="7" r="4.3" fill="none" stroke="#f1f1f1" stroke-width="3.2"/><path d="M7 0v14M0 7h14M2 2l10 10M12 2L2 12" stroke="#f1f1f1" stroke-width="1.6" stroke-dasharray="2.2 9.6"/></svg>
<b style="left:1888px;top:80px;width:32px;height:968px;background:#2d2d30;"></b>
<b style="left:1909px;top:86px;width:11px;height:36px;background:#3f3f46;"></b>
<span class="vt" style="left:1907px;top:88px"><i>属性</i></span>
<b style="left:1909px;top:131px;width:11px;height:63px;background:#3f3f46;"></b>
<span class="vt" style="left:1907px;top:133px">Git <i>更改</i></span>
<b style="left:1909px;top:201px;width:11px;height:143px;background:#3f3f46;"></b>
<span class="vt" style="left:1907px;top:203px"><i>解决方案资源管理器</i></span>
<b style="left:1909px;top:352px;width:11px;height:112px;background:#3f3f46;"></b>
<span class="vt" style="left:1907px;top:354px"><i>团队资源管理器</i></span>
<b style="left:1909px;top:471px;width:11px;height:38px;background:#3f3f46;"></b>
<span class="vt" style="left:1907px;top:473px"><i>通知</i></span>
<span class="tt" style="left:7.5px;top:1016.5px;letter-spacing:-0.32px;"><i>错误列表</i> ...</span>
<b style="left:0.5px;top:1042px;width:90.5px;height:5px;background:#3b3f46;"></b>
<span class="tt" style="left:99px;top:1016.5px;letter-spacing:-0.45px;"><i>输出</i></span>
<b style="left:92px;top:1042px;width:43px;height:5px;background:#3b3f46;"></b>
<span class="tt" style="left:144px;top:1016.5px;"><i>异常设置</i></span>
<b style="left:137px;top:1042px;width:74px;height:5px;background:#3b3f46;"></b>
<span class="tt" style="left:218px;top:1016.5px;"><i>代码度量值结果</i></span>
<b style="left:211px;top:1042px;width:120px;height:5px;background:#3b3f46;"></b>
<span class="tt" style="left:339px;top:1016.5px;"><i>程序包管理器控制台</i></span>
<b style="left:332px;top:1042px;width:149px;height:5px;background:#3b3f46;"></b>
<span class="tt" style="left:489px;top:1016.5px;letter-spacing:-0.03px;">C# Interactive (.NET Framework 64 <i>位</i>)</span>
<b style="left:482px;top:1042px;width:289px;height:5px;background:#3b3f46;"></b>
<span class="tt" style="left:778px;top:1016.5px;">Web <i>发布活动</i></span>
<b style="left:771px;top:1042px;width:112px;height:5px;background:#3b3f46;"></b>
<span class="tt" style="left:891px;top:1016.5px;letter-spacing:-0.45px;"><i>代码克隆分析结果</i></span>
<b style="left:884px;top:1042px;width:133px;height:5px;background:#3b3f46;"></b>
<b style="left:0px;top:1048px;width:1920px;height:29px;background:#007acc;"></b>
<b style="left:0px;top:1077px;width:1920px;height:3px;background:#b9def7;"></b>
<b style="left:9px;top:117px;width:1879px;height:893px;background:#252526;"></b>
<b style="left:9px;top:117px;width:1871px;height:31px;background:#3c3c3f;"></b>
<span style="left:17.5px;top:121px;"><i>当前视图</i>:</span>
<b style="left:88px;top:121px;width:141px;height:23px;background:#333337;border:1px solid #434346;box-sizing:border-box"></b>
<b style="left:89px;top:122px;width:115px;height:21px;background:#0078d7;"></b>
<span style="left:92px;top:121px;"><i>函数</i></span>
<b style="left:205px;top:122px;width:23.5px;height:21px;background:#f4f4f4;"></b>
<svg style="left:209px;top:127px" width="15" height="11" viewBox="0 0 15 11"><path d="M1.5 1.5l6 7 6-7" fill="none" stroke="#1e1e1e" stroke-width="2.4"/></svg>
<b style="left:1643px;top:120px;width:193px;height:25px;background:#38383b;"></b>
<span style="left:1649px;top:121.5px;color:#c8c8c8"><i>搜索</i></span>
<svg style="left:1832px;top:121px" width="22" height="22" viewBox="0 0 22 22"><circle cx="14" cy="8" r="5.5" fill="#d8d8d8" stroke="#bdbdbd" stroke-width="2"/><path d="M10 12l-7 7" stroke="#e0e0e0" stroke-width="4" stroke-linecap="round"/></svg>
<svg style="left:1859px;top:131px" width="8" height="4" viewBox="0 0 8 4"><path d="M0 0H8L4 4Z" fill="#f1f1f1"/></svg>
<b style="left:9px;top:148px;width:1851px;height:2px;background:#3a3a3d;"></b>
<b style="left:9px;top:177.5px;width:1851px;height:2px;background:#3a3a3d;"></b>
<b style="left:381.5px;top:150px;width:2px;height:27.5px;background:#3f3f46;"></b>
<b style="left:526.5px;top:150px;width:2px;height:27.5px;background:#3f3f46;"></b>
<b style="left:669px;top:150px;width:2px;height:27.5px;background:#3f3f46;"></b>
<b style="left:814px;top:150px;width:2px;height:27.5px;background:#3f3f46;"></b>
<span style="left:16px;top:152.5px;"><i>函数名</i></span>
<span style="left:389px;top:152.5px;">CPU <i>总计</i>[<i>单位</i>...</span>
<svg style="left:514.5px;top:163px" width="8" height="4" viewBox="0 0 8 4"><path d="M0 0H8L4 4Z" fill="#f1f1f1"/></svg>
<span style="left:542px;top:152.5px;"><i>自</i> CPU [<i>单位，</i>%]</span>
<span style="left:676px;top:152.5px;"><i>模块</i></span>
<div style="left:9px;top:179.5px;width:1851px;height:765.5px;overflow:hidden">
<b style="left:0px;top:24px;width:806px;height:2px;background:#1c1c1d;"></b>
<b style="left:372.5px;top:-1.5px;width:2px;height:27px;background:#1c1c1d;"></b>
<b style="left:517.5px;top:-1.5px;width:2px;height:27px;background:#1c1c1d;"></b>
<b style="left:660px;top:-1.5px;width:2px;height:27px;background:#1c1c1d;"></b>
<b style="left:654.5px;top:1px;width:1.5px;height:21px;background:#9ab;"></b>
<svg style="left:12px;top:9px" width="9" height="9" viewBox="0 0 9 9"><path d="M9 0v9H0z" fill="#e0e0e0"/></svg>
<span style="left:31px;top:1px;">iisexpress.exe (PID: 10736)</span>
<span style="right:1920px;top:1px;right:1339px">1807 (100.00%)</span>
<span style="right:1920px;top:1px;right:1195px">0 (0.00%)</span>
<span style="left:667px;top:1px;">iisexpress.exe</span>
<b style="left:0px;top:51px;width:806px;height:2px;background:#1c1c1d;"></b>
<b style="left:372.5px;top:25.5px;width:2px;height:27px;background:#1c1c1d;"></b>
<b style="left:517.5px;top:25.5px;width:2px;height:27px;background:#1c1c1d;"></b>
<b style="left:660px;top:25.5px;width:2px;height:27px;background:#1c1c1d;"></b>
<b style="left:380.17px;top:28px;width:133.33px;height:21px;background:#3f7fb4;"></b>
<b style="left:525px;top:28px;width:131px;height:21px;background:#3f7fb4;"></b>
<span style="left:31px;top:28px;"><u>[<i>本机</i>]</u></span>
<span style="right:1920px;top:28px;right:1339px">1798 (99.50%)</span>
<span style="right:1920px;top:28px;right:1195px">321 (17.76%)</span>
<span style="left:667px;top:28px;"><i>多个模块</i></span>
<b style="left:0px;top:78px;width:806px;height:2px;background:#1c1c1d;"></b>
<b style="left:372.5px;top:52.5px;width:2px;height:27px;background:#1c1c1d;"></b>
<b style="left:517.5px;top:52.5px;width:2px;height:27px;background:#1c1c1d;"></b>
<b style="left:660px;top:52.5px;width:2px;height:27px;background:#1c1c1d;"></b>
<b style="left:403.607px;top:55px;width:109.893px;height:21px;background:#3f7fb4;"></b>
<b style="left:531.157px;top:55px;width:124.843px;height:21px;background:#3f7fb4;"></b>
<span style="left:31px;top:55px;"><u>[<i>外部代码</i>]</u></span>
<span style="right:1920px;top:55px;right:1339px">1482 (82.01%)</span>
<span style="right:1920px;top:55px;right:1195px">306 (16.93%)</span>
<span style="left:667px;top:55px;"><i>多个模块</i></span>
<b style="left:0px;top:105px;width:806px;height:2px;background:#1c1c1d;"></b>
<b style="left:372.5px;top:79.5px;width:2px;height:27px;background:#1c1c1d;"></b>
<b style="left:517.5px;top:79.5px;width:2px;height:27px;background:#1c1c1d;"></b>
<b style="left:660px;top:79.5px;width:2px;height:27px;background:#1c1c1d;"></b>
<b style="left:407.305px;top:82px;width:106.195px;height:21px;background:#3f7fb4;"></b>
<b style="left:654.5px;top:82px;width:1.5px;height:21px;background:#9ab;"></b>
<span style="left:31px;top:82px;">StackExchange.Profiling.MiniProfilerMiddlew...</span>
<span style="right:1920px;top:82px;right:1339px">1432 (79.25%)</span>
<span style="right:1920px;top:82px;right:1195px">0 (0.00%)</span>
<span style="left:667px;top:82px;">MiniProfiler.Asp...</span>
<b style="left:0px;top:132px;width:806px;height:2px;background:#1c1c1d;"></b>
<b style="left:372.5px;top:106.5px;width:2px;height:27px;background:#1c1c1d;"></b>
<b style="left:517.5px;top:106.5px;width:2px;height:27px;background:#1c1c1d;"></b>
<b style="left:660px;top:106.5px;width:2px;height:27px;background:#1c1c1d;"></b>
<b style="left:407.305px;top:109px;width:106.195px;height:21px;background:#3f7fb4;"></b>
<b style="left:654.5px;top:109px;width:1.5px;height:21px;background:#9ab;"></b>
<span style="left:31px;top:109px;letter-spacing:-0.06px;"><u>[<i>外部调用</i>]</u> System.Runtime.CompilerServices....</span>
<span style="right:1920px;top:109px;right:1339px">1432 (79.25%)</span>
<span style="right:1920px;top:109px;right:1195px">0 (0.00%)</span>
<span style="left:667px;top:109px;letter-spacing:-0.31px;">System.Private.C...</span>
<b style="left:0px;top:159px;width:806px;height:2px;background:#1c1c1d;"></b>
<b style="left:372.5px;top:133.5px;width:2px;height:27px;background:#1c1c1d;"></b>
<b style="left:517.5px;top:133.5px;width:2px;height:27px;background:#1c1c1d;"></b>
<b style="left:660px;top:133.5px;width:2px;height:27px;background:#1c1c1d;"></b>
<b style="left:407.305px;top:136px;width:106.195px;height:21px;background:#3f7fb4;"></b>
<b style="left:654.5px;top:136px;width:1.5px;height:21px;background:#9ab;"></b>
<span style="left:31px;top:136px;">StackExchange.Profiling.MiniProfilerMiddlew...</span>
<span style="right:1920px;top:136px;right:1339px">1432 (79.25%)</span>
<span style="right:1920px;top:136px;right:1195px">0 (0.00%)</span>
<span style="left:667px;top:136px;">MiniProfiler.Asp...</span>
<b style="left:0px;top:186px;width:806px;height:2px;background:#1c1c1d;"></b>
<b style="left:372.5px;top:160.5px;width:2px;height:27px;background:#1c1c1d;"></b>
<b style="left:517.5px;top:160.5px;width:2px;height:27px;background:#1c1c1d;"></b>
<b style="left:660px;top:160.5px;width:2px;height:27px;background:#1c1c1d;"></b>
<b style="left:408.055px;top:163px;width:105.445px;height:21px;background:#3f7fb4;"></b>
<b style="left:654.5px;top:163px;width:1.5px;height:21px;background:#9ab;"></b>
<span style="left:31px;top:163px;letter-spacing:0.08px;">Swashbuckle.AspNetCore.Swagger.Swagger...</span>
<span style="right:1920px;top:163px;right:1339px">1422 (78.69%)</span>
<span style="right:1920px;top:163px;right:1195px">0 (0.00%)</span>
<span style="left:667px;top:163px;letter-spacing:0.02px;">Swashbuckle.As...</span>
<b style="left:0px;top:213px;width:806px;height:2px;background:#1c1c1d;"></b>
<b style="left:372.5px;top:187.5px;width:2px;height:27px;background:#1c1c1d;"></b>
<b style="left:517.5px;top:187.5px;width:2px;height:27px;background:#1c1c1d;"></b>
<b style="left:660px;top:187.5px;width:2px;height:27px;background:#1c1c1d;"></b>
<b style="left:408.055px;top:190px;width:105.445px;height:21px;background:#3f7fb4;"></b>
<b style="left:654.5px;top:190px;width:1.5px;height:21px;background:#9ab;"></b>
<span style="left:31px;top:190px;letter-spacing:0.08px;">Swashbuckle.AspNetCore.Swagger.Swagger...</span>
<span style="right:1920px;top:190px;right:1339px">1422 (78.69%)</span>
<span style="right:1920px;top:190px;right:1195px">0 (0.00%)</span>
<span style="left:667px;top:190px;letter-spacing:0.02px;">Swashbuckle.As...</span>
<b style="left:0px;top:240px;width:806px;height:2px;background:#1c1c1d;"></b>
<b style="left:372.5px;top:214.5px;width:2px;height:27px;background:#1c1c1d;"></b>
<b style="left:517.5px;top:214.5px;width:2px;height:27px;background:#1c1c1d;"></b>
<b style="left:660px;top:214.5px;width:2px;height:27px;background:#1c1c1d;"></b>
<b style="left:408.055px;top:217px;width:105.445px;height:21px;background:#3f7fb4;"></b>
<b style="left:654.5px;top:217px;width:1.5px;height:21px;background:#9ab;"></b>
<span style="left:31px;top:217px;letter-spacing:-0.22px;">Swashbuckle.AspNetCore.SwaggerUI.Swagge...</span>
<span style="right:1920px;top:217px;right:1339px">1422 (78.69%)</span>
<span style="right:1920px;top:217px;right:1195px">0 (0.00%)</span>
<span style="left:667px;top:217px;letter-spacing:0.02px;">Swashbuckle.As...</span>
<b style="left:0px;top:267px;width:806px;height:2px;background:#1c1c1d;"></b>
<b style="left:372.5px;top:241.5px;width:2px;height:27px;background:#1c1c1d;"></b>
<b style="left:517.5px;top:241.5px;width:2px;height:27px;background:#1c1c1d;"></b>
<b style="left:660px;top:241.5px;width:2px;height:27px;background:#1c1c1d;"></b>
<b style="left:408.055px;top:244px;width:105.445px;height:21px;background:#3f7fb4;"></b>
<b style="left:654.5px;top:244px;width:1.5px;height:21px;background:#9ab;"></b>
<span style="left:31px;top:244px;letter-spacing:-0.22px;">Swashbuckle.AspNetCore.SwaggerUI.Swagge...</span>
<span style="right:1920px;top:244px;right:1339px">1422 (78.69%)</span>
<span style="right:1920px;top:244px;right:1195px">0 (0.00%)</span>
<span style="left:667px;top:244px;letter-spacing:0.02px;">Swashbuckle.As...</span>
<b style="left:0px;top:294px;width:806px;height:2px;background:#1c1c1d;"></b>
<b style="left:372.5px;top:268.5px;width:2px;height:27px;background:#1c1c1d;"></b>
<b style="left:517.5px;top:268.5px;width:2px;height:27px;background:#1c1c1d;"></b>
<b style="left:660px;top:268.5px;width:2px;height:27px;background:#1c1c1d;"></b>
<b style="left:408.055px;top:271px;width:105.445px;height:21px;background:#3f7fb4;"></b>
<b style="left:654.5px;top:271px;width:1.5px;height:21px;background:#9ab;"></b>
<span style="left:31px;top:271px;letter-spacing:-0.06px;"><u>[<i>外部调用</i>]</u> System.Runtime.CompilerServices....</span>
<span style="right:1920px;top:271px;right:1339px">1422 (78.69%)</span>
<span style="right:1920px;top:271px;right:1195px">0 (0.00%)</span>
<span style="left:667px;top:271px;letter-spacing:-0.31px;">System.Private.C...</span>
<b style="left:0px;top:321px;width:806px;height:2px;background:#1c1c1d;"></b>
<b style="left:372.5px;top:295.5px;width:2px;height:27px;background:#1c1c1d;"></b>
<b style="left:517.5px;top:295.5px;width:2px;height:27px;background:#1c1c1d;"></b>
<b style="left:660px;top:295.5px;width:2px;height:27px;background:#1c1c1d;"></b>
<b style="left:408.055px;top:298px;width:105.445px;height:21px;background:#3f7fb4;"></b>
<b style="left:654.5px;top:298px;width:1.5px;height:21px;background:#9ab;"></b>
<span style="left:31px;top:298px;letter-spacing:-0.06px;"><u>[<i>外部调用</i>]</u> System.Runtime.CompilerServices....</span>
<span style="right:1920px;top:298px;right:1339px">1422 (78.69%)</span>
<span style="right:1920px;top:298px;right:1195px">0 (0.00%)</span>
<span style="left:667px;top:298px;letter-spacing:-0.31px;">System.Private.C...</span>
<b style="left:0px;top:348px;width:806px;height:2px;background:#1c1c1d;"></b>
<b style="left:372.5px;top:322.5px;width:2px;height:27px;background:#1c1c1d;"></b>
<b style="left:517.5px;top:322.5px;width:2px;height:27px;background:#1c1c1d;"></b>
<b style="left:660px;top:322.5px;width:2px;height:27px;background:#1c1c1d;"></b>
<b style="left:442.681px;top:325px;width:70.819px;height:21px;background:#3f7fb4;"></b>
<b style="left:654.5px;top:325px;width:1.5px;height:21px;background:#9ab;"></b>
<span style="left:31px;top:325px;letter-spacing:-0.16px;">Fur.DatabaseAccessor.EFCoreRepository&lt;T&gt;....</span>
<span style="right:1920px;top:325px;right:1339px">955 (52.85%)</span>
<span style="right:1920px;top:325px;right:1195px">1 (0.06%)</span>
<span style="left:667px;top:325px;">Fur.dll</span>
<b style="left:0px;top:375px;width:806px;height:2px;background:#1c1c1d;"></b>
<b style="left:372.5px;top:349.5px;width:2px;height:27px;background:#1c1c1d;"></b>
<b style="left:517.5px;top:349.5px;width:2px;height:27px;background:#1c1c1d;"></b>
<b style="left:660px;top:349.5px;width:2px;height:27px;background:#1c1c1d;"></b>
<b style="left:442.761px;top:352px;width:70.7386px;height:21px;background:#3f7fb4;"></b>
<b style="left:654.5px;top:352px;width:1.5px;height:21px;background:#9ab;"></b>
<span style="left:31px;top:352px;letter-spacing:-0.18px;">Fur.DatabaseAccessor.EFCoreRepository&lt;T, T...</span>
<span style="right:1920px;top:352px;right:1339px">954 (52.79%)</span>
<span style="right:1920px;top:352px;right:1195px">2 (0.11%)</span>
<span style="left:667px;top:352px;">Fur.dll</span>
<b style="left:0px;top:402px;width:806px;height:2px;background:#1c1c1d;"></b>
<b style="left:372.5px;top:376.5px;width:2px;height:27px;background:#1c1c1d;"></b>
<b style="left:517.5px;top:376.5px;width:2px;height:27px;background:#1c1c1d;"></b>
<b style="left:660px;top:376.5px;width:2px;height:27px;background:#1c1c1d;"></b>
<b style="left:450.091px;top:379px;width:63.4088px;height:21px;background:#3f7fb4;"></b>
<b style="left:654.5px;top:379px;width:1.5px;height:21px;background:#9ab;"></b>
<span style="left:31px;top:379px;letter-spacing:0.06px;">Microsoft.EntityFrameworkCore.RelationalDa...</span>
<span style="right:1920px;top:379px;right:1339px">855 (47.32%)</span>
<span style="right:1920px;top:379px;right:1195px">0 (0.00%)</span>
<span style="left:667px;top:379px;">Microsoft.Entity...</span>
<b style="left:0px;top:429px;width:806px;height:2px;background:#1c1c1d;"></b>
<b style="left:372.5px;top:403.5px;width:2px;height:27px;background:#1c1c1d;"></b>
<b style="left:517.5px;top:403.5px;width:2px;height:27px;background:#1c1c1d;"></b>
<b style="left:660px;top:403.5px;width:2px;height:27px;background:#1c1c1d;"></b>
<b style="left:454.473px;top:406px;width:59.027px;height:21px;background:#3f7fb4;"></b>
<b style="left:654.5px;top:406px;width:1.5px;height:21px;background:#9ab;"></b>
<span style="left:31px;top:406px;">Microsoft.EntityFrameworkCore.Infrastructur...</span>
<span style="right:1920px;top:406px;right:1339px">796 (44.05%)</span>
<span style="right:1920px;top:406px;right:1195px">1 (0.06%)</span>
<span style="left:667px;top:406px;">Microsoft.Entity...</span>
<b style="left:0px;top:456px;width:806px;height:2px;background:#1c1c1d;"></b>
<b style="left:372.5px;top:430.5px;width:2px;height:27px;background:#1c1c1d;"></b>
<b style="left:517.5px;top:430.5px;width:2px;height:27px;background:#1c1c1d;"></b>
<b style="left:660px;top:430.5px;width:2px;height:27px;background:#1c1c1d;"></b>
<b style="left:454.54px;top:433px;width:58.96px;height:21px;background:#3f7fb4;"></b>
<b style="left:654.5px;top:433px;width:1.5px;height:21px;background:#9ab;"></b>
<span style="left:31px;top:433px;">Microsoft.EntityFrameworkCore.Infrastructur...</span>
<span style="right:1920px;top:433px;right:1339px">795 (44.00%)</span>
<span style="right:1920px;top:433px;right:1195px">0 (0.00%)</span>
<span style="left:667px;top:433px;">Microsoft.Entity...</span>
<b style="left:0px;top:483px;width:806px;height:2px;background:#1c1c1d;"></b>
<b style="left:372.5px;top:457.5px;width:2px;height:27px;background:#1c1c1d;"></b>
<b style="left:517.5px;top:457.5px;width:2px;height:27px;background:#1c1c1d;"></b>
<b style="left:660px;top:457.5px;width:2px;height:27px;background:#1c1c1d;"></b>
<b style="left:454.54px;top:460px;width:58.96px;height:21px;background:#3f7fb4;"></b>
<b style="left:654.5px;top:460px;width:1.5px;height:21px;background:#9ab;"></b>
<span style="left:31px;top:460px;">Microsoft.EntityFrameworkCore.Infrastructur...</span>
<span style="right:1920px;top:460px;right:1339px">795 (44.00%)</span>
<span style="right:1920px;top:460px;right:1195px">0 (0.00%)</span>
<span style="left:667px;top:460px;">Microsoft.Entity...</span>
<b style="left:0px;top:510px;width:806px;height:2px;background:#1c1c1d;"></b>
<b style="left:372.5px;top:484.5px;width:2px;height:27px;background:#1c1c1d;"></b>
<b style="left:517.5px;top:484.5px;width:2px;height:27px;background:#1c1c1d;"></b>
<b style="left:660px;top:484.5px;width:2px;height:27px;background:#1c1c1d;"></b>
<b style="left:454.54px;top:487px;width:58.96px;height:21px;background:#3f7fb4;"></b>
<b style="left:654.5px;top:487px;width:1.5px;height:21px;background:#9ab;"></b>
<span style="left:31px;top:487px;">Microsoft.EntityFrameworkCore.Infrastructur...</span>
<span style="right:1920px;top:487px;right:1339px">795 (44.00%)</span>
<span style="right:1920px;top:487px;right:1195px">0 (0.00%)</span>
<span style="left:667px;top:487px;">Microsoft.Entity...</span>
<b style="left:0px;top:537px;width:806px;height:2px;background:#1c1c1d;"></b>
<b style="left:372.5px;top:511.5px;width:2px;height:27px;background:#1c1c1d;"></b>
<b style="left:517.5px;top:511.5px;width:2px;height:27px;background:#1c1c1d;"></b>
<b style="left:660px;top:511.5px;width:2px;height:27px;background:#1c1c1d;"></b>
<b style="left:454.54px;top:514px;width:58.96px;height:21px;background:#3f7fb4;"></b>
<b style="left:654.5px;top:514px;width:1.5px;height:21px;background:#9ab;"></b>
<span style="left:31px;top:514px;letter-spacing:0.06px;">Microsoft.EntityFrameworkCore.RelationalDa...</span>
<span style="right:1920px;top:514px;right:1339px">795 (44.00%)</span>
<span style="right:1920px;top:514px;right:1195px">0 (0.00%)</span>
<span style="left:667px;top:514px;">Microsoft.Entity...</span>
<b style="left:0px;top:564px;width:806px;height:2px;background:#1c1c1d;"></b>
<b style="left:372.5px;top:538.5px;width:2px;height:27px;background:#1c1c1d;"></b>
<b style="left:517.5px;top:538.5px;width:2px;height:27px;background:#1c1c1d;"></b>
<b style="left:660px;top:538.5px;width:2px;height:27px;background:#1c1c1d;"></b>
<b style="left:454.701px;top:541px;width:58.7992px;height:21px;background:#3f7fb4;"></b>
<b style="left:654.5px;top:541px;width:1.5px;height:21px;background:#9ab;"></b>
<span style="left:31px;top:541px;letter-spacing:0.02px;">Microsoft.EntityFrameworkCore.DbContext.M...</span>
<span style="right:1920px;top:541px;right:1339px">793 (43.88%)</span>
<span style="right:1920px;top:541px;right:1195px">0 (0.00%)</span>
<span style="left:667px;top:541px;">Microsoft.Entity...</span>
<b style="left:0px;top:591px;width:806px;height:2px;background:#1c1c1d;"></b>
<b style="left:372.5px;top:565.5px;width:2px;height:27px;background:#1c1c1d;"></b>
<b style="left:517.5px;top:565.5px;width:2px;height:27px;background:#1c1c1d;"></b>
<b style="left:660px;top:565.5px;width:2px;height:27px;background:#1c1c1d;"></b>
<b style="left:454.701px;top:568px;width:58.7992px;height:21px;background:#3f7fb4;"></b>
<b style="left:654.5px;top:568px;width:1.5px;height:21px;background:#9ab;"></b>
<span style="left:31px;top:568px;">Microsoft.EntityFrameworkCore.DbContext.g...</span>
<span style="right:1920px;top:568px;right:1339px">793 (43.88%)</span>
<span style="right:1920px;top:568px;right:1195px">2 (0.11%)</span>
<span style="left:667px;top:568px;">Microsoft.Entity...</span>
<b style="left:0px;top:618px;width:806px;height:2px;background:#1c1c1d;"></b>
<b style="left:372.5px;top:592.5px;width:2px;height:27px;background:#1c1c1d;"></b>
<b style="left:517.5px;top:592.5px;width:2px;height:27px;background:#1c1c1d;"></b>
<b style="left:660px;top:592.5px;width:2px;height:27px;background:#1c1c1d;"></b>
<b style="left:455.438px;top:595px;width:58.0622px;height:21px;background:#3f7fb4;"></b>
<b style="left:654.5px;top:595px;width:1.5px;height:21px;background:#9ab;"></b>
<span style="left:31px;top:595px;">Microsoft.EntityFrameworkCore.DbContext.g...</span>
<span style="right:1920px;top:595px;right:1339px">783 (43.33%)</span>
<span style="right:1920px;top:595px;right:1195px">0 (0.00%)</span>
<span style="left:667px;top:595px;">Microsoft.Entity...</span>
<b style="left:0px;top:645px;width:806px;height:2px;background:#1c1c1d;"></b>
<b style="left:372.5px;top:619.5px;width:2px;height:27px;background:#1c1c1d;"></b>
<b style="left:517.5px;top:619.5px;width:2px;height:27px;background:#1c1c1d;"></b>
<b style="left:660px;top:619.5px;width:2px;height:27px;background:#1c1c1d;"></b>
<b style="left:457.367px;top:622px;width:56.1326px;height:21px;background:#3f7fb4;"></b>
<b style="left:654.5px;top:622px;width:1.5px;height:21px;background:#9ab;"></b>
<span style="left:31px;top:622px;">Microsoft.EntityFrameworkCore.Infrastructur...</span>
<span style="right:1920px;top:622px;right:1339px">757 (41.89%)</span>
<span style="right:1920px;top:622px;right:1195px">0 (0.00%)</span>
<span style="left:667px;top:622px;">Microsoft.Entity...</span>
<b style="left:0px;top:672px;width:806px;height:2px;background:#1c1c1d;"></b>
<b style="left:372.5px;top:646.5px;width:2px;height:27px;background:#1c1c1d;"></b>
<b style="left:517.5px;top:646.5px;width:2px;height:27px;background:#1c1c1d;"></b>
<b style="left:660px;top:646.5px;width:2px;height:27px;background:#1c1c1d;"></b>
<b style="left:457.367px;top:649px;width:56.1326px;height:21px;background:#3f7fb4;"></b>
<b style="left:654.5px;top:649px;width:1.5px;height:21px;background:#9ab;"></b>
<span style="left:31px;top:649px;letter-spacing:0.1px;">Microsoft.EntityFrameworkCore.Internal.DbC...</span>
<span style="right:1920px;top:649px;right:1339px">757 (41.89%)</span>
<span style="right:1920px;top:649px;right:1195px">0 (0.00%)</span>
<span style="left:667px;top:649px;">Microsoft.Entity...</span>
<b style="left:0px;top:699px;width:806px;height:2px;background:#1c1c1d;"></b>
<b style="left:372.5px;top:673.5px;width:2px;height:27px;background:#1c1c1d;"></b>
<b style="left:517.5px;top:673.5px;width:2px;height:27px;background:#1c1c1d;"></b>
<b style="left:660px;top:673.5px;width:2px;height:27px;background:#1c1c1d;"></b>
<b style="left:457.367px;top:676px;width:56.1326px;height:21px;background:#3f7fb4;"></b>
<b style="left:654.5px;top:676px;width:1.5px;height:21px;background:#9ab;"></b>
<span style="left:31px;top:676px;letter-spacing:0.1px;">Microsoft.EntityFrameworkCore.Internal.DbC...</span>
<span style="right:1920px;top:676px;right:1339px">757 (41.89%)</span>
<span style="right:1920px;top:676px;right:1195px">1 (0.06%)</span>
<span style="left:667px;top:676px;">Microsoft.Entity...</span>
<b style="left:0px;top:726px;width:806px;height:2px;background:#1c1c1d;"></b>
<b style="left:372.5px;top:700.5px;width:2px;height:27px;background:#1c1c1d;"></b>
<b style="left:517.5px;top:700.5px;width:2px;height:27px;background:#1c1c1d;"></b>
<b style="left:660px;top:700.5px;width:2px;height:27px;background:#1c1c1d;"></b>
<b style="left:458.399px;top:703px;width:55.1008px;height:21px;background:#3f7fb4;"></b>
<b style="left:654.5px;top:703px;width:1.5px;height:21px;background:#9ab;"></b>
<span style="left:31px;top:703px;">Microsoft.EntityFrameworkCore.Infrastructur...</span>
<span style="right:1920px;top:703px;right:1339px">743 (41.12%)</span>
<span style="right:1920px;top:703px;right:1195px">0 (0.00%)</span>
<span style="left:667px;top:703px;">Microsoft.Entity...</span>
<b style="left:0px;top:753px;width:806px;height:2px;background:#1c1c1d;"></b>
<b style="left:372.5px;top:727.5px;width:2px;height:27px;background:#1c1c1d;"></b>
<b style="left:517.5px;top:727.5px;width:2px;height:27px;background:#1c1c1d;"></b>
<b style="left:660px;top:727.5px;width:2px;height:27px;background:#1c1c1d;"></b>
<b style="left:458.399px;top:730px;width:55.1008px;height:21px;background:#3f7fb4;"></b>
<b style="left:654.5px;top:730px;width:1.5px;height:21px;background:#9ab;"></b>
<span style="left:31px;top:730px;">Microsoft.EntityFrameworkCore.Infrastructur...</span>
<span style="right:1920px;top:730px;right:1339px">743 (41.12%)</span>
<span style="right:1920px;top:730px;right:1195px">1 (0.06%)</span>
<span style="left:667px;top:730px;">Microsoft.Entity...</span>
<b style="left:0px;top:780px;width:806px;height:2px;background:#1c1c1d;"></b>
<b style="left:372.5px;top:754.5px;width:2px;height:27px;background:#1c1c1d;"></b>
<b style="left:517.5px;top:754.5px;width:2px;height:27px;background:#1c1c1d;"></b>
<b style="left:660px;top:754.5px;width:2px;height:27px;background:#1c1c1d;"></b>
<b style="left:480.348px;top:757px;width:33.1516px;height:21px;background:#3f7fb4;"></b>
<b style="left:654.5px;top:757px;width:1.5px;height:21px;background:#9ab;"></b>
<span style="left:31px;top:757px;letter-spacing:0.1px;">Fur.DatabaseAccessor.AppDbContextBuilder...</span>
<span style="right:1920px;top:757px;right:1339px">447 (24.74%)</span>
<span style="right:1920px;top:757px;right:1195px">2 (0.11%)</span>
<span style="left:667px;top:757px;">Fur.dll</span>
<b style="left:805px;top:0px;width:2px;height:2000px;background:#1c1c1d;"></b>
</div>
<b style="left:1860px;top:148px;width:19px;height:797px;background:#3e3e42;"></b>
<b style="left:1861px;top:189px;width:17px;height:21px;background:#686868;"></b>
<svg style="left:1861px;top:169px" width="17" height="12" viewBox="0 0 17 12"><path d="M1.5 10.5l7-8 7 8" fill="none" stroke="#d6d6d6" stroke-width="3"/></svg>
<svg style="left:1861px;top:912px" width="17" height="12" viewBox="0 0 17 12"><path d="M1.5 1.5l7 8 7-8" fill="none" stroke="#d6d6d6" stroke-width="3"/></svg>
<b style="left:9px;top:946px;width:1871px;height:3px;background:#4b4b50;"></b>
<b style="left:9px;top:949px;width:1871px;height:28px;background:#2a2a2c;"></b>
<b style="left:9px;top:977px;width:1871px;height:2px;background:#3a3a3d;"></b>
<b style="left:9px;top:979px;width:1871px;height:29px;background:#262627;"></b>
<b style="left:9px;top:1008px;width:1879px;height:2px;background:#333336;"></b>
<span style="left:944px;top:984px;transform:translateX(-50%);"><i>双击函数查看可用源信息</i></span>
<svg style="left:5px;top:1054px" width="20" height="16" viewBox="0 0 20 16"><path d="M5 2h14l-3.5 12H1.5z" fill="none" stroke="#dff0fc" stroke-width="2"/></svg>
<span style="left:35px;top:1052.5px;"><i>就绪</i></span>
<svg style="left:1576px;top:1055px" width="13" height="16" viewBox="0 0 13 16"><path d="M6.5 1.5v14M1 7l5.5-5.5L12 7" fill="none" stroke="#fff" stroke-width="2.4"/></svg>
<span style="left:1599px;top:1052.5px;">0</span>
<svg style="left:1637px;top:1055px" width="16" height="16" viewBox="0 0 16 16"><path d="M2 14l1-4 8-8 3 3-8 8z" fill="#fff"/></svg>
<span style="left:1664px;top:1052.5px;">1</span>
<svg style="left:1701px;top:1054px" width="18" height="18" viewBox="0 0 18 18"><path d="M9 0l9 9-9 9-9-9z" fill="#fff"/><path d="M6 5l6 6M9 8v5" stroke="#007acc" stroke-width="1.6"/><circle cx="6.5" cy="5.5" r="1.5" fill="#007acc"/><circle cx="9" cy="13" r="1.5" fill="#007acc"/><circle cx="12" cy="10.5" r="1.5" fill="#007acc"/></svg>
<span style="left:1727.5px;top:1052.5px;">Fur</span>
<svg style="left:1778px;top:1053px" width="18" height="20" viewBox="0 0 18 20"><path d="M4 3c0 6 5 5 5 10v6M14 3c0 6-5 5-5 10" fill="none" stroke="#e6f2fb" stroke-width="1.8"/><circle cx="4" cy="3" r="2.2" fill="#e6f2fb"/><circle cx="14" cy="3" r="2.2" fill="#e6f2fb"/></svg>
<span style="left:1805px;top:1052.5px;">rc1</span>
<svg style="left:1836px;top:1061px" width="9" height="5" viewBox="0 0 9 5"><path d="M0 5h9L4.5 0z" fill="#fff"/></svg>
<svg style="left:1880px;top:1053px" width="18" height="20" viewBox="0 0 18 20"><path d="M9 1c4 0 5.5 3 5.5 7 0 3 1.5 5 2.5 6H1c1-1 2.5-3 2.5-6C3.5 4 5 1 9 1z" fill="#fff"/><path d="M6.5 16.5a2.5 2.5 0 0 0 5 0" fill="#fff"/></svg>
</div>
<div class="win" style="left:960px;top:540px">
<svg style="left:14px;top:8px" width="26" height="24" viewBox="0 0 24 24"><path d="M18.8 2.5L24 0.5V23.5L18.8 21.5Z" fill="#fafafa"/><path d="M19.5 6L2 17M19.5 18L2 7" stroke="#fafafa" stroke-width="4.2" fill="none"/></svg>
<span class="dim" style="left:45px;top:10px;"><i>高级保存选项</i>(V)...</span>
<span class="mn" style="left:182px;top:10px;"><i>文件</i>(F)</span>
<span class="mn" style="left:255px;top:10px;"><i>编辑</i>(E)</span>
<span class="mn" style="left:328px;top:10px;"><i>视图</i>(V)</span>
<span class="mn" style="left:400px;top:10px;">Git(G)</span>
<span class="mn" style="left:466px;top:10px;"><i>项目</i>(P)</span>
<span class="mn" style="left:540px;top:10px;"><i>生成</i>(B)</span>
<span class="mn" style="left:615px;top:10px;"><i>调试</i>(D)</span>
<span class="mn" style="left:690px;top:10px;"><i>体系结构</i>(C)</span>
<span class="mn" style="left:794px;top:10px;"><i>测试</i>(S)</span>
<span class="mn" style="left:868px;top:10px;"><i>分析</i>(N)</span>
<span class="mn" style="left:944px;top:10px;"><i>工具</i>(T)</span>
<span class="mn" style="left:1019px;top:10px;"><i>扩展</i>(X)</span>
<span class="mn" style="left:1092px;top:10px;"><i>窗口</i>(W)</span>
<span class="mn" style="left:1172px;top:10px;"><i>帮助</i>(H)</span>
<b style="left:1248px;top:5px;width:276px;height:29px;background:#333337;border:1px solid #3f3f46;box-sizing:border-box"></b>
<span style="left:1255px;top:9px;color:#8c8c8c"><i>搜索</i> (Ctrl+Q)</span>
<svg style="left:1497px;top:10px" width="19" height="19" viewBox="0 0 19 19"><circle cx="12" cy="7" r="4.6" fill="none" stroke="#f1f1f1" stroke-width="2.6"/><path d="M8.5 10.5L2.5 16.5" stroke="#f1f1f1" stroke-width="3" stroke-linecap="round"/></svg>
<b style="left:1548px;top:6px;width:43px;height:29px;background:#252526;"></b>
<span class="bd" style="left:1569.5px;top:10px;transform:translateX(-50%);">Fur</span>
<svg style="left:1697px;top:5px" width="28" height="28" viewBox="0 0 28 28"><circle cx="14" cy="14" r="13.5" fill="#f4f4f4"/><path d="M5 22a13.5 13.5 0 0 0 18 0l-2-3h-14z" fill="#e2571e"/><path d="M9 8h10v3h-2v7h-2v-5h-2v5h-2v-7H9z" fill="#3a3a3a"/><circle cx="11" cy="10" r="1.3" fill="#fff"/><circle cx="17" cy="10" r="1.3" fill="#fff"/></svg>
<b style="left:1768px;top:20px;width:14px;height:2px;background:#d8d8d8;"></b>
<svg style="left:1824px;top:14px" width="17" height="16" viewBox="0 0 17 16"><path d="M4 4V1.5H15.5V11H13" fill="none" stroke="#e8e8e8" stroke-width="2"/><rect x="1" y="4.5" width="11.5" height="10.5" fill="none" stroke="#e8e8e8" stroke-width="2.2"/></svg>
<svg style="left:1883px;top:15px" width="16" height="16" viewBox="0 0 16 16"><path d="M1.5 1.5L14.5 14.5M14.5 1.5L1.5 14.5" stroke="#f1f1f1" stroke-width="2.2"/></svg>
<svg style="left:7px;top:45px" width="6" height="24" viewBox="0 0 6 24"><path d="M1 1v22M4 1v22" stroke="#46464a" stroke-width="1.6" stroke-dasharray="2 2"/></svg>
<svg style="left:29px;top:47px" width="18" height="18" viewBox="0 0 18 18"><circle cx="9" cy="9" r="8" fill="#cfe8ff" stroke="#0f3557" stroke-width="1.6"/><path d="M3.5 9l5.5-5v3.2h4.8v3.6H9V14z" fill="#0d3f70"/></svg>
<svg style="left:55.5px;top:55.25px" width="7" height="3.5" viewBox="0 0 7 3.5"><path d="M0 0H7L3.5 3.5Z" fill="#bdbdbd"/></svg>
<svg style="left:70px;top:48px" width="17" height="17" viewBox="0 0 17 17"><circle cx="8.5" cy="8.5" r="6.5" fill="none" stroke="#505053" stroke-width="3"/><path d="M12.5 8.5l-4-3.5v2.5H5v2h3.5V12z" fill="#505053"/></svg>
<svg style="left:105px;top:45px" width="22" height="22" viewBox="0 0 22 22"><rect x="6" y="5" width="13" height="14" fill="#d9d9d9"/><rect x="9" y="8" width="8" height="9" fill="#3a3a3d"/><path d="M5 0l1.6 3.4L10 5 6.6 6.6 5 10 3.4 6.6 0 5l3.4-1.6z" fill="#f3c667"/><circle cx="14" cy="15" r="4.5" fill="#2d2d30" stroke="#e8e8e8" stroke-width="1.6"/></svg>
<svg style="left:133.5px;top:55.25px" width="7" height="3.5" viewBox="0 0 7 3.5"><path d="M0 0H7L3.5 3.5Z" fill="#bdbdbd"/></svg>
<svg style="left:147px;top:44px" width="21" height="24" viewBox="0 0 21 24"><path d="M1 9h7l2 2h10v11H1z" fill="#e7b563"/><path d="M3 14h17l-3 8H1z" fill="#f5d48e"/><path d="M9 8V5H6l5.5-5 5.5 5H14v3z" fill="#6cb5f0"/></svg>
<svg style="left:176px;top:48px" width="16" height="16" viewBox="0 0 16 16"><path fill="#9fd0f7" d="M0 0H13L16 3V16H0Z"/><rect x="4" y="0" width="8" height="5" fill="#1f3347"/><rect x="8.5" y="1" width="2.5" height="3" fill="#9fd0f7"/><rect x="3" y="9" width="10" height="7" fill="#7fbdf0"/></svg>
<svg style="left:200px;top:45px" width="23" height="21" viewBox="0 0 23 21"><g transform="translate(8,0) scale(.9)"><path fill="#9fd0f7" d="M0 0H13L16 3V16H0Z"/><rect x="4" y="0" width="8" height="5" fill="#1f3347"/><rect x="8.5" y="1" width="2.5" height="3" fill="#9fd0f7"/><rect x="3" y="9" width="10" height="7" fill="#7fbdf0"/></g><g transform="translate(0,7) scale(.85)"><path fill="#9fd0f7" d="M0 0H13L16 3V16H0Z"/><rect x="4" y="0" width="8" height="5" fill="#1f3347"/><rect x="8.5" y="1" width="2.5" height="3" fill="#9fd0f7"/><rect x="3" y="9" width="10" height="7" fill="#7fbdf0"/></g></svg>
<b style="left:231px;top:45px;width:1px;height:23px;background:#46464a;"></b>
<svg style="left:240px;top:46px" width="18" height="18" viewBox="0 0 18 18"><path d="M3 3v6h6" fill="none" stroke="#5a5a5e" stroke-width="2.4"/><path d="M3.5 8.5C6 3.5 14 3.5 14.5 10c0 3-2 5-5 6" fill="none" stroke="#5a5a5e" stroke-width="2.4"/></svg>
<svg style="left:267.5px;top:55.25px" width="7" height="3.5" viewBox="0 0 7 3.5"><path d="M0 0H7L3.5 3.5Z" fill="#5a5a5e"/></svg>
<svg style="left:284px;top:46px" width="18" height="18" viewBox="0 0 18 18"><path d="M15 3v6H9" fill="none" stroke="#5a5a5e" stroke-width="2.4"/><path d="M14.5 8.5C12 3.5 4 3.5 3.5 10c0 3 2 5 5 6" fill="none" stroke="#5a5a5e" stroke-width="2.4"/></svg>
<svg style="left:311.5px;top:55.25px" width="7" height="3.5" viewBox="0 0 7 3.5"><path d="M0 0H7L3.5 3.5Z" fill="#5a5a5e"/></svg>
<b style="left:326px;top:45px;width:1px;height:23px;background:#3a3a3e;"></b>
<b style="left:336px;top:43px;width:82px;height:28px;background:#333337;border:1px solid #434346;box-sizing:border-box"></b>
<span style="left:342px;top:45.5px;">Release</span>
<svg style="left:405.5px;top:55.25px" width="7" height="3.5" viewBox="0 0 7 3.5"><path d="M0 0H7L3.5 3.5Z" fill="#bdbdbd"/></svg>
<b style="left:426px;top:43px;width:140px;height:28px;background:#333337;border:1px solid #434346;box-sizing:border-box"></b>
<span style="left:432px;top:45.5px;">Any CPU</span>
<svg style="left:551.5px;top:55.25px" width="7" height="3.5" viewBox="0 0 7 3.5"><path d="M0 0H7L3.5 3.5Z" fill="#bdbdbd"/></svg>
<svg style="left:576px;top:46px" width="14" height="20" viewBox="0 0 14 20"><path d="M1 1l12 9-12 9z" fill="#7ad67a"/></svg>
<span style="left:599px;top:45.5px;letter-spacing:-.2px">IIS Express</span>
<svg style="left:679.5px;top:55.25px" width="7" height="3.5" viewBox="0 0 7 3.5"><path d="M0 0H7L3.5 3.5Z" fill="#bdbdbd"/></svg>
<svg style="left:695px;top:45px" width="21" height="22" viewBox="0 0 21 22"><path d="M16.5 6.5A7.2 7.2 0 1 0 17.8 12" fill="none" stroke="#6cb5f0" stroke-width="3"/><path d="M11 0l7 4.5-7 4.5z" fill="#6cb5f0" transform="rotate(25 14 4)"/></svg>
<svg style="left:721.5px;top:55.25px" width="7" height="3.5" viewBox="0 0 7 3.5"><path d="M0 0H7L3.5 3.5Z" fill="#bdbdbd"/></svg>
<svg style="left:745px;top:44px" width="24" height="24" viewBox="0 0 24 24"><path d="M8 1h14v14H8z" fill="#e7b563"/><path d="M12 1v5h4V1" fill="#2d2d30"/><circle cx="8" cy="14" r="4.5" fill="#2d2d30" stroke="#6cb5f0" stroke-width="2.4"/><path d="M5 17.5L1 22" stroke="#6cb5f0" stroke-width="3"/></svg>
<b style="left:776px;top:45px;width:1px;height:23px;background:#46464a;"></b>
<svg style="left:782px;top:46px" width="22" height="20" viewBox="0 0 22 20"><rect x="1" y="1" width="20" height="18" fill="#3d4f66" stroke="#c8d6e8" stroke-width="2"/><circle cx="11" cy="11" r="4.5" fill="none" stroke="#7fbcf5" stroke-width="2.4"/><rect x="4" y="3" width="5" height="3" fill="#c8d6e8"/></svg>
<b style="left:811px;top:58px;width:9px;height:1.5px;background:#8a8a8a;"></b>
<svg style="left:812px;top:63.25px" width="7" height="3.5" viewBox="0 0 7 3.5"><path d="M0 0H7L3.5 3.5Z" fill="#8a8a8a"/></svg>
<svg style="left:1630px;top:48px" width="20" height="20" viewBox="0 0 20 20"><path d="M8 5H2v13h14v-5" fill="none" stroke="#e4e4e4" stroke-width="2"/><path d="M6 14c0-5 3-8 8-8V2.5l5.5 5.5-5.5 5.5V10c-4 0-6 1-8 4z" fill="none" stroke="#e4e4e4" stroke-width="1.8"/></svg>
<span style="left:1658px;top:47px;letter-spacing:-0.35px;">Live Share</span>
<svg style="left:1760px;top:46px" width="20" height="22" viewBox="0 0 20 22"><path d="M7 2h12v9h-5l-3 3v-3" fill="none" stroke="#d8d8d8" stroke-width="1.8"/><circle cx="7" cy="10" r="3" fill="none" stroke="#d8d8d8" stroke-width="1.8"/><path d="M1 20c0-4 3-6 6-6s6 2 6 6" fill="none" stroke="#d8d8d8" stroke-width="1.8"/></svg>
<b style="left:1808px;top:42px;width:94px;height:33px;background:#3f3f46;"></b>
<span style="left:1855px;top:47.5px;transform:translateX(-50%);color:#9b9b9b;font-weight:bold;font-size:14px;letter-spacing:0">PREVIEW</span>
<b style="left:9px;top:89px;width:321px;height:26px;background:#007acc;"></b>
<span style="left:14px;top:91px;letter-spacing:-0.2px;">CPU <i>使用率</i> - <i>报告</i>20...53.diagsession</span>
<svg style="left:289px;top:97px" width="10" height="10" viewBox="0 0 11 11"><path d="M3 1h5v5H3zM1 6h9M5.5 6v4" fill="none" stroke="#e6f2fb" stroke-width="1.5"/></svg>
<svg style="left:309px;top:96px" width="12" height="12" viewBox="0 0 12 12"><path d="M1 1l10 10M11 1L1 11" stroke="#fff" stroke-width="1.8"/></svg>
<span style="left:338.5px;top:90.5px;letter-spacing:0.07px;"><i>报告</i>20200921-1553.diagsession*</span>
<b style="left:9px;top:114px;width:1879px;height:3px;background:#007acc;"></b>
<svg style="left:1844.5px;top:100.75px" width="9" height="4.5" viewBox="0 0 9 4.5"><path d="M0 0H9L4.5 4.5Z" fill="#f1f1f1"/></svg>
<svg style="left:1865px;top:95px" width="14" height="14" viewBox="0 0 14 14"><circle cx="7" cy="7" r="4.3" fill="none" stroke="#f1f1f1" stroke-width="3.2"/><path d="M7 0v14M0 7h14M2 2l10 10M12 2L2 12" stroke="#f1f1f1" stroke-width="1.6" stroke-dasharray="2.2 9.6"/></svg>
<b style="left:1888px;top:80px;width:32px;height:968px;background:#2d2d30;"></b>
<b style="left:1909px;top:86px;width:11px;height:36px;background:#3f3f46;"></b>
<span class="vt" style="left:1907px;top:88px"><i>属性</i></span>
<b style="left:1909px;top:131px;width:11px;height:63px;background:#3f3f46;"></b>
<span class="vt" style="left:1907px;top:133px">Git <i>更改</i></span>
<b style="left:1909px;top:201px;width:11px;height:143px;background:#3f3f46;"></b>
<span class="vt" style="left:1907px;top:203px"><i>解决方案资源管理器</i></span>
<b style="left:1909px;top:352px;width:11px;height:112px;background:#3f3f46;"></b>
<span class="vt" style="left:1907px;top:354px"><i>团队资源管理器</i></span>
<b style="left:1909px;top:471px;width:11px;height:38px;background:#3f3f46;"></b>
<span class="vt" style="left:1907px;top:473px"><i>通知</i></span>
<span class="tt" style="left:7.5px;top:1016.5px;letter-spacing:-0.32px;"><i>错误列表</i> ...</span>
<b style="left:0.5px;top:1042px;width:90.5px;height:5px;background:#3b3f46;"></b>
<span class="tt" style="left:99px;top:1016.5px;letter-spacing:-0.45px;"><i>输出</i></span>
<b style="left:92px;top:1042px;width:43px;height:5px;background:#3b3f46;"></b>
<span class="tt" style="left:144px;top:1016.5px;"><i>异常设置</i></span>
<b style="left:137px;top:1042px;width:74px;height:5px;background:#3b3f46;"></b>
<span class="tt" style="left:218px;top:1016.5px;"><i>代码度量值结果</i></span>
<b style="left:211px;top:1042px;width:120px;height:5px;background:#3b3f46;"></b>
<span class="tt" style="left:339px;top:1016.5px;"><i>程序包管理器控制台</i></span>
<b style="left:332px;top:1042px;width:149px;height:5px;background:#3b3f46;"></b>
<span class="tt" style="left:489px;top:1016.5px;letter-spacing:-0.03px;">C# Interactive (.NET Framework 64 <i>位</i>)</span>
<b style="left:482px;top:1042px;width:289px;height:5px;background:#3b3f46;"></b>
<span class="tt" style="left:778px;top:1016.5px;">Web <i>发布活动</i></span>
<b style="left:771px;top:1042px;width:112px;height:5px;background:#3b3f46;"></b>
<span class="tt" style="left:891px;top:1016.5px;letter-spacing:-0.45px;"><i>代码克隆分析结果</i></span>
<b style="left:884px;top:1042px;width:133px;height:5px;background:#3b3f46;"></b>
<b style="left:0px;top:1048px;width:1920px;height:29px;background:#007acc;"></b>
<b style="left:0px;top:1077px;width:1920px;height:3px;background:#b9def7;"></b>
<b style="left:9px;top:117px;width:1879px;height:893px;background:#252526;"></b>
<b style="left:9px;top:117px;width:1871px;height:31px;background:#3c3c3f;"></b>
<span style="left:17.5px;top:121px;"><i>当前视图</i>:</span>
<b style="left:88px;top:121px;width:141px;height:23px;background:#333337;border:1px solid #434346;box-sizing:border-box"></b>
<span style="left:92px;top:121px;"><i>调用树</i></span>
<b style="left:205px;top:122px;width:23.5px;height:21px;background:#f4f4f4;"></b>
<svg style="left:209px;top:127px" width="15" height="11" viewBox="0 0 15 11"><path d="M1.5 1.5l6 7 6-7" fill="none" stroke="#1e1e1e" stroke-width="2.4"/></svg>
<svg style="left:257px;top:124px" width="13" height="17" viewBox="0 0 13 17"><g transform="scale(1.08)"><path d="M6 0c1 3 5 5 5 10a5.5 5.5 0 0 1-11 0c0-2 1-3.5 2-4.5 0 1.5 .5 2.5 1.5 3C3.5 5 4.5 2 6 0z" fill="#e8332a"/></g></svg>
<span style="left:275px;top:122px;"><i>展开热路径</i></span>
<svg style="left:377px;top:125px" width="15" height="16" viewBox="0 0 15 16"><g transform="translate(3,0)"><path d="M6 0c1 3 5 5 5 10a5.5 5.5 0 0 1-11 0c0-2 1-3.5 2-4.5 0 1.5 .5 2.5 1.5 3C3.5 5 4.5 2 6 0z" fill="#e8332a"/></g><path d="M0 6h7v4H0z" fill="#e8c9a0"/></svg>
<span style="left:398px;top:122px;"><i>显示热路径</i></span>
<b style="left:1643px;top:120px;width:193px;height:25px;background:#38383b;"></b>
<span style="left:1649px;top:121.5px;color:#c8c8c8"><i>搜索</i></span>
<svg style="left:1832px;top:121px" width="22" height="22" viewBox="0 0 22 22"><circle cx="14" cy="8" r="5.5" fill="#d8d8d8" stroke="#bdbdbd" stroke-width="2"/><path d="M10 12l-7 7" stroke="#e0e0e0" stroke-width="4" stroke-linecap="round"/></svg>
<svg style="left:1859px;top:131px" width="8" height="4" viewBox="0 0 8 4"><path d="M0 0H8L4 4Z" fill="#f1f1f1"/></svg>
<b style="left:9px;top:148px;width:1871px;height:2px;background:#3a3a3d;"></b>
<b style="left:9px;top:180px;width:1871px;height:2px;background:#3a3a3d;"></b>
<b style="left:500.5px;top:150px;width:2px;height:30px;background:#3f3f46;"></b>
<b style="left:644px;top:150px;width:2px;height:30px;background:#3f3f46;"></b>
<b style="left:788px;top:150px;width:2px;height:30px;background:#3f3f46;"></b>
<b style="left:931.5px;top:150px;width:2px;height:30px;background:#3f3f46;"></b>
<b style="left:1075px;top:150px;width:2px;height:30px;background:#3f3f46;"></b>
<span style="left:16px;top:155px;"><i>函数名</i></span>
<span style="left:506px;top:155px;">CPU <i>总计</i>[<i>单位</i>...</span>
<svg style="left:632px;top:165.5px" width="8" height="4" viewBox="0 0 8 4"><path d="M0 0H8L4 4Z" fill="#f1f1f1"/></svg>
<span style="left:660px;top:155px;"><i>自</i> CPU [<i>单位，</i>%]</span>
<span style="left:795px;top:155px;"><i>模块</i></span>
<span style="left:937.5px;top:155px;"><i>类别</i></span>
<div style="left:9px;top:182px;width:1871px;height:764px;overflow:hidden">
<b style="left:0px;top:23.53px;width:1067px;height:2px;background:#1c1c1d;"></b>
<b style="left:491.5px;top:-2.03px;width:2px;height:27.06px;background:#1c1c1d;"></b>
<b style="left:635px;top:-2.03px;width:2px;height:27.06px;background:#1c1c1d;"></b>
<b style="left:779px;top:-2.03px;width:2px;height:27.06px;background:#1c1c1d;"></b>
<b style="left:922.5px;top:-2.03px;width:2px;height:27.06px;background:#1c1c1d;"></b>
<svg style="left:16px;top:8.5px" width="9" height="9" viewBox="0 0 9 9"><path d="M9 0v9H0z" fill="#e0e0e0"/></svg>
<span style="left:38.5px;top:0.5px;">iisexpress.exe (PID: 10736)</span>
<span style="right:1920px;top:0.5px;right:1241px">1807 (100.00%)</span>
<span style="right:1920px;top:0.5px;right:1097.5px">0 (0.00%)</span>
<span style="left:786px;top:0.5px;"><i>多个模块</i></span>
<span style="left:928.5px;top:0.5px;"></span>
<b style="left:0px;top:50.59px;width:1067px;height:2px;background:#1c1c1d;"></b>
<b style="left:491.5px;top:25.03px;width:2px;height:27.06px;background:#1c1c1d;"></b>
<b style="left:635px;top:25.03px;width:2px;height:27.06px;background:#1c1c1d;"></b>
<b style="left:779px;top:25.03px;width:2px;height:27.06px;background:#1c1c1d;"></b>
<b style="left:922.5px;top:25.03px;width:2px;height:27.06px;background:#1c1c1d;"></b>
<svg style="left:31px;top:35.56px" width="9" height="9" viewBox="0 0 9 9"><path d="M9 0v9H0z" fill="#e0e0e0"/></svg>
<span style="left:53.5px;top:27.56px;"><u>[<i>本机</i>]</u></span>
<span style="right:1920px;top:27.56px;right:1241px">1798 (99.50%)</span>
<span style="right:1920px;top:27.56px;right:1097.5px">321 (17.76%)</span>
<span style="left:786px;top:27.56px;"><i>多个模块</i></span>
<span style="left:928.5px;top:27.56px;letter-spacing:-0.25px;">IO | <i>网络</i> | JIT | <i>驱</i>...</span>
<b style="left:0px;top:77.65px;width:1067px;height:2px;background:#1c1c1d;"></b>
<b style="left:491.5px;top:52.09px;width:2px;height:27.06px;background:#1c1c1d;"></b>
<b style="left:635px;top:52.09px;width:2px;height:27.06px;background:#1c1c1d;"></b>
<b style="left:779px;top:52.09px;width:2px;height:27.06px;background:#1c1c1d;"></b>
<b style="left:922.5px;top:52.09px;width:2px;height:27.06px;background:#1c1c1d;"></b>
<svg style="left:46px;top:62.62px" width="9" height="9" viewBox="0 0 9 9"><path d="M9 0v9H0z" fill="#e0e0e0"/></svg>
<span style="left:68.5px;top:54.62px;"><u>[<i>外部代码</i>]</u></span>
<span style="right:1920px;top:54.62px;right:1241px">1477 (81.74%)</span>
<span style="right:1920px;top:54.62px;right:1097.5px">29 (1.60%)</span>
<span style="left:786px;top:54.62px;"><i>多个模块</i></span>
<span style="left:928.5px;top:54.62px;letter-spacing:-0.25px;">IO | <i>网络</i> | JIT | <i>驱</i>...</span>
<b style="left:0px;top:104.71px;width:1067px;height:2px;background:#1c1c1d;"></b>
<b style="left:491.5px;top:79.15px;width:2px;height:27.06px;background:#1c1c1d;"></b>
<b style="left:635px;top:79.15px;width:2px;height:27.06px;background:#1c1c1d;"></b>
<b style="left:779px;top:79.15px;width:2px;height:27.06px;background:#1c1c1d;"></b>
<b style="left:922.5px;top:79.15px;width:2px;height:27.06px;background:#1c1c1d;"></b>
<svg style="left:61px;top:89.68px" width="9" height="9" viewBox="0 0 9 9"><path d="M9 0v9H0z" fill="#e0e0e0"/></svg>
<span style="left:83.5px;top:81.68px;">StackExchange.Profiling.MiniProfilerMiddleware.Invok...</span>
<span style="right:1920px;top:81.68px;right:1241px">1432 (79.25%)</span>
<span style="right:1920px;top:81.68px;right:1097.5px">0 (0.00%)</span>
<span style="left:786px;top:81.68px;">MiniProfiler.Asp...</span>
<span style="left:928.5px;top:81.68px;letter-spacing:-0.25px;">IO | <i>网络</i> | JIT | <i>驱</i>...</span>
<b style="left:0px;top:131.77px;width:1067px;height:2px;background:#1c1c1d;"></b>
<b style="left:491.5px;top:106.21px;width:2px;height:27.06px;background:#1c1c1d;"></b>
<b style="left:635px;top:106.21px;width:2px;height:27.06px;background:#1c1c1d;"></b>
<b style="left:779px;top:106.21px;width:2px;height:27.06px;background:#1c1c1d;"></b>
<b style="left:922.5px;top:106.21px;width:2px;height:27.06px;background:#1c1c1d;"></b>
<svg style="left:76px;top:116.74px" width="9" height="9" viewBox="0 0 9 9"><path d="M9 0v9H0z" fill="#e0e0e0"/></svg>
<span style="left:98.5px;top:108.74px;letter-spacing:-0.03px;"><u>[<i>外部调用</i>]</u> System.Runtime.CompilerServices.AsyncT...</span>
<span style="right:1920px;top:108.74px;right:1241px">1432 (79.25%)</span>
<span style="right:1920px;top:108.74px;right:1097.5px">0 (0.00%)</span>
<span style="left:786px;top:108.74px;">[<i>外部代码</i>]</span>
<span style="left:928.5px;top:108.74px;letter-spacing:-0.25px;">IO | <i>网络</i> | JIT | <i>驱</i>...</span>
<b style="left:0px;top:158.83px;width:1067px;height:2px;background:#1c1c1d;"></b>
<b style="left:491.5px;top:133.27px;width:2px;height:27.06px;background:#1c1c1d;"></b>
<b style="left:635px;top:133.27px;width:2px;height:27.06px;background:#1c1c1d;"></b>
<b style="left:779px;top:133.27px;width:2px;height:27.06px;background:#1c1c1d;"></b>
<b style="left:922.5px;top:133.27px;width:2px;height:27.06px;background:#1c1c1d;"></b>
<svg style="left:91px;top:143.8px" width="9" height="9" viewBox="0 0 9 9"><path d="M9 0v9H0z" fill="#e0e0e0"/></svg>
<span style="left:113.5px;top:135.8px;letter-spacing:0.05px;">StackExchange.Profiling.MiniProfilerMiddleware.In...</span>
<span style="right:1920px;top:135.8px;right:1241px">1432 (79.25%)</span>
<span style="right:1920px;top:135.8px;right:1097.5px">0 (0.00%)</span>
<span style="left:786px;top:135.8px;">MiniProfiler.Asp...</span>
<span style="left:928.5px;top:135.8px;letter-spacing:-0.25px;">IO | <i>网络</i> | JIT | <i>驱</i>...</span>
<b style="left:0px;top:185.89px;width:1067px;height:2px;background:#1c1c1d;"></b>
<b style="left:491.5px;top:160.33px;width:2px;height:27.06px;background:#1c1c1d;"></b>
<b style="left:635px;top:160.33px;width:2px;height:27.06px;background:#1c1c1d;"></b>
<b style="left:779px;top:160.33px;width:2px;height:27.06px;background:#1c1c1d;"></b>
<b style="left:922.5px;top:160.33px;width:2px;height:27.06px;background:#1c1c1d;"></b>
<svg style="left:106px;top:170.86px" width="9" height="9" viewBox="0 0 9 9"><path d="M9 0v9H0z" fill="#e0e0e0"/></svg>
<span style="left:128.5px;top:162.86px;"><u>[<i>外部代码</i>]</u></span>
<span style="right:1920px;top:162.86px;right:1241px">1423 (78.75%)</span>
<span style="right:1920px;top:162.86px;right:1097.5px">1 (0.06%)</span>
<span style="left:786px;top:162.86px;"><i>多个模块</i></span>
<span style="left:928.5px;top:162.86px;letter-spacing:-0.25px;">IO | <i>网络</i> | JIT | <i>驱</i>...</span>
<b style="left:0px;top:212.95px;width:1067px;height:2px;background:#1c1c1d;"></b>
<b style="left:491.5px;top:187.39px;width:2px;height:27.06px;background:#1c1c1d;"></b>
<b style="left:635px;top:187.39px;width:2px;height:27.06px;background:#1c1c1d;"></b>
<b style="left:779px;top:187.39px;width:2px;height:27.06px;background:#1c1c1d;"></b>
<b style="left:922.5px;top:187.39px;width:2px;height:27.06px;background:#1c1c1d;"></b>
<svg style="left:121px;top:197.92px" width="9" height="9" viewBox="0 0 9 9"><path d="M9 0v9H0z" fill="#e0e0e0"/></svg>
<span style="left:143.5px;top:189.92px;letter-spacing:-0.08px;">Swashbuckle.AspNetCore.Swagger.SwaggerM...</span>
<span style="right:1920px;top:189.92px;right:1241px">1422 (78.69%)</span>
<span style="right:1920px;top:189.92px;right:1097.5px">0 (0.00%)</span>
<span style="left:786px;top:189.92px;letter-spacing:0.02px;">Swashbuckle.As...</span>
<span style="left:928.5px;top:189.92px;letter-spacing:-0.25px;">IO | <i>网络</i> | JIT | <i>驱</i>...</span>
<b style="left:0px;top:240.01px;width:1067px;height:2px;background:#1c1c1d;"></b>
<b style="left:491.5px;top:214.45px;width:2px;height:27.06px;background:#1c1c1d;"></b>
<b style="left:635px;top:214.45px;width:2px;height:27.06px;background:#1c1c1d;"></b>
<b style="left:779px;top:214.45px;width:2px;height:27.06px;background:#1c1c1d;"></b>
<b style="left:922.5px;top:214.45px;width:2px;height:27.06px;background:#1c1c1d;"></b>
<svg style="left:136px;top:224.98px" width="9" height="9" viewBox="0 0 9 9"><path d="M9 0v9H0z" fill="#e0e0e0"/></svg>
<span style="left:158.5px;top:216.98px;letter-spacing:0.07px;"><u>[<i>外部调用</i>]</u> System.Runtime.CompilerService...</span>
<span style="right:1920px;top:216.98px;right:1241px">1422 (78.69%)</span>
<span style="right:1920px;top:216.98px;right:1097.5px">0 (0.00%)</span>
<span style="left:786px;top:216.98px;">[<i>外部代码</i>]</span>
<span style="left:928.5px;top:216.98px;letter-spacing:-0.25px;">IO | <i>网络</i> | JIT | <i>驱</i>...</span>
<b style="left:0px;top:267.07px;width:1067px;height:2px;background:#1c1c1d;"></b>
<b style="left:491.5px;top:241.51px;width:2px;height:27.06px;background:#1c1c1d;"></b>
<b style="left:635px;top:241.51px;width:2px;height:27.06px;background:#1c1c1d;"></b>
<b style="left:779px;top:241.51px;width:2px;height:27.06px;background:#1c1c1d;"></b>
<b style="left:922.5px;top:241.51px;width:2px;height:27.06px;background:#1c1c1d;"></b>
<svg style="left:151px;top:252.04px" width="9" height="9" viewBox="0 0 9 9"><path d="M9 0v9H0z" fill="#e0e0e0"/></svg>
<span style="left:173.5px;top:244.04px;letter-spacing:-0.15px;">Swashbuckle.AspNetCore.Swagger.Swagg...</span>
<span style="right:1920px;top:244.04px;right:1241px">1422 (78.69%)</span>
<span style="right:1920px;top:244.04px;right:1097.5px">0 (0.00%)</span>
<span style="left:786px;top:244.04px;letter-spacing:0.02px;">Swashbuckle.As...</span>
<span style="left:928.5px;top:244.04px;letter-spacing:-0.25px;">IO | <i>网络</i> | JIT | <i>驱</i>...</span>
<b style="left:0px;top:294.13px;width:1067px;height:2px;background:#1c1c1d;"></b>
<b style="left:491.5px;top:268.57px;width:2px;height:27.06px;background:#1c1c1d;"></b>
<b style="left:635px;top:268.57px;width:2px;height:27.06px;background:#1c1c1d;"></b>
<b style="left:779px;top:268.57px;width:2px;height:27.06px;background:#1c1c1d;"></b>
<b style="left:922.5px;top:268.57px;width:2px;height:27.06px;background:#1c1c1d;"></b>
<svg style="left:166px;top:279.1px" width="9" height="9" viewBox="0 0 9 9"><path d="M9 0v9H0z" fill="#e0e0e0"/></svg>
<span style="left:188.5px;top:271.1px;letter-spacing:0.02px;">Swashbuckle.AspNetCore.SwaggerUI.S...</span>
<span style="right:1920px;top:271.1px;right:1241px">1422 (78.69%)</span>
<span style="right:1920px;top:271.1px;right:1097.5px">0 (0.00%)</span>
<span style="left:786px;top:271.1px;letter-spacing:0.02px;">Swashbuckle.As...</span>
<span style="left:928.5px;top:271.1px;letter-spacing:-0.25px;">IO | <i>网络</i> | JIT | <i>驱</i>...</span>
<b style="left:0px;top:321.19px;width:1067px;height:2px;background:#1c1c1d;"></b>
<b style="left:491.5px;top:295.63px;width:2px;height:27.06px;background:#1c1c1d;"></b>
<b style="left:635px;top:295.63px;width:2px;height:27.06px;background:#1c1c1d;"></b>
<b style="left:779px;top:295.63px;width:2px;height:27.06px;background:#1c1c1d;"></b>
<b style="left:922.5px;top:295.63px;width:2px;height:27.06px;background:#1c1c1d;"></b>
<svg style="left:181px;top:306.16px" width="9" height="9" viewBox="0 0 9 9"><path d="M9 0v9H0z" fill="#e0e0e0"/></svg>
<span style="left:203.5px;top:298.16px;letter-spacing:0.01px;"><u>[<i>外部调用</i>]</u> System.Runtime.CompilerS...</span>
<span style="right:1920px;top:298.16px;right:1241px">1422 (78.69%)</span>
<span style="right:1920px;top:298.16px;right:1097.5px">0 (0.00%)</span>
<span style="left:786px;top:298.16px;">[<i>外部代码</i>]</span>
<span style="left:928.5px;top:298.16px;letter-spacing:-0.25px;">IO | <i>网络</i> | JIT | <i>驱</i>...</span>
<b style="left:0px;top:348.25px;width:1067px;height:2px;background:#1c1c1d;"></b>
<b style="left:491.5px;top:322.69px;width:2px;height:27.06px;background:#1c1c1d;"></b>
<b style="left:635px;top:322.69px;width:2px;height:27.06px;background:#1c1c1d;"></b>
<b style="left:779px;top:322.69px;width:2px;height:27.06px;background:#1c1c1d;"></b>
<b style="left:922.5px;top:322.69px;width:2px;height:27.06px;background:#1c1c1d;"></b>
<svg style="left:196px;top:333.22px" width="9" height="9" viewBox="0 0 9 9"><path d="M9 0v9H0z" fill="#e0e0e0"/></svg>
<span style="left:218.5px;top:325.22px;letter-spacing:0.08px;">Swashbuckle.AspNetCore.Swagger...</span>
<span style="right:1920px;top:325.22px;right:1241px">1422 (78.69%)</span>
<span style="right:1920px;top:325.22px;right:1097.5px">0 (0.00%)</span>
<span style="left:786px;top:325.22px;letter-spacing:0.02px;">Swashbuckle.As...</span>
<span style="left:928.5px;top:325.22px;letter-spacing:-0.25px;">IO | <i>网络</i> | JIT | <i>驱</i>...</span>
<b style="left:0px;top:375.31px;width:1067px;height:2px;background:#1c1c1d;"></b>
<b style="left:491.5px;top:349.75px;width:2px;height:27.06px;background:#1c1c1d;"></b>
<b style="left:635px;top:349.75px;width:2px;height:27.06px;background:#1c1c1d;"></b>
<b style="left:779px;top:349.75px;width:2px;height:27.06px;background:#1c1c1d;"></b>
<b style="left:922.5px;top:349.75px;width:2px;height:27.06px;background:#1c1c1d;"></b>
<svg style="left:211px;top:360.28px" width="9" height="9" viewBox="0 0 9 9"><path d="M9 0v9H0z" fill="#e0e0e0"/></svg>
<span style="left:233.5px;top:352.28px;"><u>[<i>外部代码</i>]</u></span>
<span style="right:1920px;top:352.28px;right:1241px">1422 (78.69%)</span>
<span style="right:1920px;top:352.28px;right:1097.5px">31 (1.72%)</span>
<span style="left:786px;top:352.28px;"><i>多个模块</i></span>
<span style="left:928.5px;top:352.28px;letter-spacing:-0.25px;">IO | <i>网络</i> | JIT | <i>驱</i>...</span>
<b style="left:0px;top:376.31px;width:1067px;height:26.06px;background:#007acc;"></b>
<b style="left:0px;top:402.37px;width:1067px;height:2px;background:#1c1c1d;"></b>
<b style="left:491.5px;top:376.81px;width:2px;height:27.06px;background:#1a6fb0;"></b>
<b style="left:635px;top:376.81px;width:2px;height:27.06px;background:#1a6fb0;"></b>
<b style="left:779px;top:376.81px;width:2px;height:27.06px;background:#1a6fb0;"></b>
<b style="left:922.5px;top:376.81px;width:2px;height:27.06px;background:#1a6fb0;"></b>
<svg style="left:226px;top:384.34px" width="9" height="13" viewBox="0 0 9 13"><path d="M1.5 1.5l6 5-6 5z" fill="none" stroke="#e0e0e0" stroke-width="1.6"/></svg>
<span style="left:248.5px;top:379.34px;letter-spacing:-0.22px;">Fur.DatabaseAccessor.EFCoreR...</span>
<span style="right:1920px;top:379.34px;right:1241px">955 (52.85%)</span>
<span style="right:1920px;top:379.34px;right:1097.5px">1 (0.06%)</span>
<span style="left:786px;top:379.34px;">Fur.dll</span>
<span style="left:928.5px;top:379.34px;letter-spacing:-0.36px;"><i>网络</i> | JIT | <i>文件系</i>...</span>
<b style="left:0px;top:429.43px;width:1067px;height:2px;background:#1c1c1d;"></b>
<b style="left:491.5px;top:403.87px;width:2px;height:27.06px;background:#1c1c1d;"></b>
<b style="left:635px;top:403.87px;width:2px;height:27.06px;background:#1c1c1d;"></b>
<b style="left:779px;top:403.87px;width:2px;height:27.06px;background:#1c1c1d;"></b>
<b style="left:922.5px;top:403.87px;width:2px;height:27.06px;background:#1c1c1d;"></b>
<svg style="left:226px;top:411.4px" width="9" height="13" viewBox="0 0 9 13"><path d="M1.5 1.5l6 5-6 5z" fill="none" stroke="#e0e0e0" stroke-width="1.6"/></svg>
<span style="left:248.5px;top:406.4px;letter-spacing:-0.18px;">Fur.UnifyResult.SuccessUnifyRe...</span>
<span style="right:1920px;top:406.4px;right:1241px">398 (22.03%)</span>
<span style="right:1920px;top:406.4px;right:1097.5px">0 (0.00%)</span>
<span style="left:786px;top:406.4px;">Fur.dll</span>
<span style="left:928.5px;top:406.4px;letter-spacing:-0.36px;"><i>网络</i> | JIT | <i>驱动程</i>...</span>
<b style="left:0px;top:456.49px;width:1067px;height:2px;background:#1c1c1d;"></b>
<b style="left:491.5px;top:430.93px;width:2px;height:27.06px;background:#1c1c1d;"></b>
<b style="left:635px;top:430.93px;width:2px;height:27.06px;background:#1c1c1d;"></b>
<b style="left:779px;top:430.93px;width:2px;height:27.06px;background:#1c1c1d;"></b>
<b style="left:922.5px;top:430.93px;width:2px;height:27.06px;background:#1c1c1d;"></b>
<svg style="left:226px;top:438.46px" width="9" height="13" viewBox="0 0 9 13"><path d="M1.5 1.5l6 5-6 5z" fill="none" stroke="#e0e0e0" stroke-width="1.6"/></svg>
<span style="left:248.5px;top:433.46px;">Microsoft.AspNetCore.Mvc.Ne...</span>
<span style="right:1920px;top:433.46px;right:1241px">26 (1.44%)</span>
<span style="right:1920px;top:433.46px;right:1097.5px">0 (0.00%)</span>
<span style="left:786px;top:433.46px;letter-spacing:0.02px;">Microsoft.AspNe...</span>
<span style="left:928.5px;top:433.46px;"><i>网络</i> | JIT | <i>内核</i></span>
<b style="left:0px;top:483.55px;width:1067px;height:2px;background:#1c1c1d;"></b>
<b style="left:491.5px;top:457.99px;width:2px;height:27.06px;background:#1c1c1d;"></b>
<b style="left:635px;top:457.99px;width:2px;height:27.06px;background:#1c1c1d;"></b>
<b style="left:779px;top:457.99px;width:2px;height:27.06px;background:#1c1c1d;"></b>
<b style="left:922.5px;top:457.99px;width:2px;height:27.06px;background:#1c1c1d;"></b>
<svg style="left:226px;top:465.52px" width="9" height="13" viewBox="0 0 9 13"><path d="M1.5 1.5l6 5-6 5z" fill="none" stroke="#e0e0e0" stroke-width="1.6"/></svg>
<span style="left:248.5px;top:460.52px;">StackExchange.Profiling.Data....</span>
<span style="right:1920px;top:460.52px;right:1241px">6 (0.33%)</span>
<span style="right:1920px;top:460.52px;right:1097.5px">2 (0.11%)</span>
<span style="left:786px;top:460.52px;">MiniProfiler.Asp...</span>
<span style="left:928.5px;top:460.52px;">JIT | <i>内核</i></span>
<b style="left:0px;top:510.61px;width:1067px;height:2px;background:#1c1c1d;"></b>
<b style="left:491.5px;top:485.05px;width:2px;height:27.06px;background:#1c1c1d;"></b>
<b style="left:635px;top:485.05px;width:2px;height:27.06px;background:#1c1c1d;"></b>
<b style="left:779px;top:485.05px;width:2px;height:27.06px;background:#1c1c1d;"></b>
<b style="left:922.5px;top:485.05px;width:2px;height:27.06px;background:#1c1c1d;"></b>
<svg style="left:226px;top:492.58px" width="9" height="13" viewBox="0 0 9 13"><path d="M1.5 1.5l6 5-6 5z" fill="none" stroke="#e0e0e0" stroke-width="1.6"/></svg>
<span style="left:248.5px;top:487.58px;">Fur.DataValidation.DataValidati...</span>
<span style="right:1920px;top:487.58px;right:1241px">5 (0.28%)</span>
<span style="right:1920px;top:487.58px;right:1097.5px">0 (0.00%)</span>
<span style="left:786px;top:487.58px;">Fur.dll</span>
<span style="left:928.5px;top:487.58px;">JIT | <i>内核</i></span>
<b style="left:0px;top:537.67px;width:1067px;height:2px;background:#1c1c1d;"></b>
<b style="left:491.5px;top:512.11px;width:2px;height:27.06px;background:#1c1c1d;"></b>
<b style="left:635px;top:512.11px;width:2px;height:27.06px;background:#1c1c1d;"></b>
<b style="left:779px;top:512.11px;width:2px;height:27.06px;background:#1c1c1d;"></b>
<b style="left:922.5px;top:512.11px;width:2px;height:27.06px;background:#1c1c1d;"></b>
<span style="left:248.5px;top:514.64px;">Microsoft.AspNetCore.Mvc.Ne...</span>
<span style="right:1920px;top:514.64px;right:1241px">1 (0.06%)</span>
<span style="right:1920px;top:514.64px;right:1097.5px">1 (0.06%)</span>
<span style="left:786px;top:514.64px;letter-spacing:0.02px;">Microsoft.AspNe...</span>
<span style="left:928.5px;top:514.64px;"></span>
<b style="left:0px;top:564.73px;width:1067px;height:2px;background:#1c1c1d;"></b>
<b style="left:491.5px;top:539.17px;width:2px;height:27.06px;background:#1c1c1d;"></b>
<b style="left:635px;top:539.17px;width:2px;height:27.06px;background:#1c1c1d;"></b>
<b style="left:779px;top:539.17px;width:2px;height:27.06px;background:#1c1c1d;"></b>
<b style="left:922.5px;top:539.17px;width:2px;height:27.06px;background:#1c1c1d;"></b>
<svg style="left:106px;top:546.7px" width="9" height="13" viewBox="0 0 9 13"><path d="M1.5 1.5l6 5-6 5z" fill="none" stroke="#e0e0e0" stroke-width="1.6"/></svg>
<span style="left:128.5px;top:541.7px;">StackExchange.Profiling.MiniProfilerMiddleware...</span>
<span style="right:1920px;top:541.7px;right:1241px">9 (0.50%)</span>
<span style="right:1920px;top:541.7px;right:1097.5px">0 (0.00%)</span>
<span style="left:786px;top:541.7px;">MiniProfiler.Asp...</span>
<span style="left:928.5px;top:541.7px;">JIT | <i>内核</i></span>
<b style="left:0px;top:591.79px;width:1067px;height:2px;background:#1c1c1d;"></b>
<b style="left:491.5px;top:566.23px;width:2px;height:27.06px;background:#1c1c1d;"></b>
<b style="left:635px;top:566.23px;width:2px;height:27.06px;background:#1c1c1d;"></b>
<b style="left:779px;top:566.23px;width:2px;height:27.06px;background:#1c1c1d;"></b>
<b style="left:922.5px;top:566.23px;width:2px;height:27.06px;background:#1c1c1d;"></b>
<svg style="left:61px;top:573.76px" width="9" height="13" viewBox="0 0 9 13"><path d="M1.5 1.5l6 5-6 5z" fill="none" stroke="#e0e0e0" stroke-width="1.6"/></svg>
<span style="left:83.5px;top:568.76px;">Microsoft.EntityFrameworkCore.Internal.ScopedDbCo...</span>
<span style="right:1920px;top:568.76px;right:1241px">14 (0.77%)</span>
<span style="right:1920px;top:568.76px;right:1097.5px">0 (0.00%)</span>
<span style="left:786px;top:568.76px;">Microsoft.Entity...</span>
<span style="left:928.5px;top:568.76px;">JIT | <i>内核</i></span>
<b style="left:0px;top:618.85px;width:1067px;height:2px;background:#1c1c1d;"></b>
<b style="left:491.5px;top:593.29px;width:2px;height:27.06px;background:#1c1c1d;"></b>
<b style="left:635px;top:593.29px;width:2px;height:27.06px;background:#1c1c1d;"></b>
<b style="left:779px;top:593.29px;width:2px;height:27.06px;background:#1c1c1d;"></b>
<b style="left:922.5px;top:593.29px;width:2px;height:27.06px;background:#1c1c1d;"></b>
<svg style="left:61px;top:600.82px" width="9" height="13" viewBox="0 0 9 13"><path d="M1.5 1.5l6 5-6 5z" fill="none" stroke="#e0e0e0" stroke-width="1.6"/></svg>
<span style="left:83.5px;top:595.82px;letter-spacing:0.1px;">Microsoft.EntityFrameworkCore.DbContext.DisposeAs...</span>
<span style="right:1920px;top:595.82px;right:1241px">2 (0.11%)</span>
<span style="right:1920px;top:595.82px;right:1097.5px">0 (0.00%)</span>
<span style="left:786px;top:595.82px;">Microsoft.Entity...</span>
<span style="left:928.5px;top:595.82px;"><i>内核</i></span>
<b style="left:0px;top:645.91px;width:1067px;height:2px;background:#1c1c1d;"></b>
<b style="left:491.5px;top:620.35px;width:2px;height:27.06px;background:#1c1c1d;"></b>
<b style="left:635px;top:620.35px;width:2px;height:27.06px;background:#1c1c1d;"></b>
<b style="left:779px;top:620.35px;width:2px;height:27.06px;background:#1c1c1d;"></b>
<b style="left:922.5px;top:620.35px;width:2px;height:27.06px;background:#1c1c1d;"></b>
<svg style="left:31px;top:627.88px" width="9" height="13" viewBox="0 0 9 13"><path d="M1.5 1.5l6 5-6 5z" fill="none" stroke="#e0e0e0" stroke-width="1.6"/></svg>
<span style="left:53.5px;top:622.88px;"><u>[<i>不可走</i>]</u></span>
<span style="right:1920px;top:622.88px;right:1241px">9 (0.50%)</span>
<span style="right:1920px;top:622.88px;right:1097.5px">4 (0.22%)</span>
<span style="left:786px;top:622.88px;">[<i>外部代码</i>]</span>
<span style="left:928.5px;top:622.88px;"></span>
<b style="left:1066px;top:0px;width:2px;height:647.41px;background:#1c1c1d;"></b>
</div>
<b style="left:9px;top:946px;width:1871px;height:3px;background:#4b4b50;"></b>
<b style="left:9px;top:949px;width:1871px;height:28px;background:#2a2a2c;"></b>
<b style="left:9px;top:977px;width:1871px;height:2px;background:#3a3a3d;"></b>
<b style="left:9px;top:979px;width:1871px;height:29px;background:#262627;"></b>
<b style="left:9px;top:1008px;width:1879px;height:2px;background:#333336;"></b>
<span style="left:940px;top:984px;transform:translateX(-50%);"><i>未加载</i> PDB<i>，因此源信息不可用。请右键单击函数名以加载模块符号。</i></span>
<svg style="left:5px;top:1054px" width="20" height="16" viewBox="0 0 20 16"><path d="M5 2h14l-3.5 12H1.5z" fill="none" stroke="#dff0fc" stroke-width="2"/></svg>
<span style="left:35px;top:1052.5px;"><i>就绪</i></span>
<svg style="left:1576px;top:1055px" width="13" height="16" viewBox="0 0 13 16"><path d="M6.5 1.5v14M1 7l5.5-5.5L12 7" fill="none" stroke="#fff" stroke-width="2.4"/></svg>
<span style="left:1599px;top:1052.5px;">0</span>
<svg style="left:1637px;top:1055px" width="16" height="16" viewBox="0 0 16 16"><path d="M2 14l1-4 8-8 3 3-8 8z" fill="#fff"/></svg>
<span style="left:1664px;top:1052.5px;">1</span>
<svg style="left:1701px;top:1054px" width="18" height="18" viewBox="0 0 18 18"><path d="M9 0l9 9-9 9-9-9z" fill="#fff"/><path d="M6 5l6 6M9 8v5" stroke="#007acc" stroke-width="1.6"/><circle cx="6.5" cy="5.5" r="1.5" fill="#007acc"/><circle cx="9" cy="13" r="1.5" fill="#007acc"/><circle cx="12" cy="10.5" r="1.5" fill="#007acc"/></svg>
<span style="left:1727.5px;top:1052.5px;">Fur</span>
<svg style="left:1778px;top:1053px" width="18" height="20" viewBox="0 0 18 20"><path d="M4 3c0 6 5 5 5 10v6M14 3c0 6-5 5-5 10" fill="none" stroke="#e6f2fb" stroke-width="1.8"/><circle cx="4" cy="3" r="2.2" fill="#e6f2fb"/><circle cx="14" cy="3" r="2.2" fill="#e6f2fb"/></svg>
<span style="left:1805px;top:1052.5px;">rc1</span>
<svg style="left:1836px;top:1061px" width="9" height="5" viewBox="0 0 9 5"><path d="M0 5h9L4.5 0z" fill="#fff"/></svg>
<svg style="left:1880px;top:1053px" width="18" height="20" viewBox="0 0 18 20"><path d="M9 1c4 0 5.5 3 5.5 7 0 3 1.5 5 2.5 6H1c1-1 2.5-3 2.5-6C3.5 4 5 1 9 1z" fill="#fff"/><path d="M6.5 16.5a2.5 2.5 0 0 0 5 0" fill="#fff"/></svg>
</div>
<div class="wm">
<div style="position:absolute;left:2px;top:4.5px;width:70px;height:70px;background:#0a5aaf"></div>
<svg style="position:absolute;left:2px;top:4.5px" width="70" height="70" viewBox="0 0 70 70">
<path d="M35.5 17.5L52.5 27.5V41.5L35.5 52L18.2 41.5V27.5Z" fill="#f4f6fa" stroke="#f4f6fa" stroke-width="9.5" stroke-linejoin="round"/>
<path d="M35.5 11V25M35.5 44V59" stroke="#0a5aaf" stroke-width="4.2"/>
<path d="M44.4 34A8.9 8.9 0 1 0 43 38.8" fill="none" stroke="#0a5aaf" stroke-width="4.6"/>
<path d="M28.5 34H59" stroke="#0a5aaf" stroke-width="4.2"/>
<path d="M40 38l7.5-1.5-4.5 5.5z" fill="#0a5aaf"/>
</svg>
<span style="position:absolute;left:81px;top:8px;font:500 42px/52px 'Liberation Sans','Noto Sans CJK SC',sans-serif;color:#0f5fb2;letter-spacing:4.3px;white-space:pre">站长下载</span>
<span style="position:absolute;left:78.5px;top:53.5px;font:13.6px/18px 'Liberation Sans',sans-serif;color:#6a6a6a;white-space:pre;letter-spacing:.1px">Easck.Com Webmaster Codes</span>
</div>
</body></html>
